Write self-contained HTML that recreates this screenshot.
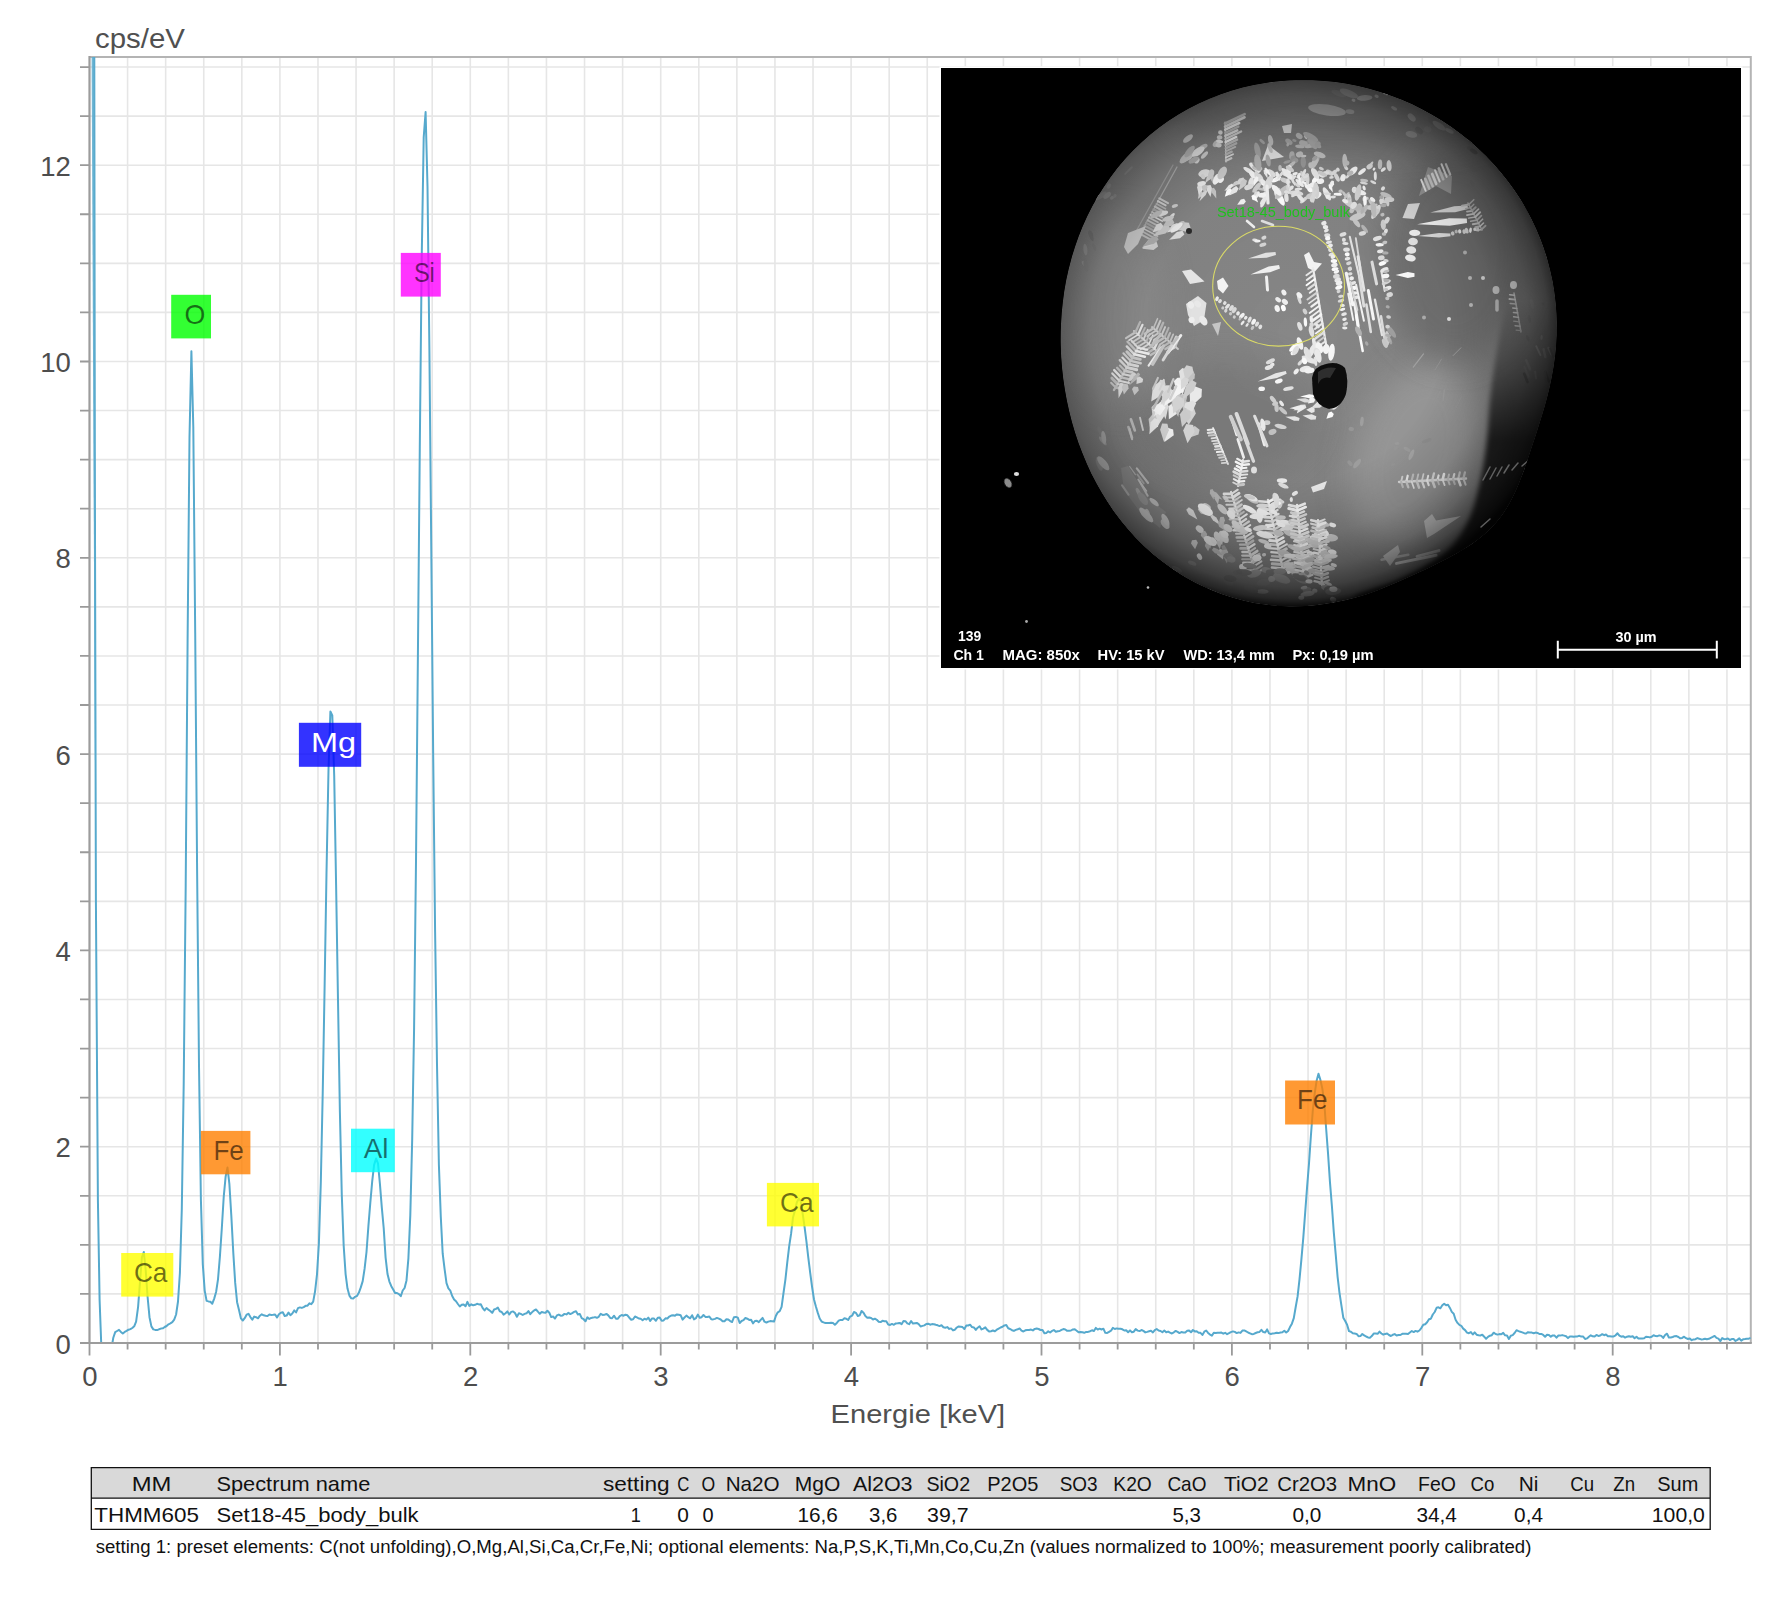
<!DOCTYPE html>
<html><head><meta charset="utf-8"><title>EDS spectrum Set18-45_body_bulk</title>
<style>
html,body{margin:0;padding:0;background:#fff;}
body{width:1782px;height:1599px;overflow:hidden;font-family:"Liberation Sans",sans-serif;}
svg{display:block;font-family:"Liberation Sans",sans-serif;}
</style></head><body>
<svg width="1782" height="1599" viewBox="0 0 1782 1599">
<rect width="1782" height="1599" fill="#fff"/>
<!-- chart -->
<path d="M127.58 57.0V1343.0M165.66 57.0V1343.0M203.74 57.0V1343.0M241.82 57.0V1343.0M279.90 57.0V1343.0M317.98 57.0V1343.0M356.06 57.0V1343.0M394.14 57.0V1343.0M432.22 57.0V1343.0M470.30 57.0V1343.0M508.38 57.0V1343.0M546.46 57.0V1343.0M584.54 57.0V1343.0M622.62 57.0V1343.0M660.70 57.0V1343.0M698.78 57.0V1343.0M736.86 57.0V1343.0M774.94 57.0V1343.0M813.02 57.0V1343.0M851.10 57.0V1343.0M889.18 57.0V1343.0M927.26 57.0V1343.0M965.34 57.0V1343.0M1003.42 57.0V1343.0M1041.50 57.0V1343.0M1079.58 57.0V1343.0M1117.66 57.0V1343.0M1155.74 57.0V1343.0M1193.82 57.0V1343.0M1231.90 57.0V1343.0M1269.98 57.0V1343.0M1308.06 57.0V1343.0M1346.14 57.0V1343.0M1384.22 57.0V1343.0M1422.30 57.0V1343.0M1460.38 57.0V1343.0M1498.46 57.0V1343.0M1536.54 57.0V1343.0M1574.62 57.0V1343.0M1612.70 57.0V1343.0M1650.78 57.0V1343.0M1688.86 57.0V1343.0M1726.94 57.0V1343.0M89.5 1293.92H1750.8M89.5 1244.85H1750.8M89.5 1195.78H1750.8M89.5 1146.70H1750.8M89.5 1097.62H1750.8M89.5 1048.55H1750.8M89.5 999.47H1750.8M89.5 950.40H1750.8M89.5 901.33H1750.8M89.5 852.25H1750.8M89.5 803.17H1750.8M89.5 754.10H1750.8M89.5 705.02H1750.8M89.5 655.95H1750.8M89.5 606.88H1750.8M89.5 557.80H1750.8M89.5 508.72H1750.8M89.5 459.65H1750.8M89.5 410.57H1750.8M89.5 361.50H1750.8M89.5 312.42H1750.8M89.5 263.35H1750.8M89.5 214.27H1750.8M89.5 165.20H1750.8M89.5 116.12H1750.8M89.5 67.05H1750.8" stroke="#e6e6e6" stroke-width="1.6" fill="none"/>
<path d="M89.5 57.0H1750.8V1343.0" stroke="#b4b4b4" stroke-width="2" fill="none"/>
<path d="M89.50 1343.0v12.5M127.58 1343.0v6.5M165.66 1343.0v6.5M203.74 1343.0v6.5M241.82 1343.0v6.5M279.90 1343.0v12.5M317.98 1343.0v6.5M356.06 1343.0v6.5M394.14 1343.0v6.5M432.22 1343.0v6.5M470.30 1343.0v12.5M508.38 1343.0v6.5M546.46 1343.0v6.5M584.54 1343.0v6.5M622.62 1343.0v6.5M660.70 1343.0v12.5M698.78 1343.0v6.5M736.86 1343.0v6.5M774.94 1343.0v6.5M813.02 1343.0v6.5M851.10 1343.0v12.5M889.18 1343.0v6.5M927.26 1343.0v6.5M965.34 1343.0v6.5M1003.42 1343.0v6.5M1041.50 1343.0v12.5M1079.58 1343.0v6.5M1117.66 1343.0v6.5M1155.74 1343.0v6.5M1193.82 1343.0v6.5M1231.90 1343.0v12.5M1269.98 1343.0v6.5M1308.06 1343.0v6.5M1346.14 1343.0v6.5M1384.22 1343.0v6.5M1422.30 1343.0v12.5M1460.38 1343.0v6.5M1498.46 1343.0v6.5M1536.54 1343.0v6.5M1574.62 1343.0v6.5M1612.70 1343.0v12.5M1650.78 1343.0v6.5M1688.86 1343.0v6.5M1726.94 1343.0v6.5M89.5 1343.00h-9.5M89.5 1293.92h-9.5M89.5 1244.85h-9.5M89.5 1195.78h-9.5M89.5 1146.70h-9.5M89.5 1097.62h-9.5M89.5 1048.55h-9.5M89.5 999.47h-9.5M89.5 950.40h-9.5M89.5 901.33h-9.5M89.5 852.25h-9.5M89.5 803.17h-9.5M89.5 754.10h-9.5M89.5 705.02h-9.5M89.5 655.95h-9.5M89.5 606.88h-9.5M89.5 557.80h-9.5M89.5 508.72h-9.5M89.5 459.65h-9.5M89.5 410.57h-9.5M89.5 361.50h-9.5M89.5 312.42h-9.5M89.5 263.35h-9.5M89.5 214.27h-9.5M89.5 165.20h-9.5M89.5 116.12h-9.5M89.5 67.05h-9.5" stroke="#9a9a9a" stroke-width="1.8" fill="none"/>
<g font-size="27.5" fill="#4d4d4d">
<text x="70.9" y="1353.6" text-anchor="end">0</text>
<text x="70.9" y="1157.3" text-anchor="end">2</text>
<text x="70.9" y="961.0" text-anchor="end">4</text>
<text x="70.9" y="764.7" text-anchor="end">6</text>
<text x="70.9" y="568.4" text-anchor="end">8</text>
<text x="70.9" y="372.1" text-anchor="end">10</text>
<text x="70.9" y="175.8" text-anchor="end">12</text>
<text x="89.8" y="1385.8" text-anchor="middle">0</text>
<text x="280.2" y="1385.8" text-anchor="middle">1</text>
<text x="470.6" y="1385.8" text-anchor="middle">2</text>
<text x="661.0" y="1385.8" text-anchor="middle">3</text>
<text x="851.4" y="1385.8" text-anchor="middle">4</text>
<text x="1041.8" y="1385.8" text-anchor="middle">5</text>
<text x="1232.2" y="1385.8" text-anchor="middle">6</text>
<text x="1422.6" y="1385.8" text-anchor="middle">7</text>
<text x="1613.0" y="1385.8" text-anchor="middle">8</text>
</g>
<text x="95" y="47.7" font-size="27.8" fill="#505050" textLength="90" lengthAdjust="spacingAndGlyphs">cps/eV</text>
<text x="830.6" y="1423.2" font-size="26.4" fill="#505050" textLength="174.6" lengthAdjust="spacingAndGlyphs">Energie [keV]</text>
<clipPath id="pc"><rect x="89.5" y="57.0" width="1661.3" height="1287.0"/></clipPath>
<path clip-path="url(#pc)" d="M93.6,-400.0 94.3,57.0 94.8,450.0 95.9,900.0 97.9,1200.0 99.6,1300.0 101.2,1343.0 112.4,1343.0 113.3,1337.7 115.2,1332.1 117.1,1331.0 119.0,1329.9 120.9,1331.9 122.8,1333.5 124.7,1331.9 126.6,1330.9 128.5,1329.7 130.4,1329.1 132.3,1328.0 134.2,1326.3 136.1,1321.7 138.1,1306.8 140.0,1281.8 141.9,1257.3 143.8,1252.0 145.7,1270.0 147.6,1297.0 149.5,1317.2 151.4,1326.4 153.3,1329.4 155.2,1329.9 157.1,1330.1 159.0,1329.3 160.9,1328.6 162.8,1328.3 164.7,1327.0 166.6,1326.0 168.5,1324.3 170.4,1323.4 172.3,1322.2 174.2,1319.6 176.1,1314.5 178.0,1301.5 179.9,1273.0 181.8,1209.3 183.7,1084.3 185.7,885.6 187.6,640.7 189.5,437.2 191.4,351.3 193.3,427.0 195.2,632.4 197.1,869.8 199.0,1065.3 200.9,1199.8 202.8,1264.4 204.7,1290.6 206.6,1300.9 208.5,1301.4 210.4,1301.7 212.3,1303.7 214.2,1298.6 216.1,1292.0 218.0,1279.3 219.9,1256.7 221.8,1228.5 223.7,1197.2 225.6,1176.8 227.5,1167.5 229.4,1184.2 231.3,1215.4 233.3,1252.9 235.2,1282.9 237.1,1302.2 239.0,1310.0 240.9,1318.4 242.8,1320.5 244.7,1318.2 246.6,1314.7 248.5,1313.8 250.4,1317.1 252.3,1319.7 254.2,1316.6 256.1,1317.2 258.0,1318.3 259.9,1315.7 261.8,1314.3 263.7,1315.3 265.6,1315.8 267.5,1316.1 269.4,1314.5 271.3,1314.9 273.2,1314.8 275.1,1314.5 277.0,1317.4 278.9,1314.2 280.9,1312.7 282.8,1312.3 284.7,1316.0 286.6,1315.6 288.5,1312.6 290.4,1315.2 292.3,1313.6 294.2,1310.4 296.1,1312.4 298.0,1308.2 299.9,1307.4 301.8,1307.9 303.7,1307.1 305.6,1305.8 307.5,1305.7 309.4,1303.3 311.3,1304.2 313.2,1301.6 315.1,1291.1 317.0,1274.3 318.9,1243.3 320.8,1182.7 322.7,1094.1 324.6,987.4 326.5,872.7 328.5,769.7 330.4,711.5 332.3,715.5 334.2,775.6 336.1,885.1 338.0,1000.4 339.9,1112.3 341.8,1195.3 343.7,1246.0 345.6,1274.1 347.5,1288.6 349.4,1295.6 351.3,1298.3 353.2,1298.5 355.1,1296.8 357.0,1295.9 358.9,1292.6 360.8,1287.4 362.7,1281.1 364.6,1268.7 366.5,1252.0 368.4,1226.1 370.3,1202.8 372.2,1181.3 374.1,1164.9 376.1,1158.5 378.0,1163.3 379.9,1183.6 381.8,1207.3 383.7,1228.0 385.6,1257.6 387.5,1274.0 389.4,1281.6 391.3,1286.2 393.2,1289.5 395.1,1293.0 397.0,1293.0 398.9,1294.1 400.8,1296.2 402.7,1290.5 404.6,1288.0 406.5,1280.4 408.4,1258.3 410.3,1215.1 412.2,1138.9 414.1,1027.4 416.0,861.3 417.9,655.8 419.8,446.5 421.7,259.6 423.7,137.4 425.6,112.0 427.5,186.2 429.4,350.2 431.3,551.5 433.2,756.3 435.1,931.6 437.0,1064.4 438.9,1164.9 440.8,1217.0 442.7,1253.7 444.6,1269.1 446.5,1283.1 448.4,1288.4 450.3,1290.7 452.2,1296.0 454.1,1299.5 456.0,1301.2 457.9,1304.0 459.8,1306.5 461.7,1304.8 463.6,1304.4 465.5,1306.3 467.4,1301.8 469.3,1305.9 471.3,1304.3 473.2,1305.3 475.1,1304.8 477.0,1303.8 478.9,1304.4 480.8,1304.2 482.7,1308.1 484.6,1310.4 486.5,1308.0 488.4,1309.7 490.3,1311.0 492.2,1312.9 494.1,1309.5 496.0,1308.9 497.9,1307.6 499.8,1311.3 501.7,1312.0 503.6,1314.7 505.5,1313.3 507.4,1311.4 509.3,1314.5 511.2,1311.9 513.1,1311.4 515.0,1313.0 516.9,1316.8 518.9,1313.3 520.8,1313.9 522.7,1315.0 524.6,1313.9 526.5,1313.3 528.4,1311.1 530.3,1314.1 532.2,1312.1 534.1,1310.4 536.0,1309.5 537.9,1311.7 539.8,1313.8 541.7,1312.0 543.6,1312.5 545.5,1312.8 547.4,1310.8 549.3,1312.7 551.2,1317.1 553.1,1316.5 555.0,1318.6 556.9,1315.4 558.8,1314.6 560.7,1315.7 562.6,1315.4 564.5,1313.9 566.5,1314.4 568.4,1312.7 570.3,1314.1 572.2,1313.1 574.1,1311.9 576.0,1311.2 577.9,1314.5 579.8,1313.9 581.7,1318.1 583.6,1319.2 585.5,1321.2 587.4,1317.3 589.3,1318.9 591.2,1317.9 593.1,1317.6 595.0,1317.1 596.9,1317.8 598.8,1316.8 600.7,1313.8 602.6,1314.9 604.5,1314.8 606.4,1313.9 608.3,1315.4 610.2,1317.9 612.1,1318.2 614.1,1315.7 616.0,1318.7 617.9,1318.7 619.8,1316.1 621.7,1315.0 623.6,1315.7 625.5,1314.7 627.4,1315.3 629.3,1317.7 631.2,1319.7 633.1,1319.3 635.0,1316.5 636.9,1317.4 638.8,1318.5 640.7,1318.8 642.6,1320.2 644.5,1318.7 646.4,1319.6 648.3,1317.6 650.2,1320.9 652.1,1318.4 654.0,1318.6 655.9,1320.8 657.8,1317.7 659.7,1317.6 661.7,1320.7 663.6,1320.4 665.5,1318.3 667.4,1318.4 669.3,1316.6 671.2,1315.6 673.1,1315.3 675.0,1315.7 676.9,1314.4 678.8,1314.8 680.7,1315.3 682.6,1319.7 684.5,1317.5 686.4,1315.6 688.3,1317.2 690.2,1318.3 692.1,1315.2 694.0,1319.4 695.9,1318.2 697.8,1314.6 699.7,1317.8 701.6,1317.2 703.5,1315.0 705.4,1316.9 707.3,1317.0 709.3,1316.5 711.2,1319.2 713.1,1319.4 715.0,1318.9 716.9,1317.9 718.8,1318.7 720.7,1319.5 722.6,1321.2 724.5,1321.2 726.4,1319.3 728.3,1319.5 730.2,1321.1 732.1,1322.0 734.0,1317.2 735.9,1316.9 737.8,1317.6 739.7,1323.0 741.6,1321.0 743.5,1320.2 745.4,1318.0 747.3,1318.7 749.2,1319.9 751.1,1319.8 753.0,1323.4 754.9,1321.0 756.9,1320.7 758.8,1322.2 760.7,1319.9 762.6,1317.9 764.5,1321.7 766.4,1322.6 768.3,1321.6 770.2,1321.1 772.1,1321.3 774.0,1321.6 775.9,1315.8 777.8,1312.3 779.7,1311.2 781.6,1306.8 783.5,1293.0 785.4,1279.6 787.3,1262.1 789.2,1246.2 791.1,1233.7 793.0,1217.5 794.9,1210.7 796.8,1202.5 798.7,1198.7 800.6,1200.6 802.5,1212.5 804.5,1226.3 806.4,1241.2 808.3,1257.7 810.2,1272.8 812.1,1287.1 814.0,1299.5 815.9,1306.5 817.8,1312.9 819.7,1318.5 821.6,1321.5 823.5,1322.4 825.4,1323.0 827.3,1322.9 829.2,1323.1 831.1,1322.8 833.0,1323.1 834.9,1324.7 836.8,1322.9 838.7,1320.7 840.6,1319.9 842.5,1319.9 844.4,1318.3 846.3,1318.8 848.2,1319.9 850.1,1316.6 852.1,1315.7 854.0,1312.0 855.9,1312.8 857.8,1316.0 859.7,1315.3 861.6,1311.0 863.5,1312.7 865.4,1316.1 867.3,1317.8 869.2,1317.5 871.1,1318.0 873.0,1319.5 874.9,1318.7 876.8,1319.8 878.7,1321.7 880.6,1322.1 882.5,1320.8 884.4,1321.2 886.3,1321.3 888.2,1324.5 890.1,1324.9 892.0,1323.9 893.9,1324.8 895.8,1323.4 897.7,1323.3 899.7,1322.9 901.6,1324.2 903.5,1321.1 905.4,1321.2 907.3,1323.4 909.2,1324.2 911.1,1321.1 913.0,1323.6 914.9,1323.2 916.8,1322.9 918.7,1324.1 920.6,1326.5 922.5,1325.9 924.4,1325.4 926.3,1324.0 928.2,1323.7 930.1,1324.7 932.0,1324.1 933.9,1324.2 935.8,1324.8 937.7,1325.3 939.6,1326.1 941.5,1325.2 943.4,1327.2 945.3,1327.7 947.3,1327.1 949.2,1328.9 951.1,1328.4 953.0,1330.4 954.9,1329.7 956.8,1327.5 958.7,1326.4 960.6,1326.7 962.5,1327.1 964.4,1329.0 966.3,1325.6 968.2,1325.5 970.1,1324.7 972.0,1327.1 973.9,1327.4 975.8,1329.9 977.7,1327.7 979.6,1326.3 981.5,1329.4 983.4,1328.6 985.3,1327.3 987.2,1329.9 989.1,1331.4 991.0,1331.2 992.9,1330.5 994.9,1331.3 996.8,1329.7 998.7,1328.6 1000.6,1327.5 1002.5,1326.8 1004.4,1325.4 1006.3,1325.1 1008.2,1328.3 1010.1,1329.0 1012.0,1330.2 1013.9,1330.9 1015.8,1329.9 1017.7,1329.3 1019.6,1328.4 1021.5,1330.6 1023.4,1331.5 1025.3,1330.3 1027.2,1329.9 1029.1,1329.9 1031.0,1329.6 1032.9,1330.4 1034.8,1328.9 1036.7,1328.5 1038.6,1329.0 1040.5,1330.0 1042.5,1329.9 1044.4,1333.3 1046.3,1332.9 1048.2,1331.3 1050.1,1332.5 1052.0,1330.9 1053.9,1330.1 1055.8,1331.8 1057.7,1331.2 1059.6,1331.0 1061.5,1329.9 1063.4,1329.1 1065.3,1329.5 1067.2,1330.8 1069.1,1330.7 1071.0,1330.5 1072.9,1329.4 1074.8,1329.3 1076.7,1330.7 1078.6,1332.3 1080.5,1331.9 1082.4,1332.2 1084.3,1332.8 1086.2,1331.9 1088.1,1331.9 1090.1,1331.2 1092.0,1330.3 1093.9,1331.0 1095.8,1327.9 1097.7,1329.6 1099.6,1328.7 1101.5,1329.5 1103.4,1328.7 1105.3,1332.8 1107.2,1332.9 1109.1,1331.8 1111.0,1330.7 1112.9,1327.9 1114.8,1329.0 1116.7,1328.4 1118.6,1328.7 1120.5,1328.7 1122.4,1329.3 1124.3,1330.5 1126.2,1330.3 1128.1,1332.2 1130.0,1330.4 1131.9,1332.3 1133.8,1331.7 1135.7,1329.1 1137.7,1330.6 1139.6,1331.1 1141.5,1330.0 1143.4,1330.9 1145.3,1332.4 1147.2,1331.9 1149.1,1331.3 1151.0,1330.8 1152.9,1332.4 1154.8,1330.1 1156.7,1329.0 1158.6,1330.5 1160.5,1331.0 1162.4,1332.2 1164.3,1330.6 1166.2,1332.3 1168.1,1331.6 1170.0,1332.7 1171.9,1333.5 1173.8,1332.3 1175.7,1330.9 1177.6,1331.8 1179.5,1333.1 1181.4,1332.0 1183.3,1332.5 1185.3,1332.4 1187.2,1330.8 1189.1,1330.5 1191.0,1332.3 1192.9,1330.0 1194.8,1331.4 1196.7,1331.2 1198.6,1332.7 1200.5,1332.8 1202.4,1334.9 1204.3,1331.7 1206.2,1330.5 1208.1,1332.9 1210.0,1334.6 1211.9,1335.6 1213.8,1332.7 1215.7,1333.0 1217.6,1332.7 1219.5,1332.8 1221.4,1332.6 1223.3,1333.7 1225.2,1332.8 1227.1,1334.2 1229.0,1333.2 1230.9,1332.1 1232.9,1331.4 1234.8,1331.9 1236.7,1333.1 1238.6,1332.4 1240.5,1332.9 1242.4,1330.6 1244.3,1330.4 1246.2,1331.4 1248.1,1332.5 1250.0,1333.3 1251.9,1334.2 1253.8,1333.9 1255.7,1333.0 1257.6,1332.3 1259.5,1331.9 1261.4,1329.8 1263.3,1332.1 1265.2,1332.5 1267.1,1329.4 1269.0,1333.4 1270.9,1334.0 1272.8,1333.4 1274.7,1333.2 1276.6,1332.7 1278.5,1333.1 1280.5,1332.5 1282.4,1332.2 1284.3,1330.7 1286.2,1332.5 1288.1,1331.0 1290.0,1327.1 1291.9,1323.7 1293.8,1318.2 1295.7,1307.0 1297.6,1296.4 1299.5,1279.4 1301.4,1259.4 1303.3,1237.6 1305.2,1212.4 1307.1,1186.9 1309.0,1163.5 1310.9,1135.8 1312.8,1110.5 1314.7,1093.3 1316.6,1080.8 1318.5,1073.8 1320.4,1079.9 1322.3,1088.4 1324.2,1101.6 1326.1,1128.0 1328.1,1154.3 1330.0,1182.6 1331.9,1206.0 1333.8,1232.4 1335.7,1254.3 1337.6,1276.8 1339.5,1292.8 1341.4,1305.3 1343.3,1317.7 1345.2,1321.0 1347.1,1324.8 1349.0,1331.1 1350.9,1331.7 1352.8,1333.3 1354.7,1333.6 1356.6,1333.9 1358.5,1336.2 1360.4,1336.1 1362.3,1334.0 1364.2,1335.3 1366.1,1336.5 1368.0,1337.4 1369.9,1337.7 1371.8,1336.1 1373.7,1333.6 1375.7,1333.6 1377.6,1333.8 1379.5,1331.6 1381.4,1333.5 1383.3,1334.7 1385.2,1333.9 1387.1,1333.5 1389.0,1335.0 1390.9,1336.0 1392.8,1334.8 1394.7,1334.1 1396.6,1335.5 1398.5,1335.0 1400.4,1335.0 1402.3,1333.8 1404.2,1333.8 1406.1,1333.8 1408.0,1334.1 1409.9,1332.5 1411.8,1331.0 1413.7,1332.1 1415.6,1330.9 1417.5,1331.7 1419.4,1330.5 1421.3,1328.1 1423.3,1324.7 1425.2,1324.2 1427.1,1322.2 1429.0,1319.2 1430.9,1318.7 1432.8,1314.5 1434.7,1312.0 1436.6,1307.8 1438.5,1307.3 1440.4,1308.3 1442.3,1305.3 1444.2,1303.7 1446.1,1305.2 1448.0,1304.7 1449.9,1307.9 1451.8,1311.9 1453.7,1313.8 1455.6,1319.7 1457.5,1322.9 1459.4,1324.9 1461.3,1325.8 1463.2,1328.6 1465.1,1330.1 1467.0,1332.6 1468.9,1333.2 1470.9,1332.1 1472.8,1334.5 1474.7,1332.4 1476.6,1334.7 1478.5,1335.3 1480.4,1335.5 1482.3,1334.7 1484.2,1336.7 1486.1,1338.8 1488.0,1336.9 1489.9,1335.7 1491.8,1335.2 1493.7,1332.7 1495.6,1334.0 1497.5,1334.6 1499.4,1334.1 1501.3,1334.3 1503.2,1332.9 1505.1,1335.3 1507.0,1335.4 1508.9,1338.9 1510.8,1335.7 1512.7,1335.1 1514.6,1333.0 1516.5,1330.2 1518.5,1331.1 1520.4,1331.8 1522.3,1332.4 1524.2,1333.2 1526.1,1333.5 1528.0,1332.2 1529.9,1332.4 1531.8,1332.6 1533.7,1333.3 1535.6,1332.6 1537.5,1332.9 1539.4,1334.0 1541.3,1333.9 1543.2,1334.9 1545.1,1336.7 1547.0,1334.8 1548.9,1335.0 1550.8,1336.7 1552.7,1335.4 1554.6,1335.6 1556.5,1337.7 1558.4,1335.5 1560.3,1335.6 1562.2,1335.1 1564.1,1335.6 1566.1,1336.2 1568.0,1338.1 1569.9,1336.4 1571.8,1336.4 1573.7,1336.8 1575.6,1336.4 1577.5,1336.4 1579.4,1335.8 1581.3,1336.6 1583.2,1336.6 1585.1,1339.0 1587.0,1338.4 1588.9,1336.8 1590.8,1335.3 1592.7,1336.3 1594.6,1336.6 1596.5,1334.9 1598.4,1336.0 1600.3,1335.5 1602.2,1334.2 1604.1,1335.2 1606.0,1334.5 1607.9,1336.2 1609.8,1336.2 1611.7,1336.5 1613.7,1336.4 1615.6,1335.3 1617.5,1333.3 1619.4,1335.6 1621.3,1336.7 1623.2,1336.2 1625.1,1337.6 1627.0,1336.7 1628.9,1336.2 1630.8,1336.8 1632.7,1336.3 1634.6,1338.2 1636.5,1336.8 1638.4,1338.6 1640.3,1338.6 1642.2,1338.5 1644.1,1338.3 1646.0,1336.8 1647.9,1336.9 1649.8,1337.4 1651.7,1336.7 1653.6,1335.2 1655.5,1336.1 1657.4,1336.2 1659.3,1335.4 1661.3,1335.9 1663.2,1337.9 1665.1,1335.0 1667.0,1333.7 1668.9,1337.5 1670.8,1337.5 1672.7,1337.0 1674.6,1336.2 1676.5,1336.1 1678.4,1337.0 1680.3,1338.3 1682.2,1337.9 1684.1,1336.7 1686.0,1338.2 1687.9,1339.0 1689.8,1338.4 1691.7,1340.2 1693.6,1339.4 1695.5,1339.2 1697.4,1338.1 1699.3,1338.8 1701.2,1339.4 1703.1,1339.2 1705.0,1338.8 1706.9,1339.2 1708.9,1338.8 1710.8,1337.8 1712.7,1336.9 1714.6,1335.9 1716.5,1337.9 1718.4,1338.6 1720.3,1341.1 1722.2,1338.1 1724.1,1339.2 1726.0,1339.0 1727.9,1338.5 1729.8,1340.0 1731.7,1339.1 1733.6,1339.1 1735.5,1340.9 1737.4,1339.9 1739.3,1338.4 1741.2,1340.6 1743.1,1339.3 1745.0,1339.1 1746.9,1338.8 1748.8,1338.7 1750.7,1337.9" stroke="#56a9cd" stroke-width="2" stroke-linejoin="round" fill="none"/>
<path clip-path="url(#pc)" d="M91.6 56L94.6 56L95.6 760L94.9 760Z" fill="#5aabce" fill-opacity="0.85"/>
<path d="M89.5 56.0V1343.0H1751.8" stroke="#9c9c9c" stroke-width="2.2" fill="none"/>
<rect x="121.2" y="1253.0" width="52.1" height="43.6" fill="#ffff00" fill-opacity="0.8"/>
<text x="133.9" y="1281.8" font-size="27.8" fill="#000" fill-opacity="0.56" textLength="33.5" lengthAdjust="spacingAndGlyphs">Ca</text>
<rect x="171.2" y="294.8" width="39.8" height="43.6" fill="#00ff00" fill-opacity="0.8"/>
<text x="184.6" y="323.6" font-size="27.8" fill="#000" fill-opacity="0.56" textLength="20.8" lengthAdjust="spacingAndGlyphs">O</text>
<rect x="200.9" y="1130.9" width="49.5" height="43.4" fill="#ff8000" fill-opacity="0.8"/>
<text x="213.4" y="1159.7" font-size="27.8" fill="#000" fill-opacity="0.56" textLength="30.5" lengthAdjust="spacingAndGlyphs">Fe</text>
<rect x="298.9" y="722.8" width="62.3" height="44.0" fill="#0000ff" fill-opacity="0.8"/>
<text x="311.0" y="752.3" font-size="28.5" fill="#ffffff" textLength="45.1" lengthAdjust="spacingAndGlyphs">Mg</text>
<rect x="351.0" y="1128.7" width="43.8" height="43.5" fill="#00ffff" fill-opacity="0.8"/>
<text x="363.7" y="1157.5" font-size="27.8" fill="#000" fill-opacity="0.56" textLength="24.7" lengthAdjust="spacingAndGlyphs">Al</text>
<rect x="400.8" y="252.9" width="40.0" height="43.7" fill="#ff00ff" fill-opacity="0.8"/>
<text x="413.9" y="281.7" font-size="27.8" fill="#000" fill-opacity="0.56" textLength="20.9" lengthAdjust="spacingAndGlyphs">Si</text>
<rect x="766.9" y="1182.9" width="52.1" height="43.5" fill="#ffff00" fill-opacity="0.8"/>
<text x="780.1" y="1211.7" font-size="27.8" fill="#000" fill-opacity="0.56" textLength="33.6" lengthAdjust="spacingAndGlyphs">Ca</text>
<rect x="1285.1" y="1080.5" width="49.9" height="44.0" fill="#ff8000" fill-opacity="0.8"/>
<text x="1297.1" y="1109.3" font-size="27.8" fill="#000" fill-opacity="0.56" textLength="30.5" lengthAdjust="spacingAndGlyphs">Fe</text>
<!-- sem -->
<rect x="939.5" y="66.5" width="803" height="603" fill="#fff"/>
<defs>
<radialGradient id="sg" gradientUnits="userSpaceOnUse" cx="1290" cy="335" r="270"><stop offset="0" stop-color="#878787"/><stop offset="0.6" stop-color="#848484"/><stop offset="1" stop-color="#7c7c7c"/></radialGradient>
<radialGradient id="lg" gradientUnits="userSpaceOnUse" cx="1293" cy="332" r="274"><stop offset="0" stop-color="#000" stop-opacity="0"/><stop offset="0.55" stop-color="#000" stop-opacity="0.02"/><stop offset="0.74" stop-color="#000" stop-opacity="0.14"/><stop offset="0.86" stop-color="#000" stop-opacity="0.32"/><stop offset="0.93" stop-color="#000" stop-opacity="0.50"/><stop offset="0.975" stop-color="#000" stop-opacity="0.70"/><stop offset="1" stop-color="#000" stop-opacity="0.90"/></radialGradient>
<linearGradient id="cg" gradientUnits="userSpaceOnUse" x1="0" y1="300" x2="0" y2="440"><stop offset="0" stop-color="#000" stop-opacity="0"/><stop offset="0.5" stop-color="#000" stop-opacity="0.35"/><stop offset="1" stop-color="#000" stop-opacity="0.74"/></linearGradient>
<filter id="b1" x="-5%" y="-5%" width="110%" height="110%"><feGaussianBlur stdDeviation="0.6"/></filter>
<filter id="b2" x="-10%" y="-10%" width="120%" height="120%"><feGaussianBlur stdDeviation="1.6"/></filter>
<filter id="b3" x="-20%" y="-20%" width="140%" height="140%"><feGaussianBlur stdDeviation="2.4"/></filter>
<filter id="b4" x="-20%" y="-20%" width="140%" height="140%"><feGaussianBlur stdDeviation="3.5"/></filter>
<filter id="b8" x="-40%" y="-40%" width="180%" height="180%"><feGaussianBlur stdDeviation="16"/></filter>
<filter id="b5" x="-20%" y="-20%" width="140%" height="140%"><feGaussianBlur stdDeviation="6"/></filter>
<clipPath id="sc"><path d="M1556.1 346.0C1555.6 353.1 1554.7 360.2 1553.6 367.1C1552.5 374.1 1551.1 381.0 1549.5 387.9C1547.9 394.7 1546.1 401.5 1544.2 408.2C1542.2 414.9 1540.1 421.6 1538.0 428.3C1535.9 434.9 1533.7 441.6 1531.4 448.3C1529.1 455.0 1527.0 461.9 1524.5 468.7C1522.0 475.5 1519.5 482.5 1516.5 489.2C1513.4 495.9 1510.2 502.7 1506.2 508.9C1502.2 515.2 1497.7 521.2 1492.6 526.6C1487.6 532.0 1481.8 536.8 1475.9 541.3C1469.9 545.7 1463.5 549.5 1457.1 553.2C1450.7 556.9 1444.1 560.1 1437.5 563.4C1431.0 566.7 1424.4 569.9 1417.8 573.0C1411.2 576.1 1404.7 579.2 1397.9 582.1C1391.2 585.0 1384.4 587.9 1377.5 590.4C1370.6 593.0 1363.5 595.4 1356.3 597.4C1349.2 599.4 1341.8 601.2 1334.4 602.6C1327.1 604.0 1319.5 605.0 1312.0 605.7C1304.5 606.3 1296.8 606.6 1289.2 606.5C1281.6 606.3 1273.9 605.8 1266.4 604.8C1258.8 603.9 1251.2 602.5 1243.8 600.7C1236.3 598.9 1228.9 596.7 1221.7 594.2C1214.4 591.6 1207.3 588.6 1200.4 585.3C1193.5 582.0 1186.8 578.2 1180.3 574.2C1173.7 570.2 1167.4 565.8 1161.4 561.1C1155.4 556.4 1149.6 551.4 1144.0 546.2C1138.5 540.9 1133.2 535.4 1128.3 529.7C1123.3 524.0 1118.6 518.1 1114.2 512.0C1109.8 505.9 1105.7 499.5 1101.9 493.1C1098.0 486.7 1094.5 480.1 1091.2 473.5C1088.0 466.8 1085.0 460.0 1082.3 453.1C1079.5 446.3 1077.1 439.3 1074.9 432.3C1072.7 425.3 1070.8 418.2 1069.1 411.1C1067.4 404.0 1066.0 396.8 1064.8 389.6C1063.6 382.4 1062.7 375.1 1062.0 367.9C1061.3 360.6 1060.9 353.3 1060.7 346.0C1060.5 338.7 1060.6 331.4 1061.0 324.0C1061.3 316.7 1061.9 309.4 1062.8 302.1C1063.6 294.7 1064.8 287.4 1066.2 280.1C1067.7 272.9 1069.4 265.6 1071.4 258.4C1073.4 251.3 1075.8 244.1 1078.4 237.1C1081.0 230.0 1084.0 223.1 1087.2 216.2C1090.5 209.4 1094.1 202.7 1098.0 196.1C1101.9 189.6 1106.1 183.2 1110.6 177.0C1115.1 170.8 1119.9 164.8 1125.0 159.0C1130.2 153.3 1135.6 147.7 1141.3 142.5C1146.9 137.3 1152.9 132.3 1159.1 127.6C1165.3 123.0 1171.7 118.6 1178.4 114.5C1185.0 110.5 1191.9 106.8 1198.9 103.4C1205.9 100.1 1213.1 97.1 1220.4 94.4C1227.7 91.8 1235.2 89.5 1242.8 87.6C1250.3 85.7 1257.9 84.1 1265.6 82.9C1273.3 81.8 1281.0 81.0 1288.8 80.5C1296.5 80.1 1304.3 80.0 1312.0 80.3C1319.7 80.5 1327.4 81.2 1335.1 82.1C1342.7 83.1 1350.3 84.4 1357.8 86.1C1365.3 87.7 1372.8 89.7 1380.1 92.0C1387.4 94.3 1394.6 96.9 1401.6 99.8C1408.6 102.7 1415.6 105.9 1422.3 109.4C1429.1 112.9 1435.6 116.7 1442.0 120.8C1448.4 124.8 1454.6 129.2 1460.6 133.8C1466.6 138.3 1472.4 143.2 1477.9 148.3C1483.4 153.3 1488.8 158.7 1493.8 164.2C1498.8 169.7 1503.6 175.5 1508.1 181.4C1512.6 187.4 1516.9 193.5 1520.8 199.8C1524.7 206.1 1528.3 212.6 1531.6 219.2C1534.9 225.8 1537.9 232.6 1540.6 239.4C1543.3 246.2 1545.6 253.2 1547.6 260.2C1549.6 267.3 1551.3 274.4 1552.7 281.5C1554.0 288.6 1555.0 295.8 1555.7 303.0C1556.4 310.2 1556.8 317.4 1556.9 324.6C1556.9 331.7 1556.7 338.9 1556.1 346.0Z"/></clipPath>
<clipPath id="ic"><rect x="941" y="68" width="800" height="600"/></clipPath>
</defs>
<rect x="941" y="68" width="800" height="600" fill="#000"/>
<g clip-path="url(#ic)">
<g>
<g clip-path="url(#sc)">
<path d="M1556.1 346.0C1555.6 353.1 1554.7 360.2 1553.6 367.1C1552.5 374.1 1551.1 381.0 1549.5 387.9C1547.9 394.7 1546.1 401.5 1544.2 408.2C1542.2 414.9 1540.1 421.6 1538.0 428.3C1535.9 434.9 1533.7 441.6 1531.4 448.3C1529.1 455.0 1527.0 461.9 1524.5 468.7C1522.0 475.5 1519.5 482.5 1516.5 489.2C1513.4 495.9 1510.2 502.7 1506.2 508.9C1502.2 515.2 1497.7 521.2 1492.6 526.6C1487.6 532.0 1481.8 536.8 1475.9 541.3C1469.9 545.7 1463.5 549.5 1457.1 553.2C1450.7 556.9 1444.1 560.1 1437.5 563.4C1431.0 566.7 1424.4 569.9 1417.8 573.0C1411.2 576.1 1404.7 579.2 1397.9 582.1C1391.2 585.0 1384.4 587.9 1377.5 590.4C1370.6 593.0 1363.5 595.4 1356.3 597.4C1349.2 599.4 1341.8 601.2 1334.4 602.6C1327.1 604.0 1319.5 605.0 1312.0 605.7C1304.5 606.3 1296.8 606.6 1289.2 606.5C1281.6 606.3 1273.9 605.8 1266.4 604.8C1258.8 603.9 1251.2 602.5 1243.8 600.7C1236.3 598.9 1228.9 596.7 1221.7 594.2C1214.4 591.6 1207.3 588.6 1200.4 585.3C1193.5 582.0 1186.8 578.2 1180.3 574.2C1173.7 570.2 1167.4 565.8 1161.4 561.1C1155.4 556.4 1149.6 551.4 1144.0 546.2C1138.5 540.9 1133.2 535.4 1128.3 529.7C1123.3 524.0 1118.6 518.1 1114.2 512.0C1109.8 505.9 1105.7 499.5 1101.9 493.1C1098.0 486.7 1094.5 480.1 1091.2 473.5C1088.0 466.8 1085.0 460.0 1082.3 453.1C1079.5 446.3 1077.1 439.3 1074.9 432.3C1072.7 425.3 1070.8 418.2 1069.1 411.1C1067.4 404.0 1066.0 396.8 1064.8 389.6C1063.6 382.4 1062.7 375.1 1062.0 367.9C1061.3 360.6 1060.9 353.3 1060.7 346.0C1060.5 338.7 1060.6 331.4 1061.0 324.0C1061.3 316.7 1061.9 309.4 1062.8 302.1C1063.6 294.7 1064.8 287.4 1066.2 280.1C1067.7 272.9 1069.4 265.6 1071.4 258.4C1073.4 251.3 1075.8 244.1 1078.4 237.1C1081.0 230.0 1084.0 223.1 1087.2 216.2C1090.5 209.4 1094.1 202.7 1098.0 196.1C1101.9 189.6 1106.1 183.2 1110.6 177.0C1115.1 170.8 1119.9 164.8 1125.0 159.0C1130.2 153.3 1135.6 147.7 1141.3 142.5C1146.9 137.3 1152.9 132.3 1159.1 127.6C1165.3 123.0 1171.7 118.6 1178.4 114.5C1185.0 110.5 1191.9 106.8 1198.9 103.4C1205.9 100.1 1213.1 97.1 1220.4 94.4C1227.7 91.8 1235.2 89.5 1242.8 87.6C1250.3 85.7 1257.9 84.1 1265.6 82.9C1273.3 81.8 1281.0 81.0 1288.8 80.5C1296.5 80.1 1304.3 80.0 1312.0 80.3C1319.7 80.5 1327.4 81.2 1335.1 82.1C1342.7 83.1 1350.3 84.4 1357.8 86.1C1365.3 87.7 1372.8 89.7 1380.1 92.0C1387.4 94.3 1394.6 96.9 1401.6 99.8C1408.6 102.7 1415.6 105.9 1422.3 109.4C1429.1 112.9 1435.6 116.7 1442.0 120.8C1448.4 124.8 1454.6 129.2 1460.6 133.8C1466.6 138.3 1472.4 143.2 1477.9 148.3C1483.4 153.3 1488.8 158.7 1493.8 164.2C1498.8 169.7 1503.6 175.5 1508.1 181.4C1512.6 187.4 1516.9 193.5 1520.8 199.8C1524.7 206.1 1528.3 212.6 1531.6 219.2C1534.9 225.8 1537.9 232.6 1540.6 239.4C1543.3 246.2 1545.6 253.2 1547.6 260.2C1549.6 267.3 1551.3 274.4 1552.7 281.5C1554.0 288.6 1555.0 295.8 1555.7 303.0C1556.4 310.2 1556.8 317.4 1556.9 324.6C1556.9 331.7 1556.7 338.9 1556.1 346.0Z" fill="url(#sg)"/>
<ellipse cx="1225" cy="420" rx="90" ry="60" fill="#747474" opacity="0.6" filter="url(#b8)"/>
<ellipse cx="1415" cy="455" rx="62" ry="95" fill="#9c9c9c" opacity="0.85" filter="url(#b8)" transform="rotate(18 1415 455)"/>
<ellipse cx="1120" cy="310" rx="42" ry="95" fill="#8e8e8e" opacity="0.6" filter="url(#b8)"/>
<ellipse cx="1455" cy="255" rx="75" ry="105" fill="#666" opacity="0.7" filter="url(#b8)"/>
<ellipse cx="1340" cy="112" rx="170" ry="38" fill="#666" opacity="0.5" filter="url(#b8)"/>
<g filter="url(#b1)" fill="none">
<ellipse cx="1100.8" cy="196.0" rx="7.0" ry="2.4" transform="rotate(146 1100.8 196.0)" fill="#8b8b8b"/>
<ellipse cx="1108.8" cy="186.0" rx="2.7" ry="1.9" transform="rotate(118 1108.8 186.0)" fill="#8c8c8c"/>
<ellipse cx="1108.3" cy="193.8" rx="1.7" ry="1.3" transform="rotate(138 1108.3 193.8)" fill="#969696"/>
<ellipse cx="1112.0" cy="197.8" rx="2.2" ry="1.7" transform="rotate(141 1112.0 197.8)" fill="#929292"/>
<ellipse cx="1107.1" cy="195.4" rx="4.6" ry="2.5" transform="rotate(140 1107.1 195.4)" fill="#949494"/>
<ellipse cx="1114.8" cy="195.9" rx="2.2" ry="1.6" transform="rotate(129 1114.8 195.9)" fill="#8c8c8c"/>
<path d="M1136.2 167.6L1142.8 160.8" stroke="#7e7e7e" stroke-width="1.9" stroke-linecap="round"/>
<path d="M1117.9 164.7L1124.1 158.0" stroke="#949494" stroke-width="1.7" stroke-linecap="round"/>
<path d="M1125.2 173.9L1131.9 167.3" stroke="#8b8b8b" stroke-width="1.9" stroke-linecap="round"/>
<path d="M1121.2 165.5L1130.8 157.8" stroke="#808080" stroke-width="1.9" stroke-linecap="round"/>
<ellipse cx="1085.4" cy="249.5" rx="5.8" ry="2.0" transform="rotate(84 1085.4 249.5)" fill="#959595"/>
<ellipse cx="1083.9" cy="263.6" rx="3.0" ry="1.6" transform="rotate(61 1083.9 263.6)" fill="#959595"/>
<ellipse cx="1085.9" cy="265.2" rx="6.7" ry="2.3" transform="rotate(82 1085.9 265.2)" fill="#828282"/>
<ellipse cx="1090.8" cy="234.0" rx="3.7" ry="2.0" transform="rotate(68 1090.8 234.0)" fill="#787878"/>
<ellipse cx="1091.0" cy="235.9" rx="5.6" ry="1.9" transform="rotate(69 1091.0 235.9)" fill="#787878"/>
<ellipse cx="1094.2" cy="247.0" rx="4.1" ry="1.5" transform="rotate(70 1094.2 247.0)" fill="#808080"/>
<path d="M1173.0 165.0L1129.0 244.0" stroke="#9e9e9e" stroke-width="1.3" stroke-linecap="round"/>
<path d="M1177.0 167.0L1134.0 245.0" stroke="#acacac" stroke-width="1.3" stroke-linecap="round"/>
<path d="M1159.3 198.4L1168.0 203.1" stroke="#c5c5c5" stroke-width="2.1" stroke-linecap="round"/>
<path d="M1157.8 201.1L1165.7 205.4" stroke="#cdcdcd" stroke-width="1.9" stroke-linecap="round"/>
<path d="M1156.3 203.8L1165.5 208.8" stroke="#b0b0b0" stroke-width="1.6" stroke-linecap="round"/>
<path d="M1154.8 206.5L1163.6 211.3" stroke="#bebebe" stroke-width="2.0" stroke-linecap="round"/>
<path d="M1153.4 209.3L1163.1 214.5" stroke="#a5a5a5" stroke-width="2.1" stroke-linecap="round"/>
<path d="M1151.9 212.0L1162.4 217.7" stroke="#bebebe" stroke-width="1.6" stroke-linecap="round"/>
<path d="M1150.4 214.7L1162.3 221.1" stroke="#d4d4d4" stroke-width="1.6" stroke-linecap="round"/>
<path d="M1148.9 217.5L1157.9 222.3" stroke="#bdbdbd" stroke-width="1.8" stroke-linecap="round"/>
<path d="M1147.5 220.2L1157.5 225.6" stroke="#b9b9b9" stroke-width="1.8" stroke-linecap="round"/>
<path d="M1146.0 222.9L1157.5 229.1" stroke="#a0a0a0" stroke-width="2.0" stroke-linecap="round"/>
<path d="M1144.5 225.6L1156.1 231.9" stroke="#a7a7a7" stroke-width="2.0" stroke-linecap="round"/>
<path d="M1143.0 228.4L1157.6 236.2" stroke="#c5c5c5" stroke-width="1.5" stroke-linecap="round"/>
<path d="M1141.6 231.1L1152.8 237.2" stroke="#b7b7b7" stroke-width="1.7" stroke-linecap="round"/>
<path d="M1140.1 233.8L1151.2 239.8" stroke="#bababa" stroke-width="2.0" stroke-linecap="round"/>
<path d="M1124.0 247.0L1128.0 233.0L1146.0 226.0L1138.0 244.0L1128.0 254.0Z" fill="#c8c8c8"/>
<path d="M1169.1 239.7L1176.9 232.0L1182.5 230.7L1184.4 234.5L1180.0 238.3Z" fill="#dbdbdb"/>
<path d="M1142.3 248.7L1150.6 241.1L1156.4 241.2L1158.1 246.6L1153.5 250.0Z" fill="#cfcfcf"/>
<path d="M1166.7 232.6L1172.5 224.6L1177.4 223.1L1179.7 226.7L1176.3 230.6Z" fill="#dedede"/>
<path d="M1152.7 236.5L1161.5 226.8L1168.1 224.7L1170.5 228.8L1165.5 233.6Z" fill="#c8c8c8"/>
<path d="M1152.4 232.4L1156.5 224.5L1160.8 222.7L1163.4 225.9L1160.9 229.8Z" fill="#d8d8d8"/>
<path d="M1163.1 226.1L1167.6 218.8L1171.9 218.3L1174.4 222.7L1171.6 226.1Z" fill="#c2c2c2"/>
<path d="M1177.6 229.8L1184.0 222.3L1188.9 222.8L1190.9 228.7L1187.2 232.1Z" fill="#cccccc"/>
<path d="M1142.0 248.2L1147.9 240.4L1152.7 238.7L1154.8 241.8L1151.4 245.6Z" fill="#d8d8d8"/>
<path d="M1142.4 246.7L1150.5 237.8L1156.5 235.8L1158.7 239.4L1154.1 243.8Z" fill="#aeaeae"/>
<ellipse cx="1179.3" cy="226.0" rx="6.8" ry="2.9" transform="rotate(137 1179.3 226.0)" fill="#c2c2c2"/>
<ellipse cx="1172.0" cy="215.8" rx="3.5" ry="1.5" transform="rotate(136 1172.0 215.8)" fill="#dcdcdc"/>
<ellipse cx="1168.1" cy="218.6" rx="6.1" ry="2.4" transform="rotate(163 1168.1 218.6)" fill="#c9c9c9"/>
<ellipse cx="1156.2" cy="214.8" rx="2.3" ry="1.7" transform="rotate(164 1156.2 214.8)" fill="#c8c8c8"/>
<ellipse cx="1163.1" cy="213.3" rx="5.2" ry="2.4" transform="rotate(164 1163.1 213.3)" fill="#d9d9d9"/>
<ellipse cx="1176.6" cy="227.6" rx="7.5" ry="2.6" transform="rotate(142 1176.6 227.6)" fill="#eaeaea"/>
<ellipse cx="1174.9" cy="205.9" rx="3.2" ry="1.7" transform="rotate(161 1174.9 205.9)" fill="#cccccc"/>
<ellipse cx="1156.3" cy="214.4" rx="6.6" ry="2.6" transform="rotate(151 1156.3 214.4)" fill="#bbbbbb"/>
<circle cx="1189" cy="231" r="3" fill="#2c2c2c"/>
<ellipse cx="1203.4" cy="146.9" rx="4.5" ry="2.3" transform="rotate(153 1203.4 146.9)" fill="#b7b7b7"/>
<ellipse cx="1189.7" cy="156.7" rx="5.5" ry="2.3" transform="rotate(138 1189.7 156.7)" fill="#c9c9c9"/>
<ellipse cx="1198.1" cy="151.6" rx="7.5" ry="3.4" transform="rotate(145 1198.1 151.6)" fill="#dcdcdc"/>
<ellipse cx="1186.1" cy="157.2" rx="8.3" ry="3.5" transform="rotate(137 1186.1 157.2)" fill="#bfbfbf"/>
<ellipse cx="1196.9" cy="160.4" rx="3.2" ry="2.4" transform="rotate(121 1196.9 160.4)" fill="#d2d2d2"/>
<ellipse cx="1189.6" cy="151.5" rx="7.2" ry="3.0" transform="rotate(131 1189.6 151.5)" fill="#adadad"/>
<ellipse cx="1188.0" cy="138.6" rx="5.9" ry="2.8" transform="rotate(142 1188.0 138.6)" fill="#c4c4c4"/>
<ellipse cx="1204.5" cy="155.0" rx="4.7" ry="2.0" transform="rotate(132 1204.5 155.0)" fill="#cbcbcb"/>
<ellipse cx="1216.3" cy="143.4" rx="4.2" ry="2.7" transform="rotate(134 1216.3 143.4)" fill="#b9b9b9"/>
<ellipse cx="1193.7" cy="160.1" rx="5.7" ry="2.6" transform="rotate(152 1193.7 160.1)" fill="#ababab"/>
<path d="M1225.0 122.0L1226.0 162.0" stroke="#d5d5d5" stroke-width="1.2" stroke-linecap="round"/>
<path d="M1225.0 123.5L1244.7 114.1" stroke="#b2b2b2" stroke-width="2.6" stroke-linecap="round"/>
<path d="M1225.1 126.6L1244.5 117.3" stroke="#cecece" stroke-width="2.7" stroke-linecap="round"/>
<path d="M1225.2 129.7L1239.2 123.0" stroke="#dfdfdf" stroke-width="2.6" stroke-linecap="round"/>
<path d="M1225.3 132.8L1238.3 126.6" stroke="#aeaeae" stroke-width="2.5" stroke-linecap="round"/>
<path d="M1225.3 135.9L1237.2 130.3" stroke="#d1d1d1" stroke-width="2.5" stroke-linecap="round"/>
<path d="M1225.4 139.0L1241.1 131.5" stroke="#c6c6c6" stroke-width="2.3" stroke-linecap="round"/>
<path d="M1225.5 142.1L1236.3 136.9" stroke="#e0e0e0" stroke-width="2.3" stroke-linecap="round"/>
<path d="M1225.6 145.2L1237.0 139.7" stroke="#b4b4b4" stroke-width="2.6" stroke-linecap="round"/>
<path d="M1225.7 148.3L1236.2 143.3" stroke="#adadad" stroke-width="2.4" stroke-linecap="round"/>
<path d="M1225.7 151.4L1235.3 146.9" stroke="#b5b5b5" stroke-width="1.9" stroke-linecap="round"/>
<path d="M1225.8 154.5L1231.7 151.7" stroke="#b1b1b1" stroke-width="2.4" stroke-linecap="round"/>
<path d="M1225.9 157.6L1233.1 154.2" stroke="#d6d6d6" stroke-width="1.7" stroke-linecap="round"/>
<path d="M1226.0 160.7L1231.3 158.2" stroke="#c9c9c9" stroke-width="2.3" stroke-linecap="round"/>
<ellipse cx="1220.4" cy="132.5" rx="2.3" ry="2.2" transform="rotate(179 1220.4 132.5)" fill="#d3d3d3"/>
<ellipse cx="1219.6" cy="137.4" rx="2.8" ry="2.2" transform="rotate(171 1219.6 137.4)" fill="#c7c7c7"/>
<ellipse cx="1219.6" cy="141.4" rx="3.5" ry="1.7" transform="rotate(192 1219.6 141.4)" fill="#dcdcdc"/>
<ellipse cx="1218.6" cy="145.2" rx="3.1" ry="2.3" transform="rotate(187 1218.6 145.2)" fill="#cccccc"/>
<path d="M1199.1 195.7L1198.0 187.9L1199.8 184.2L1202.9 184.8L1203.2 189.0Z" fill="#f1f1f1"/>
<path d="M1210.5 196.9L1206.4 189.7L1206.9 185.4L1210.5 184.9L1212.3 188.8Z" fill="#e5e5e5"/>
<path d="M1216.3 198.6L1211.7 192.6L1211.3 188.6L1213.9 187.7L1216.0 191.0Z" fill="#c9c9c9"/>
<path d="M1197.9 198.9L1198.8 193.4L1201.0 191.4L1203.2 192.8L1202.5 195.6Z" fill="#d2d2d2"/>
<path d="M1214.0 184.7L1209.8 178.2L1209.4 174.1L1211.8 173.4L1213.8 177.0Z" fill="#c0c0c0"/>
<path d="M1199.5 201.2L1202.3 193.0L1205.4 189.6L1207.4 190.9L1205.7 195.1Z" fill="#dcdcdc"/>
<path d="M1204.0 192.3L1201.4 187.1L1202.9 184.6L1206.6 184.9L1207.6 187.7Z" fill="#cccccc"/>
<path d="M1205.0 183.5L1206.8 177.1L1209.3 174.6L1211.2 175.8L1210.0 179.2Z" fill="#d5d5d5"/>
<path d="M1199.1 195.8L1197.1 187.6L1198.2 183.3L1201.0 183.4L1201.7 187.8Z" fill="#e6e6e6"/>
<ellipse cx="1201.6" cy="183.5" rx="4.4" ry="2.3" transform="rotate(170 1201.6 183.5)" fill="#eeeeee"/>
<ellipse cx="1220.3" cy="179.3" rx="3.7" ry="3.4" transform="rotate(132 1220.3 179.3)" fill="#f8f8f8"/>
<ellipse cx="1204.6" cy="173.4" rx="6.4" ry="3.9" transform="rotate(167 1204.6 173.4)" fill="#e2e2e2"/>
<ellipse cx="1216.5" cy="179.2" rx="5.9" ry="3.0" transform="rotate(114 1216.5 179.2)" fill="#f7f7f7"/>
<ellipse cx="1211.1" cy="174.1" rx="4.9" ry="2.8" transform="rotate(108 1211.1 174.1)" fill="#cfcfcf"/>
<ellipse cx="1203.0" cy="176.7" rx="2.7" ry="2.0" transform="rotate(54 1203.0 176.7)" fill="#d9d9d9"/>
<ellipse cx="1222.2" cy="172.9" rx="6.9" ry="3.9" transform="rotate(120 1222.2 172.9)" fill="#cdcdcd"/>
<path d="M1234.5 185.1L1239.3 178.6L1243.4 177.6L1245.2 180.8L1242.5 183.9Z" fill="#d9d9d9"/>
<path d="M1224.8 196.7L1226.7 189.7L1230.0 188.0L1232.8 190.5L1231.4 193.9Z" fill="#fdfdfd"/>
<path d="M1237.2 204.8L1240.8 199.4L1244.1 198.7L1245.9 201.6L1243.7 204.2Z" fill="#f2f2f2"/>
<path d="M1238.7 190.5L1240.6 181.9L1244.0 178.8L1247.1 180.8L1245.7 185.2Z" fill="#cfcfcf"/>
<path d="M1231.0 187.5L1234.0 182.3L1236.7 180.7L1238.2 182.3L1236.5 185.0Z" fill="#d2d2d2"/>
<path d="M1224.3 191.1L1228.7 185.3L1232.1 183.5L1233.5 185.3L1231.0 188.2Z" fill="#eeeeee"/>
<path d="M1229.2 195.6L1232.5 188.2L1236.2 186.1L1238.6 188.5L1236.6 192.2Z" fill="#ebebeb"/>
<path d="M1268.0 145.0L1284.0 157.0L1262.0 161.0Z" fill="#e1e1e1"/>
<path d="M1282.0 126.0L1292.0 124.0L1291.0 133.0L1284.0 133.0Z" fill="#cdcdcd"/>
<ellipse cx="1311.4" cy="145.0" rx="7.0" ry="2.7" transform="rotate(162 1311.4 145.0)" fill="#b1b1b1"/>
<ellipse cx="1314.7" cy="162.4" rx="6.8" ry="2.6" transform="rotate(131 1314.7 162.4)" fill="#b3b3b3"/>
<ellipse cx="1310.7" cy="165.2" rx="3.0" ry="2.4" transform="rotate(86 1310.7 165.2)" fill="#c4c4c4"/>
<ellipse cx="1308.3" cy="142.1" rx="3.3" ry="2.0" transform="rotate(159 1308.3 142.1)" fill="#989898"/>
<ellipse cx="1319.7" cy="154.8" rx="6.2" ry="2.8" transform="rotate(20 1319.7 154.8)" fill="#bfbfbf"/>
<ellipse cx="1291.9" cy="155.6" rx="4.4" ry="2.7" transform="rotate(94 1291.9 155.6)" fill="#adadad"/>
<ellipse cx="1299.2" cy="136.1" rx="3.7" ry="2.6" transform="rotate(37 1299.2 136.1)" fill="#acacac"/>
<ellipse cx="1314.3" cy="143.2" rx="8.1" ry="2.9" transform="rotate(32 1314.3 143.2)" fill="#a3a3a3"/>
<ellipse cx="1288.9" cy="141.7" rx="4.1" ry="2.4" transform="rotate(36 1288.9 141.7)" fill="#a0a0a0"/>
<ellipse cx="1293.2" cy="159.0" rx="3.6" ry="2.8" transform="rotate(97 1293.2 159.0)" fill="#969696"/>
<ellipse cx="1300.0" cy="146.4" rx="4.8" ry="1.9" transform="rotate(5 1300.0 146.4)" fill="#b0b0b0"/>
<ellipse cx="1295.2" cy="160.7" rx="3.2" ry="2.4" transform="rotate(156 1295.2 160.7)" fill="#9d9d9d"/>
<ellipse cx="1294.4" cy="140.5" rx="2.2" ry="1.4" transform="rotate(15 1294.4 140.5)" fill="#9a9a9a"/>
<ellipse cx="1303.3" cy="161.9" rx="5.9" ry="2.7" transform="rotate(89 1303.3 161.9)" fill="#989898"/>
<ellipse cx="1303.2" cy="156.0" rx="3.2" ry="1.3" transform="rotate(1 1303.2 156.0)" fill="#c4c4c4"/>
<ellipse cx="1305.7" cy="137.1" rx="2.4" ry="1.3" transform="rotate(56 1305.7 137.1)" fill="#bfbfbf"/>
<ellipse cx="1314.4" cy="163.0" rx="6.4" ry="2.9" transform="rotate(120 1314.4 163.0)" fill="#c3c3c3"/>
<ellipse cx="1314.7" cy="158.4" rx="2.9" ry="2.1" transform="rotate(143 1314.7 158.4)" fill="#a7a7a7"/>
<ellipse cx="1312.7" cy="143.2" rx="6.9" ry="3.0" transform="rotate(56 1312.7 143.2)" fill="#a3a3a3"/>
<ellipse cx="1299.5" cy="154.3" rx="3.7" ry="2.8" transform="rotate(157 1299.5 154.3)" fill="#bcbcbc"/>
<ellipse cx="1303.4" cy="143.2" rx="4.5" ry="2.8" transform="rotate(17 1303.4 143.2)" fill="#adadad"/>
<ellipse cx="1287.8" cy="144.5" rx="2.0" ry="1.4" transform="rotate(102 1287.8 144.5)" fill="#ababab"/>
<ellipse cx="1287.1" cy="161.8" rx="3.8" ry="1.4" transform="rotate(162 1287.1 161.8)" fill="#9f9f9f"/>
<ellipse cx="1317.7" cy="144.3" rx="3.3" ry="2.5" transform="rotate(134 1317.7 144.3)" fill="#9f9f9f"/>
<ellipse cx="1291.3" cy="164.9" rx="5.1" ry="1.8" transform="rotate(140 1291.3 164.9)" fill="#bebebe"/>
<ellipse cx="1310.7" cy="136.8" rx="8.6" ry="2.9" transform="rotate(29 1310.7 136.8)" fill="#a0a0a0"/>
<ellipse cx="1263.0" cy="183.0" rx="3.8" ry="2.3" transform="rotate(39 1263.0 183.0)" fill="#fafafa"/>
<ellipse cx="1255.9" cy="195.7" rx="5.3" ry="2.4" transform="rotate(129 1255.9 195.7)" fill="#f0f0f0"/>
<ellipse cx="1251.1" cy="183.0" rx="5.8" ry="2.9" transform="rotate(98 1251.1 183.0)" fill="#e9e9e9"/>
<ellipse cx="1279.8" cy="197.7" rx="8.9" ry="3.1" transform="rotate(61 1279.8 197.7)" fill="#fcfcfc"/>
<ellipse cx="1248.7" cy="187.0" rx="4.7" ry="2.6" transform="rotate(157 1248.7 187.0)" fill="#dedede"/>
<ellipse cx="1255.0" cy="167.3" rx="7.0" ry="3.0" transform="rotate(36 1255.0 167.3)" fill="#f0f0f0"/>
<ellipse cx="1271.4" cy="173.2" rx="5.3" ry="2.8" transform="rotate(40 1271.4 173.2)" fill="#e2e2e2"/>
<ellipse cx="1258.4" cy="178.3" rx="3.4" ry="1.9" transform="rotate(124 1258.4 178.3)" fill="#e4e4e4"/>
<ellipse cx="1259.5" cy="177.7" rx="4.6" ry="3.1" transform="rotate(55 1259.5 177.7)" fill="#e0e0e0"/>
<ellipse cx="1266.1" cy="187.2" rx="4.4" ry="2.9" transform="rotate(129 1266.1 187.2)" fill="#e1e1e1"/>
<ellipse cx="1264.9" cy="195.0" rx="3.7" ry="2.5" transform="rotate(111 1264.9 195.0)" fill="#e6e6e6"/>
<ellipse cx="1248.6" cy="170.6" rx="6.1" ry="2.1" transform="rotate(32 1248.6 170.6)" fill="#ececec"/>
<ellipse cx="1260.5" cy="189.0" rx="3.6" ry="1.4" transform="rotate(16 1260.5 189.0)" fill="#c4c4c4"/>
<ellipse cx="1264.3" cy="199.6" rx="6.3" ry="2.1" transform="rotate(131 1264.3 199.6)" fill="#e5e5e5"/>
<ellipse cx="1277.4" cy="194.2" rx="5.2" ry="2.9" transform="rotate(69 1277.4 194.2)" fill="#ececec"/>
<ellipse cx="1257.7" cy="170.3" rx="3.0" ry="1.6" transform="rotate(57 1257.7 170.3)" fill="#efefef"/>
<ellipse cx="1277.6" cy="189.1" rx="2.8" ry="1.5" transform="rotate(3 1277.6 189.1)" fill="#c7c7c7"/>
<ellipse cx="1281.8" cy="192.0" rx="9.4" ry="3.2" transform="rotate(135 1281.8 192.0)" fill="#c4c4c4"/>
<ellipse cx="1274.8" cy="187.9" rx="2.9" ry="1.8" transform="rotate(4 1274.8 187.9)" fill="#d8d8d8"/>
<ellipse cx="1252.8" cy="174.7" rx="4.5" ry="2.7" transform="rotate(51 1252.8 174.7)" fill="#f6f6f6"/>
<ellipse cx="1276.0" cy="179.4" rx="5.6" ry="2.2" transform="rotate(156 1276.0 179.4)" fill="#fdfdfd"/>
<ellipse cx="1276.7" cy="179.1" rx="2.7" ry="1.4" transform="rotate(159 1276.7 179.1)" fill="#f4f4f4"/>
<ellipse cx="1276.6" cy="190.3" rx="6.9" ry="2.8" transform="rotate(48 1276.6 190.3)" fill="#f5f5f5"/>
<ellipse cx="1256.8" cy="187.4" rx="6.5" ry="2.3" transform="rotate(130 1256.8 187.4)" fill="#cecece"/>
<ellipse cx="1262.4" cy="195.2" rx="4.4" ry="2.5" transform="rotate(180 1262.4 195.2)" fill="#f5f5f5"/>
<ellipse cx="1263.8" cy="182.3" rx="4.5" ry="2.0" transform="rotate(42 1263.8 182.3)" fill="#ededed"/>
<ellipse cx="1269.7" cy="185.4" rx="3.4" ry="2.3" transform="rotate(117 1269.7 185.4)" fill="#dddddd"/>
<ellipse cx="1269.1" cy="180.9" rx="7.1" ry="3.0" transform="rotate(119 1269.1 180.9)" fill="#dcdcdc"/>
<ellipse cx="1257.3" cy="168.0" rx="5.2" ry="2.6" transform="rotate(13 1257.3 168.0)" fill="#c5c5c5"/>
<ellipse cx="1256.4" cy="174.6" rx="3.7" ry="2.0" transform="rotate(82 1256.4 174.6)" fill="#dddddd"/>
<ellipse cx="1280.1" cy="168.2" rx="3.1" ry="1.8" transform="rotate(88 1280.1 168.2)" fill="#c3c3c3"/>
<ellipse cx="1263.3" cy="202.0" rx="6.0" ry="2.1" transform="rotate(114 1263.3 202.0)" fill="#ebebeb"/>
<ellipse cx="1296.1" cy="193.3" rx="7.3" ry="2.7" transform="rotate(7 1296.1 193.3)" fill="#dddddd"/>
<ellipse cx="1320.4" cy="181.2" rx="3.8" ry="2.8" transform="rotate(169 1320.4 181.2)" fill="#f5f5f5"/>
<ellipse cx="1329.7" cy="172.7" rx="4.4" ry="2.2" transform="rotate(33 1329.7 172.7)" fill="#d8d8d8"/>
<ellipse cx="1287.5" cy="183.0" rx="1.7" ry="1.4" transform="rotate(53 1287.5 183.0)" fill="#dbdbdb"/>
<ellipse cx="1298.2" cy="185.3" rx="2.6" ry="1.3" transform="rotate(52 1298.2 185.3)" fill="#dadada"/>
<ellipse cx="1298.5" cy="189.1" rx="3.9" ry="1.3" transform="rotate(175 1298.5 189.1)" fill="#e8e8e8"/>
<ellipse cx="1300.7" cy="182.5" rx="3.7" ry="1.7" transform="rotate(48 1300.7 182.5)" fill="#cacaca"/>
<ellipse cx="1303.9" cy="199.9" rx="4.9" ry="1.7" transform="rotate(139 1303.9 199.9)" fill="#dadada"/>
<ellipse cx="1310.8" cy="195.9" rx="4.9" ry="2.7" transform="rotate(161 1310.8 195.9)" fill="#cfcfcf"/>
<ellipse cx="1334.3" cy="172.3" rx="3.5" ry="1.9" transform="rotate(141 1334.3 172.3)" fill="#dedede"/>
<ellipse cx="1289.2" cy="177.7" rx="2.0" ry="1.6" transform="rotate(23 1289.2 177.7)" fill="#dfdfdf"/>
<ellipse cx="1303.8" cy="178.3" rx="6.7" ry="2.8" transform="rotate(137 1303.8 178.3)" fill="#dedede"/>
<ellipse cx="1337.9" cy="169.6" rx="2.0" ry="1.7" transform="rotate(50 1337.9 169.6)" fill="#e3e3e3"/>
<ellipse cx="1314.1" cy="191.2" rx="4.3" ry="1.7" transform="rotate(7 1314.1 191.2)" fill="#e1e1e1"/>
<ellipse cx="1337.8" cy="194.2" rx="4.2" ry="1.5" transform="rotate(3 1337.8 194.2)" fill="#f8f8f8"/>
<ellipse cx="1311.8" cy="186.7" rx="5.2" ry="2.8" transform="rotate(113 1311.8 186.7)" fill="#dcdcdc"/>
<ellipse cx="1288.9" cy="169.9" rx="4.8" ry="2.7" transform="rotate(101 1288.9 169.9)" fill="#f8f8f8"/>
<ellipse cx="1326.2" cy="173.0" rx="3.5" ry="1.9" transform="rotate(177 1326.2 173.0)" fill="#e5e5e5"/>
<ellipse cx="1300.7" cy="198.2" rx="4.8" ry="2.1" transform="rotate(49 1300.7 198.2)" fill="#e8e8e8"/>
<ellipse cx="1295.2" cy="193.1" rx="5.4" ry="2.2" transform="rotate(135 1295.2 193.1)" fill="#e2e2e2"/>
<ellipse cx="1333.2" cy="196.9" rx="2.7" ry="1.5" transform="rotate(178 1333.2 196.9)" fill="#e3e3e3"/>
<ellipse cx="1315.5" cy="179.4" rx="4.5" ry="2.4" transform="rotate(132 1315.5 179.4)" fill="#fdfdfd"/>
<ellipse cx="1290.5" cy="177.0" rx="2.7" ry="2.1" transform="rotate(147 1290.5 177.0)" fill="#e0e0e0"/>
<ellipse cx="1315.2" cy="188.9" rx="3.3" ry="1.6" transform="rotate(79 1315.2 188.9)" fill="#ededed"/>
<ellipse cx="1304.0" cy="182.6" rx="2.2" ry="1.3" transform="rotate(21 1304.0 182.6)" fill="#f6f6f6"/>
<ellipse cx="1327.2" cy="195.1" rx="3.4" ry="1.3" transform="rotate(28 1327.2 195.1)" fill="#fefefe"/>
<ellipse cx="1309.8" cy="189.6" rx="2.9" ry="2.3" transform="rotate(52 1309.8 189.6)" fill="#fdfdfd"/>
<ellipse cx="1322.1" cy="174.6" rx="3.7" ry="2.8" transform="rotate(23 1322.1 174.6)" fill="#e8e8e8"/>
<ellipse cx="1336.9" cy="177.4" rx="4.7" ry="2.1" transform="rotate(63 1336.9 177.4)" fill="#dbdbdb"/>
<ellipse cx="1321.4" cy="168.7" rx="2.6" ry="1.5" transform="rotate(24 1321.4 168.7)" fill="#d5d5d5"/>
<ellipse cx="1326.9" cy="193.9" rx="7.3" ry="2.7" transform="rotate(61 1326.9 193.9)" fill="#ebebeb"/>
<ellipse cx="1303.9" cy="176.2" rx="6.0" ry="2.3" transform="rotate(58 1303.9 176.2)" fill="#d4d4d4"/>
<ellipse cx="1289.9" cy="168.8" rx="4.7" ry="2.1" transform="rotate(34 1289.9 168.8)" fill="#d3d3d3"/>
<ellipse cx="1315.5" cy="188.6" rx="3.5" ry="1.5" transform="rotate(146 1315.5 188.6)" fill="#dfdfdf"/>
<ellipse cx="1293.4" cy="177.9" rx="3.5" ry="1.4" transform="rotate(138 1293.4 177.9)" fill="#ededed"/>
<ellipse cx="1307.0" cy="185.5" rx="3.7" ry="2.5" transform="rotate(70 1307.0 185.5)" fill="#f5f5f5"/>
<ellipse cx="1295.1" cy="173.7" rx="2.8" ry="1.5" transform="rotate(166 1295.1 173.7)" fill="#f3f3f3"/>
<ellipse cx="1288.6" cy="188.5" rx="4.8" ry="2.3" transform="rotate(83 1288.6 188.5)" fill="#d6d6d6"/>
<ellipse cx="1307.5" cy="179.3" rx="5.8" ry="2.0" transform="rotate(89 1307.5 179.3)" fill="#d7d7d7"/>
<ellipse cx="1285.3" cy="180.6" rx="5.8" ry="2.3" transform="rotate(21 1285.3 180.6)" fill="#d1d1d1"/>
<ellipse cx="1312.1" cy="199.1" rx="3.4" ry="2.3" transform="rotate(91 1312.1 199.1)" fill="#d9d9d9"/>
<ellipse cx="1298.7" cy="175.7" rx="3.1" ry="1.7" transform="rotate(119 1298.7 175.7)" fill="#efefef"/>
<ellipse cx="1292.2" cy="177.5" rx="2.9" ry="2.2" transform="rotate(152 1292.2 177.5)" fill="#e6e6e6"/>
<ellipse cx="1322.3" cy="173.7" rx="5.3" ry="2.0" transform="rotate(27 1322.3 173.7)" fill="#cecece"/>
<ellipse cx="1286.9" cy="174.4" rx="6.4" ry="2.5" transform="rotate(19 1286.9 174.4)" fill="#e7e7e7"/>
<ellipse cx="1327.3" cy="193.8" rx="3.8" ry="1.3" transform="rotate(3 1327.3 193.8)" fill="#dddddd"/>
<ellipse cx="1317.8" cy="195.2" rx="4.1" ry="2.7" transform="rotate(139 1317.8 195.2)" fill="#f3f3f3"/>
<ellipse cx="1286.8" cy="173.5" rx="7.2" ry="2.6" transform="rotate(46 1286.8 173.5)" fill="#f1f1f1"/>
<ellipse cx="1286.4" cy="197.6" rx="4.5" ry="2.2" transform="rotate(85 1286.4 197.6)" fill="#e7e7e7"/>
<ellipse cx="1311.9" cy="185.2" rx="4.8" ry="2.3" transform="rotate(159 1311.9 185.2)" fill="#f3f3f3"/>
<ellipse cx="1304.0" cy="172.8" rx="4.1" ry="1.5" transform="rotate(112 1304.0 172.8)" fill="#e4e4e4"/>
<ellipse cx="1327.6" cy="196.8" rx="2.1" ry="1.8" transform="rotate(148 1327.6 196.8)" fill="#f1f1f1"/>
<ellipse cx="1299.7" cy="183.0" rx="5.6" ry="2.0" transform="rotate(43 1299.7 183.0)" fill="#ededed"/>
<ellipse cx="1285.8" cy="191.8" rx="1.9" ry="1.4" transform="rotate(168 1285.8 191.8)" fill="#e1e1e1"/>
<ellipse cx="1316.2" cy="190.3" rx="8.0" ry="2.9" transform="rotate(84 1316.2 190.3)" fill="#d6d6d6"/>
<ellipse cx="1330.6" cy="185.2" rx="3.8" ry="1.3" transform="rotate(98 1330.6 185.2)" fill="#cccccc"/>
<ellipse cx="1331.5" cy="177.4" rx="2.3" ry="1.4" transform="rotate(174 1331.5 177.4)" fill="#e0e0e0"/>
<ellipse cx="1315.1" cy="173.4" rx="6.2" ry="2.9" transform="rotate(57 1315.1 173.4)" fill="#e7e7e7"/>
<ellipse cx="1287.2" cy="192.2" rx="2.9" ry="1.4" transform="rotate(20 1287.2 192.2)" fill="#e3e3e3"/>
<ellipse cx="1305.6" cy="176.7" rx="2.9" ry="1.5" transform="rotate(160 1305.6 176.7)" fill="#e2e2e2"/>
<path d="M1332.9 192.6L1329.1 187.9L1328.4 184.7L1330.2 183.9L1332.0 186.6Z" fill="#fcfcfc"/>
<path d="M1280.0 181.3L1275.7 175.9L1275.2 172.3L1277.4 171.4L1279.5 174.4Z" fill="#f1f1f1"/>
<path d="M1253.7 196.7L1254.4 192.5L1255.9 190.9L1257.4 191.7L1256.9 193.9Z" fill="#dfdfdf"/>
<path d="M1267.7 178.8L1264.0 173.6L1263.5 170.3L1265.4 169.6L1267.2 172.5Z" fill="#ececec"/>
<path d="M1310.6 198.6L1312.9 192.6L1315.4 190.3L1317.1 191.6L1315.7 194.6Z" fill="#d9d9d9"/>
<path d="M1277.2 179.7L1279.7 173.8L1282.1 171.4L1283.5 172.3L1282.0 175.4Z" fill="#e4e4e4"/>
<path d="M1288.6 191.8L1289.9 186.8L1292.1 185.2L1294.0 186.6L1293.1 189.1Z" fill="#e7e7e7"/>
<path d="M1330.9 189.3L1330.2 183.3L1331.6 180.5L1333.9 181.0L1334.1 184.2Z" fill="#f5f5f5"/>
<path d="M1288.6 188.2L1286.2 182.1L1286.6 178.7L1288.8 178.5L1289.9 181.8Z" fill="#e5e5e5"/>
<path d="M1298.6 188.3L1294.9 185.1L1293.9 182.7L1295.1 181.8L1297.0 183.7Z" fill="#d9d9d9"/>
<path d="M1271.4 177.1L1265.9 172.2L1264.2 168.7L1265.8 167.5L1268.6 170.3Z" fill="#fbfbfb"/>
<path d="M1313.7 203.4L1311.4 196.3L1312.1 192.5L1314.6 192.4L1315.5 196.2Z" fill="#dadada"/>
<path d="M1258.1 202.4L1252.6 199.2L1251.3 196.1L1253.3 194.4L1256.1 196.4Z" fill="#fefefe"/>
<path d="M1300.4 184.5L1298.1 178.7L1298.1 175.3L1299.7 175.1L1300.7 178.2Z" fill="#f7f7f7"/>
<path d="M1253.4 186.6L1253.9 179.4L1256.0 176.2L1258.4 177.2L1257.9 180.9Z" fill="#f9f9f9"/>
<path d="M1295.3 186.6L1291.8 182.1L1291.3 179.2L1292.9 178.5L1294.5 181.0Z" fill="#e5e5e5"/>
<path d="M1267.0 186.0L1268.0 203.0" stroke="#efefef" stroke-width="3.2" stroke-linecap="round"/>
<ellipse cx="1262.2" cy="141.5" rx="3.4" ry="1.5" transform="rotate(43 1262.2 141.5)" fill="#9f9f9f"/>
<ellipse cx="1268.2" cy="160.5" rx="6.2" ry="2.4" transform="rotate(80 1268.2 160.5)" fill="#ababab"/>
<ellipse cx="1270.6" cy="140.3" rx="5.5" ry="2.5" transform="rotate(79 1270.6 140.3)" fill="#b8b8b8"/>
<ellipse cx="1257.5" cy="150.4" rx="8.2" ry="2.9" transform="rotate(77 1257.5 150.4)" fill="#a1a1a1"/>
<ellipse cx="1270.1" cy="148.1" rx="5.2" ry="1.9" transform="rotate(70 1270.1 148.1)" fill="#bcbcbc"/>
<ellipse cx="1254.7" cy="164.7" rx="3.2" ry="1.5" transform="rotate(52 1254.7 164.7)" fill="#969696"/>
<ellipse cx="1257.8" cy="162.5" rx="8.2" ry="3.4" transform="rotate(80 1257.8 162.5)" fill="#b1b1b1"/>
<path d="M1182.0 271.0L1191.0 269.5L1204.5 281.5L1190.0 284.0Z" fill="#e8e8e8"/>
<path d="M1217.0 281.0L1223.0 277.5L1228.5 286.0L1223.0 293.5L1218.0 289.0Z" fill="#f5f5f5"/>
<path d="M1186.0 304.0L1198.0 296.0L1206.5 303.0L1204.0 320.0L1194.0 326.0L1188.0 315.0Z" fill="#e4e4e4"/>
<ellipse cx="1197.7" cy="303.9" rx="3.9" ry="2.9" transform="rotate(50 1197.7 303.9)" fill="#ebebeb"/>
<ellipse cx="1191.6" cy="320.0" rx="3.1" ry="3.1" transform="rotate(77 1191.6 320.0)" fill="#f1f1f1"/>
<ellipse cx="1190.9" cy="305.0" rx="3.7" ry="3.1" transform="rotate(68 1190.9 305.0)" fill="#f0f0f0"/>
<ellipse cx="1203.3" cy="320.6" rx="5.4" ry="3.5" transform="rotate(55 1203.3 320.6)" fill="#ededed"/>
<ellipse cx="1217.0" cy="298.7" rx="2.5" ry="1.7" transform="rotate(114 1217.0 298.7)" fill="#eeeeee"/>
<ellipse cx="1220.0" cy="301.1" rx="2.2" ry="1.7" transform="rotate(130 1220.0 301.1)" fill="#e2e2e2"/>
<ellipse cx="1224.8" cy="303.1" rx="2.0" ry="1.7" transform="rotate(123 1224.8 303.1)" fill="#e3e3e3"/>
<ellipse cx="1227.5" cy="306.3" rx="3.0" ry="1.7" transform="rotate(133 1227.5 306.3)" fill="#e5e5e5"/>
<ellipse cx="1231.4" cy="308.0" rx="3.2" ry="1.9" transform="rotate(122 1231.4 308.0)" fill="#dddddd"/>
<ellipse cx="1234.2" cy="310.1" rx="3.3" ry="2.1" transform="rotate(119 1234.2 310.1)" fill="#d9d9d9"/>
<ellipse cx="1238.0" cy="313.4" rx="2.2" ry="1.8" transform="rotate(109 1238.0 313.4)" fill="#eaeaea"/>
<ellipse cx="1241.9" cy="315.8" rx="3.5" ry="1.9" transform="rotate(132 1241.9 315.8)" fill="#f1f1f1"/>
<ellipse cx="1245.7" cy="317.7" rx="2.0" ry="1.6" transform="rotate(132 1245.7 317.7)" fill="#ebebeb"/>
<ellipse cx="1249.6" cy="319.7" rx="3.3" ry="1.7" transform="rotate(112 1249.6 319.7)" fill="#e2e2e2"/>
<ellipse cx="1253.6" cy="321.8" rx="3.2" ry="2.0" transform="rotate(117 1253.6 321.8)" fill="#f4f4f4"/>
<ellipse cx="1257.0" cy="324.1" rx="2.8" ry="1.8" transform="rotate(121 1257.0 324.1)" fill="#dfdfdf"/>
<ellipse cx="1260.3" cy="326.9" rx="2.4" ry="1.8" transform="rotate(118 1260.3 326.9)" fill="#e2e2e2"/>
<ellipse cx="1222.8" cy="307.9" rx="1.7" ry="1.5" transform="rotate(121 1222.8 307.9)" fill="#d0d0d0"/>
<ellipse cx="1225.8" cy="310.7" rx="2.0" ry="1.6" transform="rotate(114 1225.8 310.7)" fill="#d7d7d7"/>
<ellipse cx="1230.5" cy="313.7" rx="1.7" ry="1.6" transform="rotate(126 1230.5 313.7)" fill="#cacaca"/>
<ellipse cx="1234.3" cy="317.0" rx="1.6" ry="1.5" transform="rotate(119 1234.3 317.0)" fill="#cfcfcf"/>
<ellipse cx="1239.9" cy="318.9" rx="1.8" ry="1.2" transform="rotate(121 1239.9 318.9)" fill="#c1c1c1"/>
<ellipse cx="1242.6" cy="322.8" rx="2.7" ry="1.3" transform="rotate(128 1242.6 322.8)" fill="#eeeeee"/>
<ellipse cx="1247.1" cy="324.9" rx="2.2" ry="1.2" transform="rotate(128 1247.1 324.9)" fill="#e7e7e7"/>
<ellipse cx="1252.5" cy="327.9" rx="2.3" ry="1.5" transform="rotate(124 1252.5 327.9)" fill="#c7c7c7"/>
<path d="M1212.0 324.0L1221.0 322.0L1218.0 336.0Z" fill="#c8c8c8"/>
<path d="M1247.0 221.0L1254.0 227.0" stroke="#f1f1f1" stroke-width="2.6" stroke-linecap="round"/>
<path d="M1262.0 221.0L1273.0 225.0" stroke="#e1e1e1" stroke-width="2.6" stroke-linecap="round"/>
<ellipse cx="1263.9" cy="237.7" rx="2.6" ry="1.9" transform="rotate(-20 1263.9 237.7)" fill="#dadada"/>
<ellipse cx="1262.9" cy="244.8" rx="3.6" ry="1.8" transform="rotate(-19 1262.9 244.8)" fill="#d5d5d5"/>
<ellipse cx="1254.8" cy="240.1" rx="2.6" ry="1.5" transform="rotate(6 1254.8 240.1)" fill="#e3e3e3"/>
<ellipse cx="1257.5" cy="241.0" rx="3.2" ry="1.5" transform="rotate(1 1257.5 241.0)" fill="#f4f4f4"/>
<path d="M1248.2 258.4L1265.7 252.8L1275.5 252.1L1276.0 255.0L1266.6 257.7Z" fill="#e4e4e4"/>
<path d="M1250.5 274.4L1268.6 266.4L1279.0 264.9L1280.0 268.4L1270.1 272.2Z" fill="#f0f0f0"/>
<path d="M1266.5 277.0L1267.5 290.0" stroke="#f2f2f2" stroke-width="3.0" stroke-linecap="round"/>
<ellipse cx="1278.2" cy="299.7" rx="3.2" ry="2.2" transform="rotate(35 1278.2 299.7)" fill="#ececec"/>
<ellipse cx="1284.9" cy="301.8" rx="3.4" ry="2.5" transform="rotate(41 1284.9 301.8)" fill="#efefef"/>
<ellipse cx="1283.9" cy="292.5" rx="3.1" ry="2.3" transform="rotate(60 1283.9 292.5)" fill="#f1f1f1"/>
<ellipse cx="1283.4" cy="308.0" rx="3.3" ry="2.4" transform="rotate(77 1283.4 308.0)" fill="#fefefe"/>
<ellipse cx="1277.2" cy="308.5" rx="3.6" ry="2.6" transform="rotate(77 1277.2 308.5)" fill="#f4f4f4"/>
<path d="M1304.0 255.0L1309.0 252.0L1314.0 262.0L1322.0 263.5L1315.0 271.5L1308.0 268.0Z" fill="#f5f5f5"/>
<ellipse cx="1323.9" cy="223.2" rx="2.7" ry="2.2" transform="rotate(158 1323.9 223.2)" fill="#ececec"/>
<ellipse cx="1325.5" cy="227.1" rx="2.7" ry="2.2" transform="rotate(175 1325.5 227.1)" fill="#efefef"/>
<ellipse cx="1326.4" cy="230.5" rx="2.5" ry="1.8" transform="rotate(153 1326.4 230.5)" fill="#ebebeb"/>
<ellipse cx="1327.3" cy="235.3" rx="3.1" ry="2.0" transform="rotate(177 1327.3 235.3)" fill="#e4e4e4"/>
<ellipse cx="1327.7" cy="238.3" rx="2.6" ry="2.2" transform="rotate(165 1327.7 238.3)" fill="#fbfbfb"/>
<ellipse cx="1328.9" cy="242.3" rx="3.1" ry="1.6" transform="rotate(166 1328.9 242.3)" fill="#e8e8e8"/>
<ellipse cx="1329.8" cy="246.0" rx="3.2" ry="2.1" transform="rotate(152 1329.8 246.0)" fill="#eeeeee"/>
<ellipse cx="1330.5" cy="249.7" rx="2.4" ry="2.2" transform="rotate(157 1330.5 249.7)" fill="#e5e5e5"/>
<ellipse cx="1331.3" cy="254.3" rx="2.9" ry="1.7" transform="rotate(158 1331.3 254.3)" fill="#e6e6e6"/>
<ellipse cx="1333.0" cy="256.6" rx="2.5" ry="2.1" transform="rotate(154 1333.0 256.6)" fill="#f0f0f0"/>
<ellipse cx="1333.9" cy="261.0" rx="3.2" ry="2.0" transform="rotate(178 1333.9 261.0)" fill="#fdfdfd"/>
<ellipse cx="1334.4" cy="265.2" rx="3.3" ry="2.2" transform="rotate(164 1334.4 265.2)" fill="#f2f2f2"/>
<ellipse cx="1335.0" cy="269.1" rx="3.5" ry="1.8" transform="rotate(168 1335.0 269.1)" fill="#fefefe"/>
<ellipse cx="1336.4" cy="271.8" rx="2.9" ry="1.7" transform="rotate(160 1336.4 271.8)" fill="#f8f8f8"/>
<ellipse cx="1336.4" cy="276.2" rx="3.4" ry="2.3" transform="rotate(164 1336.4 276.2)" fill="#dddddd"/>
<ellipse cx="1337.7" cy="279.9" rx="3.4" ry="2.2" transform="rotate(154 1337.7 279.9)" fill="#ebebeb"/>
<ellipse cx="1339.0" cy="283.1" rx="3.4" ry="2.3" transform="rotate(161 1339.0 283.1)" fill="#f1f1f1"/>
<ellipse cx="1338.8" cy="287.4" rx="3.7" ry="2.1" transform="rotate(161 1338.8 287.4)" fill="#fcfcfc"/>
<ellipse cx="1338.6" cy="291.4" rx="2.0" ry="1.7" transform="rotate(163 1338.6 291.4)" fill="#d6d6d6"/>
<ellipse cx="1340.8" cy="296.3" rx="2.7" ry="1.5" transform="rotate(171 1340.8 296.3)" fill="#dbdbdb"/>
<ellipse cx="1341.0" cy="300.7" rx="3.3" ry="1.6" transform="rotate(163 1341.0 300.7)" fill="#d9d9d9"/>
<ellipse cx="1342.4" cy="305.4" rx="2.4" ry="1.7" transform="rotate(180 1342.4 305.4)" fill="#e9e9e9"/>
<ellipse cx="1342.6" cy="309.4" rx="2.8" ry="1.4" transform="rotate(161 1342.6 309.4)" fill="#f3f3f3"/>
<ellipse cx="1344.0" cy="314.2" rx="2.9" ry="1.7" transform="rotate(166 1344.0 314.2)" fill="#e9e9e9"/>
<ellipse cx="1344.5" cy="319.3" rx="2.3" ry="1.7" transform="rotate(169 1344.5 319.3)" fill="#efefef"/>
<ellipse cx="1345.4" cy="323.9" rx="2.9" ry="1.8" transform="rotate(159 1345.4 323.9)" fill="#d4d4d4"/>
<ellipse cx="1344.8" cy="327.9" rx="2.7" ry="1.5" transform="rotate(182 1344.8 327.9)" fill="#ededed"/>
<path d="M1313.0 268.0L1327.0 350.0" stroke="#efefef" stroke-width="2.2" stroke-linecap="round"/>
<path d="M1313.4 270.2L1306.4 275.3" stroke="#e8e8e8" stroke-width="1.9" stroke-linecap="round"/>
<path d="M1314.1 274.7L1306.8 280.0" stroke="#ededed" stroke-width="2.1" stroke-linecap="round"/>
<path d="M1314.9 279.1L1306.5 285.2" stroke="#fefefe" stroke-width="1.9" stroke-linecap="round"/>
<path d="M1315.7 283.5L1308.3 288.9" stroke="#e0e0e0" stroke-width="2.2" stroke-linecap="round"/>
<path d="M1316.4 288.0L1309.8 292.8" stroke="#ededed" stroke-width="2.0" stroke-linecap="round"/>
<path d="M1317.2 292.4L1307.5 299.5" stroke="#d4d4d4" stroke-width="2.0" stroke-linecap="round"/>
<path d="M1317.9 296.8L1308.9 303.4" stroke="#e6e6e6" stroke-width="1.6" stroke-linecap="round"/>
<path d="M1318.7 301.3L1311.4 306.6" stroke="#f2f2f2" stroke-width="2.3" stroke-linecap="round"/>
<path d="M1319.4 305.7L1309.6 312.9" stroke="#f4f4f4" stroke-width="1.9" stroke-linecap="round"/>
<path d="M1320.2 310.1L1311.2 316.7" stroke="#f0f0f0" stroke-width="1.8" stroke-linecap="round"/>
<path d="M1321.0 314.6L1313.0 320.4" stroke="#f5f5f5" stroke-width="2.6" stroke-linecap="round"/>
<path d="M1321.7 319.0L1314.4 324.3" stroke="#e3e3e3" stroke-width="2.3" stroke-linecap="round"/>
<path d="M1322.5 323.4L1314.9 329.0" stroke="#eaeaea" stroke-width="2.1" stroke-linecap="round"/>
<path d="M1323.2 327.9L1315.7 333.4" stroke="#f3f3f3" stroke-width="1.8" stroke-linecap="round"/>
<path d="M1324.0 332.3L1315.4 338.6" stroke="#e0e0e0" stroke-width="2.5" stroke-linecap="round"/>
<path d="M1324.7 336.8L1314.4 344.3" stroke="#cdcdcd" stroke-width="2.0" stroke-linecap="round"/>
<path d="M1325.5 341.2L1315.0 348.9" stroke="#e8e8e8" stroke-width="1.9" stroke-linecap="round"/>
<path d="M1326.3 345.6L1315.5 353.5" stroke="#d6d6d6" stroke-width="2.2" stroke-linecap="round"/>
<ellipse cx="1305.4" cy="322.1" rx="4.6" ry="1.7" transform="rotate(86 1305.4 322.1)" fill="#f8f8f8"/>
<ellipse cx="1311.4" cy="319.4" rx="3.6" ry="1.7" transform="rotate(81 1311.4 319.4)" fill="#f0f0f0"/>
<ellipse cx="1305.0" cy="311.5" rx="3.1" ry="2.0" transform="rotate(63 1305.0 311.5)" fill="#d2d2d2"/>
<ellipse cx="1311.5" cy="331.2" rx="6.0" ry="2.6" transform="rotate(78 1311.5 331.2)" fill="#e1e1e1"/>
<ellipse cx="1317.4" cy="325.7" rx="2.9" ry="1.8" transform="rotate(55 1317.4 325.7)" fill="#e9e9e9"/>
<ellipse cx="1299.8" cy="326.3" rx="4.5" ry="2.3" transform="rotate(71 1299.8 326.3)" fill="#e0e0e0"/>
<ellipse cx="1299.3" cy="299.6" rx="4.7" ry="1.6" transform="rotate(71 1299.3 299.6)" fill="#dbdbdb"/>
<ellipse cx="1311.6" cy="324.8" rx="2.5" ry="2.1" transform="rotate(66 1311.6 324.8)" fill="#dcdcdc"/>
<ellipse cx="1299.4" cy="295.3" rx="3.5" ry="2.4" transform="rotate(52 1299.4 295.3)" fill="#f2f2f2"/>
<ellipse cx="1314.2" cy="343.1" rx="5.4" ry="1.9" transform="rotate(79 1314.2 343.1)" fill="#eaeaea"/>
<path d="M1134.0 331.0L1158.0 352.0" stroke="#d5d5d5" stroke-width="1.9" stroke-linecap="round"/>
<path d="M1135.4 332.2L1126.0 338.1" stroke="#c9c9c9" stroke-width="2.2" stroke-linecap="round"/>
<path d="M1135.4 332.2L1140.0 322.1" stroke="#b8b8b8" stroke-width="2.2" stroke-linecap="round"/>
<path d="M1138.1 334.6L1129.0 340.3" stroke="#e3e3e3" stroke-width="1.6" stroke-linecap="round"/>
<path d="M1138.1 334.6L1142.5 324.8" stroke="#e3e3e3" stroke-width="2.2" stroke-linecap="round"/>
<path d="M1140.8 336.9L1132.4 342.2" stroke="#cdcdcd" stroke-width="1.9" stroke-linecap="round"/>
<path d="M1140.8 336.9L1144.9 327.9" stroke="#b8b8b8" stroke-width="1.9" stroke-linecap="round"/>
<path d="M1143.5 339.3L1134.7 344.8" stroke="#bebebe" stroke-width="1.7" stroke-linecap="round"/>
<path d="M1143.5 339.3L1147.8 329.8" stroke="#d6d6d6" stroke-width="1.8" stroke-linecap="round"/>
<path d="M1146.2 341.7L1138.9 346.2" stroke="#d1d1d1" stroke-width="1.8" stroke-linecap="round"/>
<path d="M1146.2 341.7L1149.7 333.9" stroke="#bdbdbd" stroke-width="1.8" stroke-linecap="round"/>
<path d="M1148.9 344.0L1140.6 349.2" stroke="#d6d6d6" stroke-width="2.0" stroke-linecap="round"/>
<path d="M1148.9 344.0L1153.0 335.1" stroke="#e5e5e5" stroke-width="1.5" stroke-linecap="round"/>
<path d="M1151.6 346.4L1145.4 350.3" stroke="#bcbcbc" stroke-width="2.0" stroke-linecap="round"/>
<path d="M1151.6 346.4L1154.6 339.7" stroke="#dadada" stroke-width="1.8" stroke-linecap="round"/>
<path d="M1154.3 348.8L1147.3 353.2" stroke="#b9b9b9" stroke-width="2.5" stroke-linecap="round"/>
<path d="M1154.3 348.8L1157.8 341.2" stroke="#e1e1e1" stroke-width="2.4" stroke-linecap="round"/>
<path d="M1157.0 351.2L1150.7 355.1" stroke="#c1c1c1" stroke-width="2.4" stroke-linecap="round"/>
<path d="M1157.0 351.2L1160.1 344.4" stroke="#c4c4c4" stroke-width="2.2" stroke-linecap="round"/>
<path d="M1152.0 327.0L1178.0 349.0" stroke="#cecece" stroke-width="1.9" stroke-linecap="round"/>
<path d="M1153.4 328.2L1144.7 333.8" stroke="#c4c4c4" stroke-width="2.3" stroke-linecap="round"/>
<path d="M1153.4 328.2L1157.5 318.7" stroke="#c2c2c2" stroke-width="1.6" stroke-linecap="round"/>
<path d="M1156.1 330.5L1147.3 336.3" stroke="#cacaca" stroke-width="1.8" stroke-linecap="round"/>
<path d="M1156.1 330.5L1160.3 320.8" stroke="#c8c8c8" stroke-width="2.1" stroke-linecap="round"/>
<path d="M1158.9 332.8L1149.7 338.8" stroke="#cccccc" stroke-width="1.9" stroke-linecap="round"/>
<path d="M1158.9 332.8L1163.2 322.8" stroke="#b6b6b6" stroke-width="2.3" stroke-linecap="round"/>
<path d="M1161.6 335.1L1154.3 339.9" stroke="#d4d4d4" stroke-width="2.2" stroke-linecap="round"/>
<path d="M1161.6 335.1L1165.1 327.1" stroke="#c9c9c9" stroke-width="1.9" stroke-linecap="round"/>
<path d="M1164.4 337.5L1155.6 343.2" stroke="#c1c1c1" stroke-width="2.4" stroke-linecap="round"/>
<path d="M1164.4 337.5L1168.6 327.8" stroke="#b4b4b4" stroke-width="1.9" stroke-linecap="round"/>
<path d="M1167.1 339.8L1161.0 343.8" stroke="#c6c6c6" stroke-width="1.9" stroke-linecap="round"/>
<path d="M1167.1 339.8L1170.0 333.1" stroke="#bbbbbb" stroke-width="2.2" stroke-linecap="round"/>
<path d="M1169.9 342.1L1162.8 346.7" stroke="#bababa" stroke-width="2.3" stroke-linecap="round"/>
<path d="M1169.9 342.1L1173.2 334.4" stroke="#c5c5c5" stroke-width="1.7" stroke-linecap="round"/>
<path d="M1172.6 344.4L1165.4 349.1" stroke="#bebebe" stroke-width="2.4" stroke-linecap="round"/>
<path d="M1172.6 344.4L1176.1 336.5" stroke="#d2d2d2" stroke-width="2.0" stroke-linecap="round"/>
<path d="M1175.4 346.8L1167.6 351.8" stroke="#e1e1e1" stroke-width="2.4" stroke-linecap="round"/>
<path d="M1175.4 346.8L1179.0 338.3" stroke="#c4c4c4" stroke-width="1.7" stroke-linecap="round"/>
<ellipse cx="1361.8" cy="191.9" rx="1.7" ry="1.3" transform="rotate(72 1361.8 191.9)" fill="#f6f6f6"/>
<ellipse cx="1346.7" cy="195.7" rx="4.3" ry="1.5" transform="rotate(127 1346.7 195.7)" fill="#c5c5c5"/>
<ellipse cx="1373.2" cy="182.2" rx="3.3" ry="1.4" transform="rotate(25 1373.2 182.2)" fill="#e5e5e5"/>
<ellipse cx="1383.1" cy="201.4" rx="4.1" ry="1.8" transform="rotate(17 1383.1 201.4)" fill="#d3d3d3"/>
<ellipse cx="1351.9" cy="210.0" rx="3.3" ry="2.4" transform="rotate(113 1351.9 210.0)" fill="#c5c5c5"/>
<ellipse cx="1371.0" cy="164.6" rx="3.6" ry="1.3" transform="rotate(123 1371.0 164.6)" fill="#d8d8d8"/>
<ellipse cx="1369.6" cy="166.5" rx="3.4" ry="2.5" transform="rotate(143 1369.6 166.5)" fill="#dddddd"/>
<ellipse cx="1381.8" cy="199.5" rx="5.2" ry="2.0" transform="rotate(102 1381.8 199.5)" fill="#dbdbdb"/>
<ellipse cx="1371.5" cy="203.5" rx="4.8" ry="1.6" transform="rotate(57 1371.5 203.5)" fill="#c9c9c9"/>
<ellipse cx="1348.1" cy="175.8" rx="3.5" ry="1.3" transform="rotate(132 1348.1 175.8)" fill="#e3e3e3"/>
<ellipse cx="1349.4" cy="199.8" rx="6.1" ry="2.2" transform="rotate(87 1349.4 199.8)" fill="#d6d6d6"/>
<ellipse cx="1346.2" cy="168.1" rx="2.5" ry="1.7" transform="rotate(45 1346.2 168.1)" fill="#dddddd"/>
<ellipse cx="1349.0" cy="199.3" rx="2.2" ry="1.4" transform="rotate(126 1349.0 199.3)" fill="#bfbfbf"/>
<ellipse cx="1364.3" cy="198.9" rx="2.6" ry="1.8" transform="rotate(97 1364.3 198.9)" fill="#d8d8d8"/>
<ellipse cx="1343.0" cy="177.7" rx="3.6" ry="2.7" transform="rotate(107 1343.0 177.7)" fill="#f4f4f4"/>
<ellipse cx="1340.6" cy="191.3" rx="2.2" ry="1.7" transform="rotate(177 1340.6 191.3)" fill="#c6c6c6"/>
<ellipse cx="1386.0" cy="195.2" rx="6.2" ry="2.3" transform="rotate(22 1386.0 195.2)" fill="#c5c5c5"/>
<ellipse cx="1383.3" cy="169.6" rx="3.0" ry="1.6" transform="rotate(141 1383.3 169.6)" fill="#f2f2f2"/>
<ellipse cx="1354.1" cy="189.6" rx="2.9" ry="2.3" transform="rotate(96 1354.1 189.6)" fill="#ececec"/>
<ellipse cx="1366.9" cy="198.3" rx="1.9" ry="1.5" transform="rotate(10 1366.9 198.3)" fill="#cecece"/>
<ellipse cx="1344.8" cy="160.7" rx="7.0" ry="2.5" transform="rotate(88 1344.8 160.7)" fill="#c4c4c4"/>
<ellipse cx="1371.8" cy="207.6" rx="6.8" ry="2.6" transform="rotate(1 1371.8 207.6)" fill="#cfcfcf"/>
<ellipse cx="1349.3" cy="203.7" rx="7.7" ry="2.9" transform="rotate(34 1349.3 203.7)" fill="#cfcfcf"/>
<ellipse cx="1374.0" cy="169.1" rx="1.6" ry="1.3" transform="rotate(122 1374.0 169.1)" fill="#f4f4f4"/>
<ellipse cx="1372.6" cy="199.7" rx="3.1" ry="1.9" transform="rotate(43 1372.6 199.7)" fill="#f1f1f1"/>
<ellipse cx="1344.3" cy="194.0" rx="3.2" ry="1.4" transform="rotate(58 1344.3 194.0)" fill="#c8c8c8"/>
<ellipse cx="1364.2" cy="180.3" rx="4.1" ry="1.4" transform="rotate(9 1364.2 180.3)" fill="#c8c8c8"/>
<ellipse cx="1356.1" cy="190.6" rx="3.9" ry="3.0" transform="rotate(11 1356.1 190.6)" fill="#dfdfdf"/>
<ellipse cx="1389.1" cy="165.7" rx="5.6" ry="2.5" transform="rotate(84 1389.1 165.7)" fill="#dadada"/>
<ellipse cx="1365.0" cy="200.9" rx="5.4" ry="1.8" transform="rotate(89 1365.0 200.9)" fill="#f9f9f9"/>
<ellipse cx="1346.4" cy="162.7" rx="3.1" ry="2.4" transform="rotate(28 1346.4 162.7)" fill="#c0c0c0"/>
<ellipse cx="1353.1" cy="170.9" rx="5.6" ry="2.9" transform="rotate(135 1353.1 170.9)" fill="#f9f9f9"/>
<ellipse cx="1363.9" cy="183.0" rx="3.9" ry="1.4" transform="rotate(11 1363.9 183.0)" fill="#dfdfdf"/>
<ellipse cx="1350.2" cy="173.2" rx="3.3" ry="2.3" transform="rotate(156 1350.2 173.2)" fill="#c1c1c1"/>
<ellipse cx="1387.7" cy="202.7" rx="3.7" ry="1.6" transform="rotate(85 1387.7 202.7)" fill="#d3d3d3"/>
<ellipse cx="1357.9" cy="193.9" rx="3.8" ry="1.8" transform="rotate(50 1357.9 193.9)" fill="#cbcbcb"/>
<ellipse cx="1376.0" cy="211.8" rx="8.1" ry="2.9" transform="rotate(121 1376.0 211.8)" fill="#dadada"/>
<ellipse cx="1362.0" cy="171.5" rx="4.7" ry="2.0" transform="rotate(140 1362.0 171.5)" fill="#f9f9f9"/>
<ellipse cx="1360.4" cy="192.3" rx="6.1" ry="2.5" transform="rotate(16 1360.4 192.3)" fill="#f2f2f2"/>
<ellipse cx="1383.0" cy="188.5" rx="2.4" ry="1.8" transform="rotate(130 1383.0 188.5)" fill="#e8e8e8"/>
<ellipse cx="1345.2" cy="201.2" rx="3.2" ry="1.8" transform="rotate(21 1345.2 201.2)" fill="#efefef"/>
<ellipse cx="1380.0" cy="164.4" rx="4.9" ry="2.2" transform="rotate(93 1380.0 164.4)" fill="#cacaca"/>
<ellipse cx="1375.3" cy="175.9" rx="4.5" ry="1.5" transform="rotate(89 1375.3 175.9)" fill="#eeeeee"/>
<ellipse cx="1389.3" cy="199.5" rx="5.0" ry="2.6" transform="rotate(179 1389.3 199.5)" fill="#d2d2d2"/>
<ellipse cx="1358.0" cy="192.5" rx="8.5" ry="2.9" transform="rotate(102 1358.0 192.5)" fill="#d1d1d1"/>
<ellipse cx="1364.1" cy="188.0" rx="2.5" ry="1.5" transform="rotate(69 1364.1 188.0)" fill="#f5f5f5"/>
<ellipse cx="1383.3" cy="224.7" rx="5.3" ry="2.6" transform="rotate(87 1383.3 224.7)" fill="#cdcdcd"/>
<ellipse cx="1364.6" cy="209.5" rx="5.5" ry="2.2" transform="rotate(117 1364.6 209.5)" fill="#bebebe"/>
<ellipse cx="1374.0" cy="205.9" rx="3.9" ry="1.6" transform="rotate(152 1374.0 205.9)" fill="#c9c9c9"/>
<ellipse cx="1385.9" cy="231.1" rx="2.6" ry="1.9" transform="rotate(110 1385.9 231.1)" fill="#e4e4e4"/>
<ellipse cx="1364.6" cy="228.9" rx="4.9" ry="1.9" transform="rotate(53 1364.6 228.9)" fill="#b5b5b5"/>
<ellipse cx="1359.6" cy="211.2" rx="4.6" ry="2.6" transform="rotate(85 1359.6 211.2)" fill="#ededed"/>
<ellipse cx="1387.0" cy="220.3" rx="3.7" ry="2.3" transform="rotate(117 1387.0 220.3)" fill="#d7d7d7"/>
<ellipse cx="1373.7" cy="209.7" rx="8.2" ry="2.9" transform="rotate(84 1373.7 209.7)" fill="#bdbdbd"/>
<ellipse cx="1359.2" cy="208.4" rx="5.2" ry="3.2" transform="rotate(97 1359.2 208.4)" fill="#c3c3c3"/>
<ellipse cx="1362.4" cy="233.3" rx="3.7" ry="2.2" transform="rotate(166 1362.4 233.3)" fill="#dbdbdb"/>
<ellipse cx="1356.3" cy="207.4" rx="6.3" ry="3.1" transform="rotate(4 1356.3 207.4)" fill="#bbbbbb"/>
<ellipse cx="1378.0" cy="211.1" rx="2.6" ry="1.6" transform="rotate(89 1378.0 211.1)" fill="#cccccc"/>
<ellipse cx="1353.6" cy="205.4" rx="3.9" ry="2.8" transform="rotate(126 1353.6 205.4)" fill="#e2e2e2"/>
<ellipse cx="1356.4" cy="222.6" rx="5.6" ry="2.4" transform="rotate(53 1356.4 222.6)" fill="#c6c6c6"/>
<ellipse cx="1357.5" cy="216.6" rx="8.5" ry="3.2" transform="rotate(161 1357.5 216.6)" fill="#cacaca"/>
<ellipse cx="1362.5" cy="210.5" rx="3.5" ry="1.7" transform="rotate(109 1362.5 210.5)" fill="#b5b5b5"/>
<ellipse cx="1343.0" cy="234.4" rx="3.5" ry="2.0" transform="rotate(162 1343.0 234.4)" fill="#e1e1e1"/>
<ellipse cx="1343.9" cy="239.9" rx="2.0" ry="2.1" transform="rotate(177 1343.9 239.9)" fill="#e2e2e2"/>
<ellipse cx="1345.4" cy="243.5" rx="3.1" ry="1.6" transform="rotate(183 1345.4 243.5)" fill="#e7e7e7"/>
<ellipse cx="1346.5" cy="249.7" rx="3.4" ry="2.1" transform="rotate(173 1346.5 249.7)" fill="#e5e5e5"/>
<ellipse cx="1347.2" cy="254.3" rx="2.5" ry="2.1" transform="rotate(173 1347.2 254.3)" fill="#fcfcfc"/>
<ellipse cx="1347.5" cy="258.7" rx="2.8" ry="1.7" transform="rotate(171 1347.5 258.7)" fill="#eaeaea"/>
<ellipse cx="1348.8" cy="263.2" rx="2.8" ry="1.8" transform="rotate(162 1348.8 263.2)" fill="#d8d8d8"/>
<ellipse cx="1349.9" cy="268.7" rx="2.2" ry="2.1" transform="rotate(158 1349.9 268.7)" fill="#dbdbdb"/>
<ellipse cx="1350.2" cy="273.8" rx="2.3" ry="1.6" transform="rotate(175 1350.2 273.8)" fill="#e0e0e0"/>
<ellipse cx="1351.6" cy="278.3" rx="2.4" ry="2.1" transform="rotate(167 1351.6 278.3)" fill="#f0f0f0"/>
<ellipse cx="1353.0" cy="283.1" rx="3.2" ry="1.7" transform="rotate(159 1353.0 283.1)" fill="#e9e9e9"/>
<ellipse cx="1354.2" cy="287.8" rx="2.7" ry="2.1" transform="rotate(179 1354.2 287.8)" fill="#fdfdfd"/>
<ellipse cx="1354.9" cy="293.0" rx="2.6" ry="1.7" transform="rotate(180 1354.9 293.0)" fill="#f1f1f1"/>
<ellipse cx="1356.3" cy="297.2" rx="3.4" ry="1.7" transform="rotate(176 1356.3 297.2)" fill="#e8e8e8"/>
<path d="M1356.1 284.8L1363.9 320.7" stroke="#f4f4f4" stroke-width="2.0" stroke-linecap="round"/>
<path d="M1354.6 302.5L1358.1 325.5" stroke="#f5f5f5" stroke-width="3.1" stroke-linecap="round"/>
<path d="M1356.1 315.2L1362.7 350.9" stroke="#fcfcfc" stroke-width="2.5" stroke-linecap="round"/>
<path d="M1350.5 282.0L1357.4 310.0" stroke="#d7d7d7" stroke-width="1.9" stroke-linecap="round"/>
<path d="M1349.8 236.7L1359.0 275.7" stroke="#e4e4e4" stroke-width="2.1" stroke-linecap="round"/>
<path d="M1355.8 238.2L1360.4 267.9" stroke="#dadada" stroke-width="1.9" stroke-linecap="round"/>
<path d="M1348.2 293.8L1353.2 320.0" stroke="#f3f3f3" stroke-width="1.9" stroke-linecap="round"/>
<path d="M1346.3 273.3L1352.7 304.7" stroke="#f6f6f6" stroke-width="3.2" stroke-linecap="round"/>
<path d="M1358.0 256.6L1364.0 290.3" stroke="#e7e7e7" stroke-width="2.9" stroke-linecap="round"/>
<path d="M1359.3 276.5L1363.9 306.2" stroke="#dfdfdf" stroke-width="2.8" stroke-linecap="round"/>
<path d="M1368.3 290.4L1373.5 318.9" stroke="#f8f8f8" stroke-width="3.0" stroke-linecap="round"/>
<path d="M1372.0 262.1L1376.6 283.9" stroke="#dedede" stroke-width="3.0" stroke-linecap="round"/>
<path d="M1374.9 299.6L1382.0 335.0" stroke="#e6e6e6" stroke-width="2.3" stroke-linecap="round"/>
<path d="M1381.4 271.4L1384.7 290.9" stroke="#e8e8e8" stroke-width="2.1" stroke-linecap="round"/>
<path d="M1381.0 316.4L1384.5 338.0" stroke="#dedede" stroke-width="2.6" stroke-linecap="round"/>
<path d="M1366.4 304.6L1370.8 331.9" stroke="#e1e1e1" stroke-width="2.6" stroke-linecap="round"/>
<ellipse cx="1377.4" cy="238.4" rx="4.6" ry="2.3" transform="rotate(162 1377.4 238.4)" fill="#e2e2e2"/>
<ellipse cx="1379.7" cy="244.8" rx="4.1" ry="1.8" transform="rotate(181 1379.7 244.8)" fill="#f5f5f5"/>
<ellipse cx="1380.3" cy="251.3" rx="3.3" ry="1.9" transform="rotate(173 1380.3 251.3)" fill="#e9e9e9"/>
<ellipse cx="1381.3" cy="257.8" rx="3.4" ry="2.4" transform="rotate(172 1381.3 257.8)" fill="#dcdcdc"/>
<ellipse cx="1382.6" cy="263.3" rx="4.1" ry="2.1" transform="rotate(159 1382.6 263.3)" fill="#fefefe"/>
<ellipse cx="1384.5" cy="269.9" rx="4.3" ry="2.3" transform="rotate(156 1384.5 269.9)" fill="#ebebeb"/>
<ellipse cx="1385.6" cy="276.0" rx="3.8" ry="2.3" transform="rotate(172 1385.6 276.0)" fill="#fafafa"/>
<ellipse cx="1386.3" cy="282.3" rx="4.9" ry="1.8" transform="rotate(156 1386.3 282.3)" fill="#d9d9d9"/>
<ellipse cx="1387.7" cy="288.2" rx="3.8" ry="2.1" transform="rotate(161 1387.7 288.2)" fill="#eeeeee"/>
<ellipse cx="1389.7" cy="294.6" rx="3.3" ry="2.5" transform="rotate(166 1389.7 294.6)" fill="#dadada"/>
<ellipse cx="1389.9" cy="340.5" rx="4.2" ry="1.7" transform="rotate(67 1389.9 340.5)" fill="#a4a4a4"/>
<ellipse cx="1386.9" cy="338.8" rx="7.7" ry="2.6" transform="rotate(90 1386.9 338.8)" fill="#cecece"/>
<ellipse cx="1358.5" cy="331.2" rx="5.3" ry="2.7" transform="rotate(61 1358.5 331.2)" fill="#b3b3b3"/>
<ellipse cx="1366.7" cy="343.5" rx="2.3" ry="1.6" transform="rotate(68 1366.7 343.5)" fill="#a9a9a9"/>
<ellipse cx="1384.9" cy="343.3" rx="5.0" ry="2.3" transform="rotate(66 1384.9 343.3)" fill="#c9c9c9"/>
<ellipse cx="1389.0" cy="339.7" rx="2.9" ry="1.6" transform="rotate(67 1389.0 339.7)" fill="#b2b2b2"/>
<ellipse cx="1391.1" cy="331.4" rx="7.6" ry="2.6" transform="rotate(53 1391.1 331.4)" fill="#a0a0a0"/>
<ellipse cx="1381.5" cy="197.2" rx="2.2" ry="1.9" transform="rotate(181 1381.5 197.2)" fill="#acacac"/>
<ellipse cx="1383.4" cy="205.3" rx="3.1" ry="1.9" transform="rotate(179 1383.4 205.3)" fill="#adadad"/>
<ellipse cx="1382.4" cy="214.7" rx="2.1" ry="1.8" transform="rotate(169 1382.4 214.7)" fill="#bfbfbf"/>
<ellipse cx="1382.9" cy="224.9" rx="2.3" ry="1.4" transform="rotate(184 1382.9 224.9)" fill="#cccccc"/>
<ellipse cx="1384.0" cy="234.0" rx="2.2" ry="1.8" transform="rotate(187 1384.0 234.0)" fill="#c1c1c1"/>
<ellipse cx="1384.8" cy="242.5" rx="2.6" ry="1.7" transform="rotate(164 1384.8 242.5)" fill="#c7c7c7"/>
<ellipse cx="1385.3" cy="252.9" rx="3.2" ry="1.6" transform="rotate(180 1385.3 252.9)" fill="#afafaf"/>
<ellipse cx="1386.0" cy="260.7" rx="2.7" ry="1.6" transform="rotate(187 1386.0 260.7)" fill="#d8d8d8"/>
<ellipse cx="1386.4" cy="271.4" rx="3.1" ry="1.4" transform="rotate(165 1386.4 271.4)" fill="#c2c2c2"/>
<ellipse cx="1386.4" cy="280.4" rx="2.9" ry="1.8" transform="rotate(177 1386.4 280.4)" fill="#b4b4b4"/>
<ellipse cx="1386.1" cy="289.5" rx="2.2" ry="1.4" transform="rotate(182 1386.1 289.5)" fill="#c7c7c7"/>
<ellipse cx="1387.3" cy="298.3" rx="2.1" ry="1.9" transform="rotate(177 1387.3 298.3)" fill="#c6c6c6"/>
<ellipse cx="1387.7" cy="306.8" rx="2.0" ry="1.6" transform="rotate(191 1387.7 306.8)" fill="#acacac"/>
<ellipse cx="1388.6" cy="317.0" rx="2.4" ry="1.8" transform="rotate(189 1388.6 317.0)" fill="#d1d1d1"/>
<ellipse cx="1387.6" cy="326.7" rx="2.3" ry="1.9" transform="rotate(177 1387.6 326.7)" fill="#d5d5d5"/>
<ellipse cx="1388.1" cy="335.4" rx="3.0" ry="1.5" transform="rotate(187 1388.1 335.4)" fill="#b1b1b1"/>
<path d="M1419.0 196.0L1428.0 167.0L1436.0 170.0L1452.0 176.0L1451.0 194.0L1436.0 186.0Z" fill="#969696"/>
<path d="M1425.7 190.8L1421.2 179.8" stroke="#e4e4e4" stroke-width="1.9" stroke-linecap="round"/>
<path d="M1429.2 188.5L1425.2 178.8" stroke="#c6c6c6" stroke-width="2.7" stroke-linecap="round"/>
<path d="M1432.7 186.2L1428.4 175.8" stroke="#c9c9c9" stroke-width="2.6" stroke-linecap="round"/>
<path d="M1436.2 183.8L1432.2 174.0" stroke="#dbdbdb" stroke-width="2.7" stroke-linecap="round"/>
<path d="M1439.7 181.5L1435.1 170.3" stroke="#e4e4e4" stroke-width="2.0" stroke-linecap="round"/>
<path d="M1443.2 179.2L1438.8 168.5" stroke="#c4c4c4" stroke-width="2.7" stroke-linecap="round"/>
<path d="M1446.7 176.9L1441.5 164.2" stroke="#dadada" stroke-width="2.0" stroke-linecap="round"/>
<path d="M1450.2 174.5L1445.9 164.2" stroke="#c7c7c7" stroke-width="2.2" stroke-linecap="round"/>
<path d="M1402.5 218.0L1408.0 204.0L1420.0 203.0L1414.0 219.0Z" fill="#d7d7d7"/>
<path d="M1430.2 212.6L1454.2 206.2L1467.6 205.6L1468.1 209.1L1455.1 212.2Z" fill="#d6d6d6"/>
<path d="M1417.1 224.2L1449.2 218.2L1466.8 218.5L1467.1 223.0L1449.7 225.7Z" fill="#f7f7f7"/>
<path d="M1417.5 236.1L1438.9 233.1L1450.4 233.6L1450.5 236.3L1439.0 237.6Z" fill="#dddddd"/>
<ellipse cx="1452.7" cy="233.4" rx="2.1" ry="1.8" transform="rotate(71 1452.7 233.4)" fill="#cccccc"/>
<ellipse cx="1456.2" cy="231.5" rx="1.9" ry="1.6" transform="rotate(79 1456.2 231.5)" fill="#bebebe"/>
<ellipse cx="1459.7" cy="231.4" rx="2.2" ry="1.6" transform="rotate(80 1459.7 231.4)" fill="#e4e4e4"/>
<ellipse cx="1464.2" cy="231.6" rx="2.3" ry="1.8" transform="rotate(76 1464.2 231.6)" fill="#d0d0d0"/>
<ellipse cx="1466.7" cy="230.6" rx="3.0" ry="1.8" transform="rotate(76 1466.7 230.6)" fill="#d2d2d2"/>
<ellipse cx="1470.5" cy="230.2" rx="2.7" ry="1.4" transform="rotate(97 1470.5 230.2)" fill="#eaeaea"/>
<ellipse cx="1475.0" cy="229.2" rx="1.8" ry="1.8" transform="rotate(96 1475.0 229.2)" fill="#dadada"/>
<ellipse cx="1477.8" cy="228.9" rx="2.8" ry="1.4" transform="rotate(82 1477.8 228.9)" fill="#c5c5c5"/>
<path d="M1468.0 203.0L1482.0 230.0" stroke="#acacac" stroke-width="1.6" stroke-linecap="round"/>
<path d="M1468.8 204.6L1462.0 205.8" stroke="#bdbdbd" stroke-width="2.0" stroke-linecap="round"/>
<path d="M1468.8 204.6L1473.8 199.7" stroke="#adadad" stroke-width="1.6" stroke-linecap="round"/>
<path d="M1470.4 207.7L1465.6 208.6" stroke="#b0b0b0" stroke-width="1.4" stroke-linecap="round"/>
<path d="M1470.4 207.7L1473.9 204.2" stroke="#b0b0b0" stroke-width="1.3" stroke-linecap="round"/>
<path d="M1472.0 210.8L1467.0 211.7" stroke="#c1c1c1" stroke-width="1.8" stroke-linecap="round"/>
<path d="M1472.0 210.8L1475.7 207.2" stroke="#ababab" stroke-width="2.0" stroke-linecap="round"/>
<path d="M1473.6 213.9L1467.0 215.1" stroke="#c8c8c8" stroke-width="1.9" stroke-linecap="round"/>
<path d="M1473.6 213.9L1478.5 209.2" stroke="#c5c5c5" stroke-width="1.8" stroke-linecap="round"/>
<path d="M1475.2 217.0L1468.6 218.2" stroke="#c3c3c3" stroke-width="1.3" stroke-linecap="round"/>
<path d="M1475.2 217.0L1480.1 212.2" stroke="#cacaca" stroke-width="2.0" stroke-linecap="round"/>
<path d="M1476.9 220.1L1470.7 221.3" stroke="#b4b4b4" stroke-width="1.6" stroke-linecap="round"/>
<path d="M1476.9 220.1L1481.4 215.7" stroke="#b4b4b4" stroke-width="1.7" stroke-linecap="round"/>
<path d="M1478.5 223.2L1472.8 224.3" stroke="#c1c1c1" stroke-width="1.9" stroke-linecap="round"/>
<path d="M1478.5 223.2L1482.6 219.2" stroke="#c1c1c1" stroke-width="1.6" stroke-linecap="round"/>
<path d="M1480.1 226.3L1475.4 227.2" stroke="#b8b8b8" stroke-width="1.9" stroke-linecap="round"/>
<path d="M1480.1 226.3L1483.5 223.0" stroke="#cccccc" stroke-width="1.6" stroke-linecap="round"/>
<path d="M1481.7 229.4L1476.5 230.4" stroke="#cccccc" stroke-width="1.5" stroke-linecap="round"/>
<path d="M1481.7 229.4L1485.5 225.7" stroke="#afafaf" stroke-width="1.9" stroke-linecap="round"/>
<ellipse cx="1414.7" cy="232.9" rx="5.6" ry="3.2" transform="rotate(182 1414.7 232.9)" fill="#f0f0f0"/>
<ellipse cx="1413.0" cy="241.5" rx="4.9" ry="3.8" transform="rotate(183 1413.0 241.5)" fill="#e2e2e2"/>
<ellipse cx="1411.2" cy="250.0" rx="5.0" ry="3.8" transform="rotate(185 1411.2 250.0)" fill="#e6e6e6"/>
<ellipse cx="1410.4" cy="258.0" rx="5.4" ry="3.4" transform="rotate(188 1410.4 258.0)" fill="#ededed"/>
<path d="M1395.5 275.0L1407.8 272.0L1414.5 273.2L1414.5 276.8L1407.8 278.0Z" fill="#fafafa"/>
<ellipse cx="1465.0" cy="252.5" rx="2.0" ry="2.0" transform="rotate(0 1465.0 252.5)" fill="#b2b2b2"/>
<ellipse cx="1471.0" cy="305.0" rx="2.0" ry="2.0" transform="rotate(0 1471.0 305.0)" fill="#bcbcbc"/>
<ellipse cx="1424.0" cy="317.5" rx="2.0" ry="2.0" transform="rotate(0 1424.0 317.5)" fill="#adadad"/>
<ellipse cx="1449.0" cy="319.0" rx="2.0" ry="2.0" transform="rotate(0 1449.0 319.0)" fill="#dedede"/>
<ellipse cx="1470.0" cy="278.0" rx="2.0" ry="2.0" transform="rotate(0 1470.0 278.0)" fill="#bdbdbd"/>
<ellipse cx="1483.0" cy="278.0" rx="2.0" ry="2.0" transform="rotate(0 1483.0 278.0)" fill="#d7d7d7"/>
<ellipse cx="1496.0" cy="290.0" rx="3.5" ry="4.0" transform="rotate(0 1496.0 290.0)" fill="#c4c4c4"/>
<ellipse cx="1513.5" cy="285.0" rx="3.5" ry="4.0" transform="rotate(0 1513.5 285.0)" fill="#d6d6d6"/>
<path d="M1497.0 301.0L1497.0 310.0" stroke="#b8b8b8" stroke-width="3.5" stroke-linecap="round"/>
<path d="M1514.0 293.0L1521.0 332.0" stroke="#b4b4b4" stroke-width="1.5" stroke-linecap="round"/>
<path d="M1514.4 295.2L1509.7 294.7" stroke="#c9c9c9" stroke-width="1.6" stroke-linecap="round"/>
<path d="M1515.2 299.6L1509.4 299.0" stroke="#c2c2c2" stroke-width="1.8" stroke-linecap="round"/>
<path d="M1516.0 304.1L1510.2 303.4" stroke="#b4b4b4" stroke-width="1.5" stroke-linecap="round"/>
<path d="M1516.8 308.5L1512.8 308.0" stroke="#c8c8c8" stroke-width="1.6" stroke-linecap="round"/>
<path d="M1517.6 312.9L1513.5 312.5" stroke="#c3c3c3" stroke-width="1.6" stroke-linecap="round"/>
<path d="M1518.4 317.4L1513.6 316.8" stroke="#cecece" stroke-width="1.4" stroke-linecap="round"/>
<path d="M1519.2 321.8L1513.7 321.2" stroke="#b1b1b1" stroke-width="1.2" stroke-linecap="round"/>
<path d="M1520.0 326.2L1515.1 325.7" stroke="#c2c2c2" stroke-width="1.5" stroke-linecap="round"/>
<path d="M1520.8 330.6L1516.2 330.1" stroke="#aeaeae" stroke-width="1.4" stroke-linecap="round"/>
<ellipse cx="1529.4" cy="318.8" rx="3.9" ry="1.4" transform="rotate(81 1529.4 318.8)" fill="#747474"/>
<ellipse cx="1541.6" cy="337.5" rx="2.6" ry="1.2" transform="rotate(95 1541.6 337.5)" fill="#929292"/>
<ellipse cx="1543.0" cy="303.9" rx="1.6" ry="1.3" transform="rotate(96 1543.0 303.9)" fill="#767676"/>
<ellipse cx="1527.8" cy="338.3" rx="3.4" ry="1.3" transform="rotate(70 1527.8 338.3)" fill="#747474"/>
<ellipse cx="1532.3" cy="304.0" rx="5.3" ry="1.8" transform="rotate(76 1532.3 304.0)" fill="#7d7d7d"/>
<ellipse cx="1327.0" cy="110.0" rx="19.0" ry="5.5" transform="rotate(8 1327.0 110.0)" fill="#a1a1a1"/>
<ellipse cx="1385.9" cy="93.2" rx="2.8" ry="2.0" transform="rotate(20 1385.9 93.2)" fill="#979797"/>
<ellipse cx="1349.9" cy="111.6" rx="4.5" ry="2.3" transform="rotate(7 1349.9 111.6)" fill="#939393"/>
<ellipse cx="1338.9" cy="93.5" rx="7.9" ry="2.8" transform="rotate(19 1338.9 93.5)" fill="#7c7c7c"/>
<ellipse cx="1376.6" cy="96.3" rx="2.2" ry="1.6" transform="rotate(19 1376.6 96.3)" fill="#a2a2a2"/>
<ellipse cx="1394.1" cy="108.3" rx="3.3" ry="1.6" transform="rotate(31 1394.1 108.3)" fill="#969696"/>
<ellipse cx="1364.6" cy="97.9" rx="7.8" ry="2.9" transform="rotate(-4 1364.6 97.9)" fill="#a0a0a0"/>
<ellipse cx="1348.9" cy="93.3" rx="9.8" ry="3.4" transform="rotate(22 1348.9 93.3)" fill="#909090"/>
<ellipse cx="1353.5" cy="100.2" rx="2.0" ry="1.6" transform="rotate(30 1353.5 100.2)" fill="#a2a2a2"/>
<ellipse cx="1449.4" cy="130.8" rx="4.7" ry="1.9" transform="rotate(27 1449.4 130.8)" fill="#8d8d8d"/>
<ellipse cx="1411.7" cy="117.5" rx="4.8" ry="2.9" transform="rotate(45 1411.7 117.5)" fill="#929292"/>
<ellipse cx="1411.4" cy="134.4" rx="5.9" ry="3.2" transform="rotate(12 1411.4 134.4)" fill="#8f8f8f"/>
<ellipse cx="1433.4" cy="121.5" rx="6.2" ry="3.4" transform="rotate(35 1433.4 121.5)" fill="#6e6e6e"/>
<ellipse cx="1419.1" cy="130.5" rx="4.6" ry="2.8" transform="rotate(41 1419.1 130.5)" fill="#696969"/>
<ellipse cx="1462.9" cy="118.7" rx="8.8" ry="3.1" transform="rotate(30 1462.9 118.7)" fill="#7e7e7e"/>
<ellipse cx="1455.8" cy="107.5" rx="5.2" ry="3.4" transform="rotate(9 1455.8 107.5)" fill="#909090"/>
<ellipse cx="1439.0" cy="125.6" rx="7.6" ry="2.8" transform="rotate(35 1439.0 125.6)" fill="#898989"/>
<ellipse cx="1427.7" cy="129.4" rx="3.9" ry="2.9" transform="rotate(13 1427.7 129.4)" fill="#797979"/>
<ellipse cx="1470.6" cy="140.6" rx="3.6" ry="1.7" transform="rotate(39 1470.6 140.6)" fill="#5e5e5e"/>
<ellipse cx="1473.1" cy="168.7" rx="4.1" ry="2.0" transform="rotate(42 1473.1 168.7)" fill="#6e6e6e"/>
<ellipse cx="1471.5" cy="149.6" rx="5.2" ry="2.0" transform="rotate(32 1471.5 149.6)" fill="#6c6c6c"/>
<ellipse cx="1473.7" cy="151.5" rx="4.3" ry="2.0" transform="rotate(31 1473.7 151.5)" fill="#606060"/>
<ellipse cx="1472.3" cy="183.4" rx="3.9" ry="1.3" transform="rotate(65 1472.3 183.4)" fill="#6c6c6c"/>
<ellipse cx="1506.1" cy="152.4" rx="4.0" ry="2.0" transform="rotate(35 1506.1 152.4)" fill="#5f5f5f"/>
<path d="M1139.0 346.0L1114.0 390.0" stroke="#c4c4c4" stroke-width="2.4" stroke-linecap="round"/>
<path d="M1138.1 347.7L1131.5 340.8" stroke="#dbdbdb" stroke-width="2.0" stroke-linecap="round"/>
<path d="M1138.1 347.7L1147.3 349.8" stroke="#e8e8e8" stroke-width="2.0" stroke-linecap="round"/>
<path d="M1136.2 351.0L1127.5 341.8" stroke="#c3c3c3" stroke-width="2.4" stroke-linecap="round"/>
<path d="M1136.2 351.0L1148.5 353.8" stroke="#ededed" stroke-width="2.7" stroke-linecap="round"/>
<path d="M1134.3 354.3L1126.8 346.4" stroke="#dddddd" stroke-width="2.4" stroke-linecap="round"/>
<path d="M1134.3 354.3L1144.9 356.7" stroke="#ededed" stroke-width="2.5" stroke-linecap="round"/>
<path d="M1132.4 357.6L1126.9 351.8" stroke="#cecece" stroke-width="3.0" stroke-linecap="round"/>
<path d="M1132.4 357.6L1140.3 359.4" stroke="#cacaca" stroke-width="2.9" stroke-linecap="round"/>
<path d="M1130.6 360.9L1123.4 353.3" stroke="#d2d2d2" stroke-width="2.1" stroke-linecap="round"/>
<path d="M1130.6 360.9L1140.7 363.2" stroke="#cfcfcf" stroke-width="2.5" stroke-linecap="round"/>
<path d="M1128.7 364.2L1122.3 357.5" stroke="#e8e8e8" stroke-width="2.0" stroke-linecap="round"/>
<path d="M1128.7 364.2L1137.7 366.2" stroke="#dbdbdb" stroke-width="2.8" stroke-linecap="round"/>
<path d="M1126.8 367.5L1119.8 360.2" stroke="#dbdbdb" stroke-width="2.4" stroke-linecap="round"/>
<path d="M1126.8 367.5L1136.7 369.7" stroke="#dadada" stroke-width="3.0" stroke-linecap="round"/>
<path d="M1124.9 370.8L1119.9 365.5" stroke="#c3c3c3" stroke-width="2.1" stroke-linecap="round"/>
<path d="M1124.9 370.8L1132.0 372.4" stroke="#d1d1d1" stroke-width="2.9" stroke-linecap="round"/>
<path d="M1123.0 374.1L1117.1 367.8" stroke="#c3c3c3" stroke-width="2.4" stroke-linecap="round"/>
<path d="M1123.0 374.1L1131.5 376.0" stroke="#dddddd" stroke-width="2.3" stroke-linecap="round"/>
<path d="M1121.2 377.4L1114.2 370.1" stroke="#eaeaea" stroke-width="2.4" stroke-linecap="round"/>
<path d="M1121.2 377.4L1130.9 379.6" stroke="#cbcbcb" stroke-width="2.4" stroke-linecap="round"/>
<path d="M1119.3 380.7L1112.3 373.4" stroke="#e7e7e7" stroke-width="2.2" stroke-linecap="round"/>
<path d="M1119.3 380.7L1129.1 382.9" stroke="#e1e1e1" stroke-width="2.0" stroke-linecap="round"/>
<path d="M1117.4 384.0L1111.9 378.2" stroke="#c1c1c1" stroke-width="3.0" stroke-linecap="round"/>
<path d="M1117.4 384.0L1125.2 385.8" stroke="#dbdbdb" stroke-width="1.9" stroke-linecap="round"/>
<path d="M1115.5 387.3L1111.1 382.7" stroke="#c7c7c7" stroke-width="2.0" stroke-linecap="round"/>
<path d="M1115.5 387.3L1121.8 388.7" stroke="#c3c3c3" stroke-width="2.9" stroke-linecap="round"/>
<path d="M1127.6 382.5L1130.3 374.7L1133.8 372.0L1136.3 374.0L1134.5 378.0Z" fill="#d7d7d7"/>
<path d="M1118.6 398.2L1118.2 387.8L1120.4 382.8L1123.7 383.5L1123.5 389.0Z" fill="#e1e1e1"/>
<path d="M1134.4 395.3L1132.0 389.1L1133.9 386.4L1138.0 387.1L1138.8 390.4Z" fill="#c9c9c9"/>
<path d="M1129.0 385.5L1134.0 376.2L1138.2 372.5L1140.2 374.2L1137.3 379.0Z" fill="#bcbcbc"/>
<path d="M1136.4 384.1L1136.9 377.8L1139.8 376.4L1143.1 379.0L1142.5 382.2Z" fill="#dcdcdc"/>
<path d="M1123.9 394.6L1121.8 387.1L1123.9 383.6L1128.0 384.4L1128.6 388.4Z" fill="#cecece"/>
<path d="M1168.0 352.8L1180.9 335.4" stroke="#efefef" stroke-width="2.8" stroke-linecap="round"/>
<path d="M1168.9 348.9L1177.5 337.5" stroke="#c1c1c1" stroke-width="2.8" stroke-linecap="round"/>
<path d="M1148.6 365.6L1161.4 347.0" stroke="#ebebeb" stroke-width="2.1" stroke-linecap="round"/>
<path d="M1163.1 359.9L1171.8 345.8" stroke="#d9d9d9" stroke-width="2.9" stroke-linecap="round"/>
<path d="M1152.6 364.1L1163.4 346.0" stroke="#c6c6c6" stroke-width="3.4" stroke-linecap="round"/>
<path d="M1151.7 346.1L1160.2 334.9" stroke="#c1c1c1" stroke-width="3.1" stroke-linecap="round"/>
<path d="M1149.9 430.6L1148.6 418.9L1152.5 414.3L1158.4 416.5L1158.4 422.5Z" fill="#cbcbcb"/>
<path d="M1152.7 417.9L1151.5 407.3L1155.2 403.3L1160.6 405.3L1160.6 410.8Z" fill="#d5d5d5"/>
<path d="M1158.1 425.4L1154.9 411.1L1158.5 404.5L1165.2 405.7L1166.1 413.2Z" fill="#e4e4e4"/>
<path d="M1160.7 391.3L1158.1 383.4L1160.2 379.7L1164.6 380.3L1165.5 384.5Z" fill="#d8d8d8"/>
<path d="M1149.3 434.3L1150.5 422.5L1154.7 418.0L1159.2 420.3L1158.1 426.3Z" fill="#e9e9e9"/>
<path d="M1174.1 409.6L1170.3 397.3L1173.5 391.5L1180.2 392.6L1181.5 399.0Z" fill="#cacaca"/>
<path d="M1164.5 441.9L1161.5 430.8L1165.7 427.0L1173.1 429.6L1173.8 435.3Z" fill="#f4f4f4"/>
<path d="M1154.2 416.6L1157.2 404.8L1162.0 400.6L1166.0 403.3L1163.9 409.3Z" fill="#f1f1f1"/>
<path d="M1163.9 441.7L1160.1 429.8L1162.1 423.5L1167.4 423.8L1168.9 430.2Z" fill="#d3d3d3"/>
<path d="M1178.3 413.1L1178.3 399.6L1181.9 393.4L1186.6 394.9L1186.1 402.0Z" fill="#d7d7d7"/>
<path d="M1165.5 419.4L1160.3 407.1L1161.4 400.1L1166.2 399.7L1168.5 406.3Z" fill="#dfdfdf"/>
<path d="M1188.6 424.9L1182.4 412.9L1185.4 406.7L1193.5 407.1L1195.9 413.5Z" fill="#d6d6d6"/>
<path d="M1168.9 419.2L1168.3 406.4L1173.2 402.2L1180.0 405.6L1179.5 412.1Z" fill="#efefef"/>
<path d="M1178.2 417.0L1171.6 404.6L1172.5 397.2L1178.2 396.4L1181.1 403.2Z" fill="#c5c5c5"/>
<path d="M1164.0 406.2L1167.7 393.6L1173.2 389.4L1177.7 392.8L1175.2 399.3Z" fill="#f5f5f5"/>
<path d="M1175.3 409.6L1178.3 397.9L1183.2 393.9L1187.3 396.8L1185.2 402.8Z" fill="#c4c4c4"/>
<path d="M1151.2 401.5L1152.9 386.6L1159.1 381.9L1165.8 386.2L1164.1 393.7Z" fill="#e0e0e0"/>
<path d="M1189.6 437.6L1190.6 428.2L1194.9 426.1L1199.6 429.8L1198.5 434.4Z" fill="#cecece"/>
<path d="M1186.9 382.3L1185.3 373.8L1188.9 371.4L1194.5 374.3L1194.7 378.5Z" fill="#c8c8c8"/>
<path d="M1184.1 412.2L1181.7 404.5L1184.0 401.1L1188.5 402.0L1189.3 406.0Z" fill="#cacaca"/>
<path d="M1165.9 401.6L1158.8 391.2L1161.4 385.5L1169.5 385.3L1172.4 390.9Z" fill="#dfdfdf"/>
<path d="M1173.1 413.6L1172.5 400.3L1177.5 395.7L1184.2 399.0L1183.8 405.8Z" fill="#d7d7d7"/>
<path d="M1191.1 386.1L1185.4 375.4L1186.8 369.3L1192.5 368.8L1194.9 374.6Z" fill="#c6c6c6"/>
<path d="M1187.5 443.2L1183.2 430.4L1186.3 424.1L1193.1 424.9L1194.6 431.7Z" fill="#d7d7d7"/>
<path d="M1190.4 407.2L1189.5 392.0L1194.7 386.2L1201.9 389.1L1201.5 396.9Z" fill="#ededed"/>
<path d="M1161.2 404.1L1162.7 393.5L1166.7 389.7L1170.9 392.1L1169.6 397.5Z" fill="#d8d8d8"/>
<path d="M1182.6 394.5L1176.2 383.9L1177.9 377.7L1184.6 377.2L1187.3 383.0Z" fill="#ececec"/>
<path d="M1160.1 415.6L1152.4 409.7L1154.4 405.5L1162.3 404.3L1165.5 407.6Z" fill="#f5f5f5"/>
<path d="M1192.3 411.8L1184.1 407.3L1185.4 403.0L1192.7 400.6L1196.2 403.3Z" fill="#e4e4e4"/>
<path d="M1182.0 427.0L1179.9 414.3L1183.8 409.1L1190.3 411.0L1190.7 417.6Z" fill="#cfcfcf"/>
<path d="M1176.3 390.6L1173.9 381.1L1177.4 377.8L1183.5 380.0L1184.1 384.8Z" fill="#f4f4f4"/>
<path d="M1180.6 380.5L1178.9 371.2L1182.4 367.9L1188.0 370.2L1188.3 374.9Z" fill="#e5e5e5"/>
<path d="M1185.7 381.1L1183.1 370.0L1186.5 365.2L1192.5 366.8L1193.2 372.5Z" fill="#d3d3d3"/>
<path d="M1174.7 396.9L1173.8 387.0L1177.7 383.8L1183.4 386.7L1183.2 391.7Z" fill="#f8f8f8"/>
<path d="M1181.0 389.6L1180.9 380.3L1184.3 376.9L1188.7 379.0L1188.3 383.7Z" fill="#dbdbdb"/>
<path d="M1182.1 400.4L1186.1 385.5L1191.9 379.9L1196.6 382.8L1193.9 390.5Z" fill="#d1d1d1"/>
<path d="M1159.6 389.7L1163.8 379.9" stroke="#d6d6d6" stroke-width="2.0" stroke-linecap="round"/>
<path d="M1153.5 408.4L1162.3 391.5" stroke="#bcbcbc" stroke-width="2.4" stroke-linecap="round"/>
<path d="M1168.1 391.8L1173.4 379.3" stroke="#cacaca" stroke-width="2.3" stroke-linecap="round"/>
<path d="M1170.2 398.7L1176.2 386.3" stroke="#d4d4d4" stroke-width="2.5" stroke-linecap="round"/>
<path d="M1153.0 388.9L1157.9 377.9" stroke="#c5c5c5" stroke-width="2.1" stroke-linecap="round"/>
<path d="M1140.0 417.6L1143.0 430.0" stroke="#cdcdcd" stroke-width="1.9" stroke-linecap="round"/>
<path d="M1130.9 419.3L1134.8 430.4" stroke="#bdbdbd" stroke-width="2.7" stroke-linecap="round"/>
<path d="M1128.4 427.0L1132.0 437.6" stroke="#b4b4b4" stroke-width="2.6" stroke-linecap="round"/>
<path d="M1129.6 428.9L1132.1 439.2" stroke="#bebebe" stroke-width="2.1" stroke-linecap="round"/>
<ellipse cx="1278.8" cy="381.1" rx="4.0" ry="2.2" transform="rotate(-18 1278.8 381.1)" fill="#f7f7f7"/>
<ellipse cx="1272.3" cy="364.6" rx="2.3" ry="1.8" transform="rotate(-18 1272.3 364.6)" fill="#eaeaea"/>
<ellipse cx="1270.4" cy="361.3" rx="4.9" ry="2.1" transform="rotate(-25 1270.4 361.3)" fill="#dcdcdc"/>
<ellipse cx="1261.7" cy="388.7" rx="3.3" ry="2.3" transform="rotate(0 1261.7 388.7)" fill="#f7f7f7"/>
<ellipse cx="1269.0" cy="367.3" rx="4.4" ry="2.2" transform="rotate(-19 1269.0 367.3)" fill="#e5e5e5"/>
<ellipse cx="1288.4" cy="388.6" rx="5.4" ry="2.0" transform="rotate(-12 1288.4 388.6)" fill="#e2e2e2"/>
<path d="M1257.7 381.6L1275.5 373.2L1285.8 370.9L1286.7 373.8L1277.1 378.0Z" fill="#e7e7e7"/>
<ellipse cx="1293.2" cy="352.8" rx="2.9" ry="2.1" transform="rotate(147 1293.2 352.8)" fill="#f9f9f9"/>
<ellipse cx="1305.2" cy="369.0" rx="5.8" ry="3.0" transform="rotate(167 1305.2 369.0)" fill="#ebebeb"/>
<ellipse cx="1311.8" cy="350.8" rx="6.8" ry="2.7" transform="rotate(110 1311.8 350.8)" fill="#e9e9e9"/>
<ellipse cx="1306.8" cy="369.6" rx="2.1" ry="1.7" transform="rotate(86 1306.8 369.6)" fill="#eeeeee"/>
<ellipse cx="1294.2" cy="347.2" rx="6.3" ry="2.4" transform="rotate(140 1294.2 347.2)" fill="#fcfcfc"/>
<ellipse cx="1300.1" cy="362.8" rx="3.1" ry="1.7" transform="rotate(131 1300.1 362.8)" fill="#dbdbdb"/>
<ellipse cx="1296.2" cy="371.5" rx="3.3" ry="2.1" transform="rotate(126 1296.2 371.5)" fill="#eeeeee"/>
<ellipse cx="1309.4" cy="370.5" rx="5.0" ry="2.8" transform="rotate(173 1309.4 370.5)" fill="#f2f2f2"/>
<ellipse cx="1295.7" cy="350.4" rx="5.3" ry="2.7" transform="rotate(118 1295.7 350.4)" fill="#dfdfdf"/>
<ellipse cx="1309.1" cy="359.6" rx="8.0" ry="2.9" transform="rotate(23 1309.1 359.6)" fill="#e6e6e6"/>
<path d="M1300.1 396.6L1309.2 394.2L1314.1 394.9L1314.2 397.3L1309.3 398.3Z" fill="#fdfdfd"/>
<path d="M1307.9 403.6L1309.7 397.8L1312.6 396.9L1315.2 399.7L1313.9 402.5Z" fill="#f6f6f6"/>
<path d="M1315.4 395.1L1323.3 392.4L1327.3 394.0L1327.0 397.9L1322.8 398.9Z" fill="#f6f6f6"/>
<path d="M1293.4 410.3L1300.5 404.7L1305.3 404.4L1306.4 407.7L1302.4 410.3Z" fill="#e8e8e8"/>
<path d="M1327.6 396.5L1335.9 396.5L1339.8 398.4L1339.2 400.9L1334.8 400.6Z" fill="#e1e1e1"/>
<path d="M1320.9 400.6L1323.7 394.5L1327.0 393.7L1329.4 397.0L1327.6 399.9Z" fill="#f6f6f6"/>
<path d="M1296.3 398.9L1305.3 398.3L1309.8 400.0L1309.3 402.6L1304.5 402.6Z" fill="#dcdcdc"/>
<path d="M1317.6 398.2L1324.2 393.6L1328.3 394.3L1329.0 398.5L1325.3 400.5Z" fill="#ededed"/>
<path d="M1326.4 418.7L1328.4 412.7L1331.4 411.4L1333.8 414.0L1332.5 416.9Z" fill="#fdfdfd"/>
<path d="M1328.1 408.7L1333.0 405.2L1336.1 405.4L1336.7 408.1L1334.0 409.7Z" fill="#e9e9e9"/>
<path d="M1318.1 397.6L1325.2 393.4L1329.6 393.2L1330.3 395.9L1326.4 397.9Z" fill="#e9e9e9"/>
<path d="M1285.4 416.8L1294.9 416.3L1299.6 418.1L1299.0 420.8L1294.0 420.8Z" fill="#e7e7e7"/>
<path d="M1306.2 409.8L1311.9 407.1L1314.7 408.5L1314.5 412.1L1311.5 413.1Z" fill="#eaeaea"/>
<path d="M1296.8 413.5L1298.3 407.9L1300.8 406.1L1302.9 407.6L1301.8 410.5Z" fill="#ededed"/>
<path d="M1330.7 407.5L1333.4 401.4L1336.7 400.8L1339.1 404.3L1337.4 407.2Z" fill="#e4e4e4"/>
<path d="M1311.1 407.9L1317.4 401.8L1322.0 401.3L1323.5 404.9L1319.9 407.8Z" fill="#e3e3e3"/>
<path d="M1302.5 415.5L1311.7 414.2L1316.3 416.2L1315.7 419.5L1310.8 419.8Z" fill="#e6e6e6"/>
<path d="M1289.5 408.2L1298.7 405.4L1303.8 406.0L1304.0 408.7L1299.0 409.9Z" fill="#f0f0f0"/>
<ellipse cx="1281.6" cy="403.4" rx="3.2" ry="1.7" transform="rotate(54 1281.6 403.4)" fill="#ebebeb"/>
<ellipse cx="1276.6" cy="407.9" rx="4.1" ry="2.2" transform="rotate(86 1276.6 407.9)" fill="#c9c9c9"/>
<ellipse cx="1280.6" cy="426.4" rx="6.2" ry="2.3" transform="rotate(12 1280.6 426.4)" fill="#d4d4d4"/>
<ellipse cx="1273.1" cy="399.6" rx="4.4" ry="2.1" transform="rotate(51 1273.1 399.6)" fill="#cfcfcf"/>
<ellipse cx="1283.0" cy="410.7" rx="5.2" ry="2.0" transform="rotate(42 1283.0 410.7)" fill="#c9c9c9"/>
<ellipse cx="1275.1" cy="403.7" rx="3.1" ry="1.9" transform="rotate(160 1275.1 403.7)" fill="#cdcdcd"/>
<ellipse cx="1272.5" cy="431.9" rx="4.1" ry="2.8" transform="rotate(157 1272.5 431.9)" fill="#c3c3c3"/>
<ellipse cx="1266.9" cy="422.6" rx="3.5" ry="2.4" transform="rotate(173 1266.9 422.6)" fill="#d3d3d3"/>
<ellipse cx="1262.9" cy="424.7" rx="6.3" ry="2.5" transform="rotate(80 1262.9 424.7)" fill="#ebebeb"/>
<path d="M1258.4 423.4L1264.4 444.9" stroke="#f2f2f2" stroke-width="2.9" stroke-linecap="round"/>
<path d="M1244.4 436.7L1253.5 461.3" stroke="#dddddd" stroke-width="3.3" stroke-linecap="round"/>
<path d="M1236.5 413.9L1247.9 444.0" stroke="#dddddd" stroke-width="3.9" stroke-linecap="round"/>
<path d="M1231.8 418.8L1236.8 434.7" stroke="#f6f6f6" stroke-width="2.9" stroke-linecap="round"/>
<path d="M1237.8 439.4L1243.7 457.5" stroke="#f2f2f2" stroke-width="2.7" stroke-linecap="round"/>
<path d="M1254.6 416.2L1267.0 445.9" stroke="#e1e1e1" stroke-width="3.0" stroke-linecap="round"/>
<path d="M1230.7 416.7L1240.9 439.5" stroke="#d1d1d1" stroke-width="3.9" stroke-linecap="round"/>
<path d="M1213.0 428.0L1228.0 464.0" stroke="#f2f2f2" stroke-width="1.8" stroke-linecap="round"/>
<path d="M1213.6 429.4L1207.6 430.0" stroke="#f0f0f0" stroke-width="1.8" stroke-linecap="round"/>
<path d="M1214.7 432.2L1207.9 432.9" stroke="#e0e0e0" stroke-width="2.2" stroke-linecap="round"/>
<path d="M1215.9 434.9L1208.9 435.6" stroke="#cbcbcb" stroke-width="2.0" stroke-linecap="round"/>
<path d="M1217.0 437.7L1211.5 438.3" stroke="#e4e4e4" stroke-width="1.7" stroke-linecap="round"/>
<path d="M1218.2 440.5L1212.1 441.1" stroke="#dfdfdf" stroke-width="1.8" stroke-linecap="round"/>
<path d="M1219.3 443.2L1213.6 443.8" stroke="#dbdbdb" stroke-width="1.8" stroke-linecap="round"/>
<path d="M1220.5 446.0L1215.2 446.5" stroke="#e5e5e5" stroke-width="2.3" stroke-linecap="round"/>
<path d="M1221.7 448.8L1214.7 449.5" stroke="#dbdbdb" stroke-width="1.5" stroke-linecap="round"/>
<path d="M1222.8 451.5L1216.9 452.1" stroke="#f1f1f1" stroke-width="2.0" stroke-linecap="round"/>
<path d="M1224.0 454.3L1217.7 455.0" stroke="#cbcbcb" stroke-width="1.8" stroke-linecap="round"/>
<path d="M1225.1 457.1L1219.2 457.7" stroke="#d0d0d0" stroke-width="2.0" stroke-linecap="round"/>
<path d="M1226.3 459.8L1221.1 460.4" stroke="#d4d4d4" stroke-width="1.5" stroke-linecap="round"/>
<path d="M1227.4 462.6L1221.8 463.2" stroke="#d7d7d7" stroke-width="1.7" stroke-linecap="round"/>
<path d="M1243.0 460.0L1238.0 486.0" stroke="#f0f0f0" stroke-width="2.2" stroke-linecap="round"/>
<path d="M1242.7 461.7L1237.2 458.8" stroke="#f2f2f2" stroke-width="2.2" stroke-linecap="round"/>
<path d="M1242.7 461.7L1248.8 461.0" stroke="#eaeaea" stroke-width="2.5" stroke-linecap="round"/>
<path d="M1242.0 465.0L1235.9 461.8" stroke="#f8f8f8" stroke-width="2.5" stroke-linecap="round"/>
<path d="M1242.0 465.0L1248.9 464.3" stroke="#f5f5f5" stroke-width="2.5" stroke-linecap="round"/>
<path d="M1241.4 468.3L1236.9 466.0" stroke="#f7f7f7" stroke-width="2.5" stroke-linecap="round"/>
<path d="M1241.4 468.3L1246.4 467.8" stroke="#f9f9f9" stroke-width="2.1" stroke-linecap="round"/>
<path d="M1240.8 471.7L1234.9 468.6" stroke="#f6f6f6" stroke-width="2.5" stroke-linecap="round"/>
<path d="M1240.8 471.7L1247.3 471.0" stroke="#e0e0e0" stroke-width="2.5" stroke-linecap="round"/>
<path d="M1240.1 475.0L1233.7 471.7" stroke="#e0e0e0" stroke-width="2.8" stroke-linecap="round"/>
<path d="M1240.1 475.0L1247.3 474.3" stroke="#e8e8e8" stroke-width="1.8" stroke-linecap="round"/>
<path d="M1239.5 478.4L1233.8 475.4" stroke="#cecece" stroke-width="2.2" stroke-linecap="round"/>
<path d="M1239.5 478.4L1245.9 477.7" stroke="#ededed" stroke-width="1.8" stroke-linecap="round"/>
<path d="M1238.8 481.7L1233.9 479.1" stroke="#f1f1f1" stroke-width="2.2" stroke-linecap="round"/>
<path d="M1238.8 481.7L1244.3 481.1" stroke="#f7f7f7" stroke-width="2.2" stroke-linecap="round"/>
<path d="M1238.2 485.0L1233.2 482.5" stroke="#dfdfdf" stroke-width="1.9" stroke-linecap="round"/>
<path d="M1238.2 485.0L1243.7 484.5" stroke="#cdcdcd" stroke-width="2.8" stroke-linecap="round"/>
<ellipse cx="1254.0" cy="470.0" rx="3.0" ry="3.5" transform="rotate(0 1254.0 470.0)" fill="#e3e3e3"/>
<path d="M1197.4 519.5L1188.8 514.4L1186.2 509.7L1188.9 507.3L1193.3 510.3Z" fill="#d8d8d8"/>
<path d="M1210.7 548.7L1205.4 541.3L1205.1 536.6L1208.5 535.5L1211.0 539.6Z" fill="#b6b6b6"/>
<path d="M1195.1 549.2L1191.0 543.6L1192.0 540.2L1196.2 539.8L1197.9 542.8Z" fill="#d1d1d1"/>
<path d="M1222.6 527.3L1219.4 520.6L1220.3 516.9L1223.7 516.7L1225.0 520.3Z" fill="#b8b8b8"/>
<path d="M1210.0 515.9L1200.9 513.4L1197.9 509.6L1200.2 506.4L1204.8 508.1Z" fill="#cdcdcd"/>
<path d="M1219.8 549.2L1216.5 543.1L1217.1 539.6L1220.1 539.2L1221.6 542.5Z" fill="#c6c6c6"/>
<path d="M1205.7 541.3L1200.9 535.7L1201.2 531.8L1205.0 530.8L1207.2 534.0Z" fill="#bfbfbf"/>
<path d="M1230.1 502.5L1224.0 499.8L1222.2 496.8L1224.1 494.9L1227.1 496.6Z" fill="#c9c9c9"/>
<path d="M1208.1 551.2L1204.8 545.9L1205.8 542.9L1209.4 542.7L1210.8 545.6Z" fill="#bababa"/>
<path d="M1221.0 525.7L1213.1 520.6L1210.4 516.5L1212.3 514.7L1216.3 517.6Z" fill="#dbdbdb"/>
<path d="M1236.3 532.7L1232.2 524.3L1232.4 519.3L1235.4 518.8L1237.3 523.4Z" fill="#a9a9a9"/>
<path d="M1222.1 545.5L1217.6 537.9L1218.0 533.3L1221.7 532.6L1223.7 536.8Z" fill="#cfcfcf"/>
<path d="M1226.0 531.3L1219.1 526.7L1217.8 522.6L1220.8 520.5L1224.2 523.2Z" fill="#b8b8b8"/>
<path d="M1238.7 513.2L1233.5 510.3L1232.3 507.4L1234.3 505.8L1236.8 507.5Z" fill="#adadad"/>
<path d="M1228.1 559.2L1222.4 551.1L1221.5 546.0L1224.3 544.9L1227.1 549.4Z" fill="#a3a3a3"/>
<path d="M1242.4 508.4L1235.0 503.1L1232.9 498.8L1235.3 496.9L1239.0 500.0Z" fill="#a1a1a1"/>
<path d="M1226.8 563.5L1223.8 557.4L1224.5 553.9L1227.6 553.7L1228.9 557.0Z" fill="#aaaaaa"/>
<path d="M1223.0 559.6L1217.0 554.5L1216.9 550.4L1220.9 548.8L1223.7 551.8Z" fill="#d1d1d1"/>
<path d="M1213.6 499.7L1209.9 493.5L1210.0 489.7L1212.6 489.1L1214.3 492.5Z" fill="#b3b3b3"/>
<path d="M1222.5 499.8L1213.3 496.8L1209.8 493.1L1211.7 490.5L1216.4 492.4Z" fill="#b6b6b6"/>
<path d="M1225.6 557.6L1221.0 553.3L1221.9 550.3L1226.4 549.5L1228.3 551.9Z" fill="#c0c0c0"/>
<path d="M1218.0 504.7L1214.4 498.6L1214.7 494.8L1217.6 494.3L1219.3 497.6Z" fill="#b9b9b9"/>
<path d="M1241.5 514.5L1234.0 508.5L1233.1 503.6L1237.1 501.5L1240.7 504.9Z" fill="#a6a6a6"/>
<path d="M1222.9 555.5L1214.9 553.3L1211.9 550.1L1213.6 547.5L1217.7 549.0Z" fill="#bbbbbb"/>
<path d="M1231.0 492.0L1256.0 574.0" stroke="#e8e8e8" stroke-width="2.2" stroke-linecap="round"/>
<path d="M1231.6 493.8L1224.0 493.9" stroke="#e4e4e4" stroke-width="2.8" stroke-linecap="round"/>
<path d="M1231.6 493.8L1237.8 489.7" stroke="#e3e3e3" stroke-width="2.0" stroke-linecap="round"/>
<path d="M1232.7 497.5L1225.1 497.5" stroke="#d4d4d4" stroke-width="2.1" stroke-linecap="round"/>
<path d="M1232.7 497.5L1239.0 493.2" stroke="#e5e5e5" stroke-width="2.9" stroke-linecap="round"/>
<path d="M1233.8 501.1L1225.6 501.1" stroke="#cfcfcf" stroke-width="1.8" stroke-linecap="round"/>
<path d="M1233.8 501.1L1240.5 496.6" stroke="#cfcfcf" stroke-width="1.8" stroke-linecap="round"/>
<path d="M1234.9 504.7L1226.4 504.8" stroke="#d7d7d7" stroke-width="2.0" stroke-linecap="round"/>
<path d="M1234.9 504.7L1241.9 500.0" stroke="#dddddd" stroke-width="1.8" stroke-linecap="round"/>
<path d="M1236.0 508.4L1229.1 508.4" stroke="#dddddd" stroke-width="2.0" stroke-linecap="round"/>
<path d="M1236.0 508.4L1241.7 504.5" stroke="#d5d5d5" stroke-width="2.2" stroke-linecap="round"/>
<path d="M1237.1 512.0L1229.0 512.0" stroke="#c1c1c1" stroke-width="1.8" stroke-linecap="round"/>
<path d="M1237.1 512.0L1243.8 507.5" stroke="#d5d5d5" stroke-width="2.2" stroke-linecap="round"/>
<path d="M1238.2 515.6L1231.5 515.7" stroke="#d7d7d7" stroke-width="2.4" stroke-linecap="round"/>
<path d="M1238.2 515.6L1243.8 511.9" stroke="#c1c1c1" stroke-width="2.1" stroke-linecap="round"/>
<path d="M1239.3 519.3L1230.1 519.3" stroke="#c8c8c8" stroke-width="2.6" stroke-linecap="round"/>
<path d="M1239.3 519.3L1246.9 514.2" stroke="#ebebeb" stroke-width="2.0" stroke-linecap="round"/>
<path d="M1240.4 522.9L1233.6 522.9" stroke="#c7c7c7" stroke-width="2.5" stroke-linecap="round"/>
<path d="M1240.4 522.9L1246.1 519.1" stroke="#e5e5e5" stroke-width="2.4" stroke-linecap="round"/>
<path d="M1241.5 526.5L1232.7 526.6" stroke="#d6d6d6" stroke-width="2.5" stroke-linecap="round"/>
<path d="M1241.5 526.5L1248.9 521.6" stroke="#d8d8d8" stroke-width="2.4" stroke-linecap="round"/>
<path d="M1242.6 530.2L1233.6 530.2" stroke="#e3e3e3" stroke-width="2.4" stroke-linecap="round"/>
<path d="M1242.6 530.2L1250.2 525.2" stroke="#efefef" stroke-width="2.1" stroke-linecap="round"/>
<path d="M1243.7 533.8L1236.0 533.8" stroke="#d0d0d0" stroke-width="2.1" stroke-linecap="round"/>
<path d="M1243.7 533.8L1250.2 529.5" stroke="#c4c4c4" stroke-width="2.4" stroke-linecap="round"/>
<path d="M1244.9 537.4L1236.8 537.5" stroke="#cdcdcd" stroke-width="2.7" stroke-linecap="round"/>
<path d="M1244.9 537.4L1251.5 533.0" stroke="#e9e9e9" stroke-width="1.9" stroke-linecap="round"/>
<path d="M1246.0 541.1L1237.4 541.1" stroke="#c3c3c3" stroke-width="1.9" stroke-linecap="round"/>
<path d="M1246.0 541.1L1253.1 536.3" stroke="#d1d1d1" stroke-width="2.7" stroke-linecap="round"/>
<path d="M1247.1 544.7L1240.0 544.7" stroke="#c9c9c9" stroke-width="2.3" stroke-linecap="round"/>
<path d="M1247.1 544.7L1253.0 540.8" stroke="#c1c1c1" stroke-width="2.8" stroke-linecap="round"/>
<path d="M1248.2 548.3L1240.6 548.4" stroke="#c7c7c7" stroke-width="2.8" stroke-linecap="round"/>
<path d="M1248.2 548.3L1254.4 544.2" stroke="#e9e9e9" stroke-width="2.5" stroke-linecap="round"/>
<path d="M1249.3 552.0L1242.3 552.0" stroke="#e7e7e7" stroke-width="2.3" stroke-linecap="round"/>
<path d="M1249.3 552.0L1255.1 548.1" stroke="#cecece" stroke-width="2.1" stroke-linecap="round"/>
<path d="M1250.4 555.6L1242.2 555.6" stroke="#dfdfdf" stroke-width="2.2" stroke-linecap="round"/>
<path d="M1250.4 555.6L1257.2 551.1" stroke="#dddddd" stroke-width="2.8" stroke-linecap="round"/>
<path d="M1251.5 559.2L1242.2 559.3" stroke="#c4c4c4" stroke-width="2.1" stroke-linecap="round"/>
<path d="M1251.5 559.2L1259.3 554.1" stroke="#c6c6c6" stroke-width="2.6" stroke-linecap="round"/>
<path d="M1252.6 562.9L1243.4 562.9" stroke="#efefef" stroke-width="2.7" stroke-linecap="round"/>
<path d="M1252.6 562.9L1260.2 557.8" stroke="#d5d5d5" stroke-width="2.5" stroke-linecap="round"/>
<path d="M1253.7 566.5L1244.5 566.6" stroke="#e6e6e6" stroke-width="2.2" stroke-linecap="round"/>
<path d="M1253.7 566.5L1261.4 561.4" stroke="#dedede" stroke-width="2.0" stroke-linecap="round"/>
<path d="M1254.8 570.1L1246.1 570.2" stroke="#d3d3d3" stroke-width="1.9" stroke-linecap="round"/>
<path d="M1254.8 570.1L1262.1 565.3" stroke="#bebebe" stroke-width="2.2" stroke-linecap="round"/>
<path d="M1255.9 573.8L1248.6 573.8" stroke="#ededed" stroke-width="2.8" stroke-linecap="round"/>
<path d="M1255.9 573.8L1262.1 569.7" stroke="#cbcbcb" stroke-width="2.1" stroke-linecap="round"/>
<path d="M1268.0 500.0L1283.0 570.0" stroke="#eaeaea" stroke-width="2.4" stroke-linecap="round"/>
<path d="M1268.4 502.0L1259.0 501.2" stroke="#e9e9e9" stroke-width="2.6" stroke-linecap="round"/>
<path d="M1268.4 502.0L1276.7 497.4" stroke="#fcfcfc" stroke-width="2.8" stroke-linecap="round"/>
<path d="M1269.3 505.9L1259.6 505.1" stroke="#efefef" stroke-width="2.9" stroke-linecap="round"/>
<path d="M1269.3 505.9L1277.8 501.2" stroke="#f9f9f9" stroke-width="2.4" stroke-linecap="round"/>
<path d="M1270.1 509.8L1259.6 508.9" stroke="#e9e9e9" stroke-width="3.0" stroke-linecap="round"/>
<path d="M1270.1 509.8L1279.3 504.7" stroke="#e7e7e7" stroke-width="2.6" stroke-linecap="round"/>
<path d="M1270.9 513.7L1263.4 513.1" stroke="#f7f7f7" stroke-width="2.5" stroke-linecap="round"/>
<path d="M1270.9 513.7L1277.6 510.0" stroke="#e6e6e6" stroke-width="2.2" stroke-linecap="round"/>
<path d="M1271.8 517.6L1264.2 517.0" stroke="#ebebeb" stroke-width="2.9" stroke-linecap="round"/>
<path d="M1271.8 517.6L1278.5 513.9" stroke="#eaeaea" stroke-width="2.3" stroke-linecap="round"/>
<path d="M1272.6 521.5L1265.4 520.9" stroke="#e3e3e3" stroke-width="2.3" stroke-linecap="round"/>
<path d="M1272.6 521.5L1279.0 518.0" stroke="#e4e4e4" stroke-width="2.2" stroke-linecap="round"/>
<path d="M1273.4 525.4L1266.2 524.8" stroke="#eeeeee" stroke-width="2.1" stroke-linecap="round"/>
<path d="M1273.4 525.4L1279.8 521.9" stroke="#dddddd" stroke-width="2.7" stroke-linecap="round"/>
<path d="M1274.3 529.3L1264.7 528.6" stroke="#e8e8e8" stroke-width="2.3" stroke-linecap="round"/>
<path d="M1274.3 529.3L1282.7 524.7" stroke="#dcdcdc" stroke-width="2.2" stroke-linecap="round"/>
<path d="M1275.1 533.2L1265.6 532.5" stroke="#d3d3d3" stroke-width="2.7" stroke-linecap="round"/>
<path d="M1275.1 533.2L1283.5 528.6" stroke="#dadada" stroke-width="2.9" stroke-linecap="round"/>
<path d="M1276.0 537.2L1268.6 536.6" stroke="#f0f0f0" stroke-width="2.1" stroke-linecap="round"/>
<path d="M1276.0 537.2L1282.4 533.6" stroke="#e2e2e2" stroke-width="2.4" stroke-linecap="round"/>
<path d="M1276.8 541.1L1269.6 540.5" stroke="#f8f8f8" stroke-width="2.8" stroke-linecap="round"/>
<path d="M1276.8 541.1L1283.2 537.6" stroke="#fefefe" stroke-width="2.7" stroke-linecap="round"/>
<path d="M1277.6 545.0L1270.4 544.4" stroke="#d8d8d8" stroke-width="2.7" stroke-linecap="round"/>
<path d="M1277.6 545.0L1284.0 541.5" stroke="#f9f9f9" stroke-width="2.7" stroke-linecap="round"/>
<path d="M1278.5 548.9L1268.8 548.1" stroke="#f2f2f2" stroke-width="2.4" stroke-linecap="round"/>
<path d="M1278.5 548.9L1287.0 544.2" stroke="#ededed" stroke-width="2.0" stroke-linecap="round"/>
<path d="M1279.3 552.8L1271.3 552.2" stroke="#f2f2f2" stroke-width="2.3" stroke-linecap="round"/>
<path d="M1279.3 552.8L1286.3 548.9" stroke="#d7d7d7" stroke-width="3.1" stroke-linecap="round"/>
<path d="M1280.2 556.7L1272.0 556.1" stroke="#d2d2d2" stroke-width="2.4" stroke-linecap="round"/>
<path d="M1280.2 556.7L1287.4 552.8" stroke="#d5d5d5" stroke-width="2.7" stroke-linecap="round"/>
<path d="M1281.0 560.6L1271.0 559.8" stroke="#eaeaea" stroke-width="2.5" stroke-linecap="round"/>
<path d="M1281.0 560.6L1289.7 555.8" stroke="#e8e8e8" stroke-width="2.2" stroke-linecap="round"/>
<path d="M1281.8 564.5L1272.3 563.8" stroke="#d9d9d9" stroke-width="3.0" stroke-linecap="round"/>
<path d="M1281.8 564.5L1290.2 559.9" stroke="#dfdfdf" stroke-width="2.2" stroke-linecap="round"/>
<path d="M1282.7 568.4L1271.9 567.6" stroke="#ececec" stroke-width="2.5" stroke-linecap="round"/>
<path d="M1282.7 568.4L1292.1 563.3" stroke="#e7e7e7" stroke-width="2.4" stroke-linecap="round"/>
<ellipse cx="1276.1" cy="498.5" rx="6.0" ry="3.2" transform="rotate(68 1276.1 498.5)" fill="#e2e2e2"/>
<ellipse cx="1282.0" cy="480.6" rx="5.2" ry="2.4" transform="rotate(2 1282.0 480.6)" fill="#eaeaea"/>
<ellipse cx="1280.0" cy="505.1" rx="3.8" ry="2.2" transform="rotate(112 1280.0 505.1)" fill="#d9d9d9"/>
<ellipse cx="1279.7" cy="501.7" rx="3.2" ry="1.9" transform="rotate(97 1279.7 501.7)" fill="#fcfcfc"/>
<ellipse cx="1262.7" cy="515.7" rx="3.8" ry="2.2" transform="rotate(177 1262.7 515.7)" fill="#ededed"/>
<ellipse cx="1272.3" cy="507.8" rx="5.6" ry="3.1" transform="rotate(107 1272.3 507.8)" fill="#efefef"/>
<ellipse cx="1283.4" cy="485.7" rx="5.6" ry="2.1" transform="rotate(23 1283.4 485.7)" fill="#e0e0e0"/>
<ellipse cx="1294.6" cy="514.9" rx="4.0" ry="2.7" transform="rotate(125 1294.6 514.9)" fill="#dddddd"/>
<ellipse cx="1276.5" cy="500.7" rx="7.3" ry="2.5" transform="rotate(89 1276.5 500.7)" fill="#e7e7e7"/>
<ellipse cx="1294.9" cy="493.4" rx="3.3" ry="2.0" transform="rotate(148 1294.9 493.4)" fill="#ebebeb"/>
<ellipse cx="1291.3" cy="499.4" rx="2.5" ry="1.6" transform="rotate(90 1291.3 499.4)" fill="#ededed"/>
<ellipse cx="1274.9" cy="500.5" rx="4.2" ry="1.5" transform="rotate(67 1274.9 500.5)" fill="#e7e7e7"/>
<ellipse cx="1274.2" cy="512.4" rx="4.1" ry="1.9" transform="rotate(34 1274.2 512.4)" fill="#f6f6f6"/>
<ellipse cx="1259.5" cy="515.4" rx="7.5" ry="3.4" transform="rotate(86 1259.5 515.4)" fill="#f6f6f6"/>
<ellipse cx="1330.9" cy="537.7" rx="7.2" ry="3.7" transform="rotate(5 1330.9 537.7)" fill="#c9c9c9"/>
<ellipse cx="1332.6" cy="525.0" rx="3.6" ry="2.2" transform="rotate(17 1332.6 525.0)" fill="#f3f3f3"/>
<ellipse cx="1297.9" cy="541.4" rx="4.5" ry="1.5" transform="rotate(23 1297.9 541.4)" fill="#e2e2e2"/>
<ellipse cx="1304.5" cy="563.2" rx="9.1" ry="3.3" transform="rotate(2 1304.5 563.2)" fill="#dfdfdf"/>
<ellipse cx="1310.8" cy="540.0" rx="3.7" ry="1.5" transform="rotate(-8 1310.8 540.0)" fill="#d9d9d9"/>
<ellipse cx="1333.5" cy="552.7" rx="2.2" ry="1.7" transform="rotate(-10 1333.5 552.7)" fill="#e9e9e9"/>
<ellipse cx="1291.2" cy="570.7" rx="6.1" ry="2.3" transform="rotate(24 1291.2 570.7)" fill="#cecece"/>
<ellipse cx="1293.9" cy="547.7" rx="7.1" ry="2.5" transform="rotate(22 1293.9 547.7)" fill="#c9c9c9"/>
<ellipse cx="1332.2" cy="552.0" rx="4.5" ry="2.5" transform="rotate(17 1332.2 552.0)" fill="#eeeeee"/>
<ellipse cx="1300.1" cy="539.2" rx="5.5" ry="3.7" transform="rotate(-8 1300.1 539.2)" fill="#f5f5f5"/>
<ellipse cx="1308.3" cy="569.0" rx="4.3" ry="3.5" transform="rotate(23 1308.3 569.0)" fill="#ededed"/>
<ellipse cx="1307.3" cy="562.3" rx="4.0" ry="2.6" transform="rotate(0 1307.3 562.3)" fill="#e7e7e7"/>
<ellipse cx="1302.7" cy="544.3" rx="5.7" ry="2.9" transform="rotate(-6 1302.7 544.3)" fill="#cfcfcf"/>
<ellipse cx="1288.0" cy="523.6" rx="6.7" ry="2.9" transform="rotate(12 1288.0 523.6)" fill="#f1f1f1"/>
<ellipse cx="1322.4" cy="523.7" rx="7.7" ry="2.6" transform="rotate(13 1322.4 523.7)" fill="#cacaca"/>
<ellipse cx="1292.7" cy="522.4" rx="4.7" ry="3.0" transform="rotate(17 1292.7 522.4)" fill="#d1d1d1"/>
<ellipse cx="1287.4" cy="564.4" rx="4.4" ry="2.4" transform="rotate(-7 1287.4 564.4)" fill="#cdcdcd"/>
<ellipse cx="1324.0" cy="553.4" rx="6.8" ry="3.3" transform="rotate(24 1324.0 553.4)" fill="#cdcdcd"/>
<ellipse cx="1285.8" cy="528.7" rx="5.5" ry="2.5" transform="rotate(-8 1285.8 528.7)" fill="#e0e0e0"/>
<ellipse cx="1325.6" cy="556.6" rx="2.9" ry="2.1" transform="rotate(14 1325.6 556.6)" fill="#e4e4e4"/>
<ellipse cx="1290.7" cy="533.5" rx="7.7" ry="3.0" transform="rotate(20 1290.7 533.5)" fill="#c9c9c9"/>
<ellipse cx="1300.2" cy="557.3" rx="5.6" ry="2.7" transform="rotate(16 1300.2 557.3)" fill="#f5f5f5"/>
<ellipse cx="1286.5" cy="525.7" rx="4.2" ry="2.3" transform="rotate(-10 1286.5 525.7)" fill="#ececec"/>
<ellipse cx="1318.6" cy="540.3" rx="2.2" ry="1.6" transform="rotate(1 1318.6 540.3)" fill="#cccccc"/>
<ellipse cx="1316.6" cy="535.0" rx="3.2" ry="1.9" transform="rotate(17 1316.6 535.0)" fill="#e5e5e5"/>
<ellipse cx="1292.0" cy="570.6" rx="7.1" ry="2.9" transform="rotate(11 1292.0 570.6)" fill="#dddddd"/>
<ellipse cx="1289.8" cy="565.6" rx="6.6" ry="3.2" transform="rotate(4 1289.8 565.6)" fill="#e1e1e1"/>
<ellipse cx="1319.3" cy="527.6" rx="3.4" ry="2.3" transform="rotate(5 1319.3 527.6)" fill="#c3c3c3"/>
<ellipse cx="1286.0" cy="554.4" rx="9.5" ry="3.3" transform="rotate(24 1286.0 554.4)" fill="#c6c6c6"/>
<ellipse cx="1312.9" cy="545.7" rx="5.0" ry="1.9" transform="rotate(10 1312.9 545.7)" fill="#d9d9d9"/>
<ellipse cx="1322.1" cy="530.3" rx="2.6" ry="1.7" transform="rotate(20 1322.1 530.3)" fill="#eaeaea"/>
<ellipse cx="1297.6" cy="574.8" rx="5.9" ry="2.3" transform="rotate(5 1297.6 574.8)" fill="#e2e2e2"/>
<ellipse cx="1324.2" cy="561.0" rx="7.8" ry="2.7" transform="rotate(-8 1324.2 561.0)" fill="#dcdcdc"/>
<ellipse cx="1314.3" cy="542.7" rx="10.0" ry="3.5" transform="rotate(26 1314.3 542.7)" fill="#cccccc"/>
<ellipse cx="1310.5" cy="553.4" rx="4.0" ry="2.2" transform="rotate(19 1310.5 553.4)" fill="#f6f6f6"/>
<ellipse cx="1310.9" cy="558.9" rx="3.5" ry="2.3" transform="rotate(24 1310.9 558.9)" fill="#d2d2d2"/>
<ellipse cx="1316.4" cy="537.6" rx="7.0" ry="2.6" transform="rotate(6 1316.4 537.6)" fill="#eaeaea"/>
<ellipse cx="1288.3" cy="527.6" rx="4.9" ry="2.8" transform="rotate(-3 1288.3 527.6)" fill="#e0e0e0"/>
<ellipse cx="1321.8" cy="531.2" rx="7.9" ry="3.6" transform="rotate(28 1321.8 531.2)" fill="#f4f4f4"/>
<ellipse cx="1308.0" cy="571.9" rx="3.2" ry="2.3" transform="rotate(26 1308.0 571.9)" fill="#cccccc"/>
<ellipse cx="1305.0" cy="557.3" rx="5.7" ry="3.4" transform="rotate(3 1305.0 557.3)" fill="#f9f9f9"/>
<ellipse cx="1306.6" cy="573.6" rx="5.6" ry="2.3" transform="rotate(15 1306.6 573.6)" fill="#d6d6d6"/>
<ellipse cx="1326.4" cy="541.5" rx="3.5" ry="1.6" transform="rotate(3 1326.4 541.5)" fill="#d7d7d7"/>
<ellipse cx="1324.9" cy="548.7" rx="3.3" ry="2.2" transform="rotate(24 1324.9 548.7)" fill="#c8c8c8"/>
<ellipse cx="1298.0" cy="548.8" rx="4.9" ry="3.1" transform="rotate(-2 1298.0 548.8)" fill="#d6d6d6"/>
<ellipse cx="1302.0" cy="526.4" rx="5.5" ry="2.2" transform="rotate(28 1302.0 526.4)" fill="#cdcdcd"/>
<ellipse cx="1319.2" cy="573.0" rx="2.0" ry="1.6" transform="rotate(7 1319.2 573.0)" fill="#d2d2d2"/>
<ellipse cx="1316.1" cy="572.0" rx="8.1" ry="2.8" transform="rotate(17 1316.1 572.0)" fill="#e0e0e0"/>
<ellipse cx="1317.9" cy="563.6" rx="4.5" ry="1.9" transform="rotate(21 1317.9 563.6)" fill="#e6e6e6"/>
<ellipse cx="1319.2" cy="557.8" rx="3.5" ry="2.4" transform="rotate(11 1319.2 557.8)" fill="#ededed"/>
<path d="M1297.0 505.0L1304.0 580.0" stroke="#f4f4f4" stroke-width="2.4" stroke-linecap="round"/>
<path d="M1297.2 506.8L1289.1 505.2" stroke="#eaeaea" stroke-width="2.9" stroke-linecap="round"/>
<path d="M1297.2 506.8L1304.8 503.7" stroke="#f4f4f4" stroke-width="2.6" stroke-linecap="round"/>
<path d="M1297.5 510.4L1288.8 508.6" stroke="#f2f2f2" stroke-width="3.1" stroke-linecap="round"/>
<path d="M1297.5 510.4L1305.7 507.1" stroke="#fbfbfb" stroke-width="2.7" stroke-linecap="round"/>
<path d="M1297.8 514.0L1291.2 512.6" stroke="#dadada" stroke-width="2.7" stroke-linecap="round"/>
<path d="M1297.8 514.0L1304.1 511.4" stroke="#e7e7e7" stroke-width="2.3" stroke-linecap="round"/>
<path d="M1298.2 517.5L1289.9 515.9" stroke="#ededed" stroke-width="2.4" stroke-linecap="round"/>
<path d="M1298.2 517.5L1306.0 514.4" stroke="#dbdbdb" stroke-width="2.5" stroke-linecap="round"/>
<path d="M1298.5 521.1L1292.0 519.8" stroke="#e2e2e2" stroke-width="2.2" stroke-linecap="round"/>
<path d="M1298.5 521.1L1304.7 518.6" stroke="#e0e0e0" stroke-width="2.6" stroke-linecap="round"/>
<path d="M1298.8 524.7L1291.3 523.2" stroke="#e2e2e2" stroke-width="2.9" stroke-linecap="round"/>
<path d="M1298.8 524.7L1305.9 521.8" stroke="#e5e5e5" stroke-width="2.1" stroke-linecap="round"/>
<path d="M1299.2 528.3L1290.4 526.5" stroke="#dbdbdb" stroke-width="2.0" stroke-linecap="round"/>
<path d="M1299.2 528.3L1307.5 524.9" stroke="#e6e6e6" stroke-width="3.0" stroke-linecap="round"/>
<path d="M1299.5 531.9L1291.1 530.2" stroke="#e6e6e6" stroke-width="2.1" stroke-linecap="round"/>
<path d="M1299.5 531.9L1307.4 528.7" stroke="#f9f9f9" stroke-width="2.3" stroke-linecap="round"/>
<path d="M1299.8 535.5L1291.0 533.7" stroke="#dfdfdf" stroke-width="2.6" stroke-linecap="round"/>
<path d="M1299.8 535.5L1308.2 532.1" stroke="#e5e5e5" stroke-width="2.9" stroke-linecap="round"/>
<path d="M1300.2 539.1L1291.4 537.3" stroke="#d9d9d9" stroke-width="2.5" stroke-linecap="round"/>
<path d="M1300.2 539.1L1308.5 535.7" stroke="#dedede" stroke-width="2.9" stroke-linecap="round"/>
<path d="M1300.5 542.6L1293.9 541.3" stroke="#e6e6e6" stroke-width="2.0" stroke-linecap="round"/>
<path d="M1300.5 542.6L1306.8 540.1" stroke="#d4d4d4" stroke-width="2.3" stroke-linecap="round"/>
<path d="M1300.8 546.2L1294.1 544.9" stroke="#e9e9e9" stroke-width="2.0" stroke-linecap="round"/>
<path d="M1300.8 546.2L1307.2 543.6" stroke="#fafafa" stroke-width="2.3" stroke-linecap="round"/>
<path d="M1301.2 549.8L1292.2 548.0" stroke="#d3d3d3" stroke-width="2.3" stroke-linecap="round"/>
<path d="M1301.2 549.8L1309.7 546.4" stroke="#d3d3d3" stroke-width="2.9" stroke-linecap="round"/>
<path d="M1301.5 553.4L1294.1 551.9" stroke="#e9e9e9" stroke-width="2.0" stroke-linecap="round"/>
<path d="M1301.5 553.4L1308.5 550.6" stroke="#e8e8e8" stroke-width="2.4" stroke-linecap="round"/>
<path d="M1301.9 557.0L1293.1 555.2" stroke="#e4e4e4" stroke-width="2.9" stroke-linecap="round"/>
<path d="M1301.9 557.0L1310.1 553.6" stroke="#e8e8e8" stroke-width="2.3" stroke-linecap="round"/>
<path d="M1302.2 560.6L1293.0 558.7" stroke="#e2e2e2" stroke-width="2.2" stroke-linecap="round"/>
<path d="M1302.2 560.6L1310.9 557.0" stroke="#d4d4d4" stroke-width="2.3" stroke-linecap="round"/>
<path d="M1302.5 564.1L1294.7 562.6" stroke="#fbfbfb" stroke-width="2.7" stroke-linecap="round"/>
<path d="M1302.5 564.1L1309.9 561.2" stroke="#eeeeee" stroke-width="3.0" stroke-linecap="round"/>
<path d="M1302.9 567.7L1293.7 565.9" stroke="#d7d7d7" stroke-width="2.5" stroke-linecap="round"/>
<path d="M1302.9 567.7L1311.5 564.2" stroke="#dedede" stroke-width="2.9" stroke-linecap="round"/>
<path d="M1303.2 571.3L1295.6 569.8" stroke="#f4f4f4" stroke-width="2.2" stroke-linecap="round"/>
<path d="M1303.2 571.3L1310.3 568.4" stroke="#f9f9f9" stroke-width="2.2" stroke-linecap="round"/>
<path d="M1303.5 574.9L1294.1 573.0" stroke="#e5e5e5" stroke-width="2.0" stroke-linecap="round"/>
<path d="M1303.5 574.9L1312.4 571.3" stroke="#d4d4d4" stroke-width="3.0" stroke-linecap="round"/>
<path d="M1303.9 578.5L1294.6 576.6" stroke="#d2d2d2" stroke-width="2.5" stroke-linecap="round"/>
<path d="M1303.9 578.5L1312.6 574.9" stroke="#ebebeb" stroke-width="2.0" stroke-linecap="round"/>
<path d="M1318.0 520.0L1322.0 585.0" stroke="#f9f9f9" stroke-width="2.2" stroke-linecap="round"/>
<path d="M1318.1 521.8L1311.3 520.2" stroke="#ebebeb" stroke-width="2.7" stroke-linecap="round"/>
<path d="M1318.1 521.8L1324.7 519.4" stroke="#e9e9e9" stroke-width="1.9" stroke-linecap="round"/>
<path d="M1318.3 525.4L1311.1 523.7" stroke="#e1e1e1" stroke-width="2.2" stroke-linecap="round"/>
<path d="M1318.3 525.4L1325.3 522.8" stroke="#f6f6f6" stroke-width="2.8" stroke-linecap="round"/>
<path d="M1318.6 529.0L1312.6 527.6" stroke="#dadada" stroke-width="2.6" stroke-linecap="round"/>
<path d="M1318.6 529.0L1324.3 526.9" stroke="#cfcfcf" stroke-width="2.7" stroke-linecap="round"/>
<path d="M1318.8 532.6L1311.3 530.8" stroke="#d1d1d1" stroke-width="2.5" stroke-linecap="round"/>
<path d="M1318.8 532.6L1326.0 529.9" stroke="#cfcfcf" stroke-width="1.8" stroke-linecap="round"/>
<path d="M1319.0 536.2L1312.7 534.7" stroke="#e4e4e4" stroke-width="1.9" stroke-linecap="round"/>
<path d="M1319.0 536.2L1325.0 534.0" stroke="#e6e6e6" stroke-width="2.8" stroke-linecap="round"/>
<path d="M1319.2 539.8L1312.0 538.1" stroke="#d5d5d5" stroke-width="2.2" stroke-linecap="round"/>
<path d="M1319.2 539.8L1326.2 537.2" stroke="#f4f4f4" stroke-width="2.5" stroke-linecap="round"/>
<path d="M1319.4 543.4L1312.0 541.6" stroke="#cbcbcb" stroke-width="2.5" stroke-linecap="round"/>
<path d="M1319.4 543.4L1326.6 540.7" stroke="#d2d2d2" stroke-width="2.8" stroke-linecap="round"/>
<path d="M1319.7 546.9L1312.6 545.3" stroke="#c8c8c8" stroke-width="2.5" stroke-linecap="round"/>
<path d="M1319.7 546.9L1326.4 544.5" stroke="#f0f0f0" stroke-width="2.5" stroke-linecap="round"/>
<path d="M1319.9 550.5L1313.6 549.1" stroke="#dcdcdc" stroke-width="2.0" stroke-linecap="round"/>
<path d="M1319.9 550.5L1325.9 548.3" stroke="#f2f2f2" stroke-width="2.3" stroke-linecap="round"/>
<path d="M1320.1 554.1L1313.9 552.7" stroke="#f9f9f9" stroke-width="2.6" stroke-linecap="round"/>
<path d="M1320.1 554.1L1326.1 551.9" stroke="#cecece" stroke-width="2.7" stroke-linecap="round"/>
<path d="M1320.3 557.7L1312.6 555.9" stroke="#cccccc" stroke-width="2.8" stroke-linecap="round"/>
<path d="M1320.3 557.7L1327.8 555.0" stroke="#cfcfcf" stroke-width="2.1" stroke-linecap="round"/>
<path d="M1320.5 561.3L1314.1 559.8" stroke="#e0e0e0" stroke-width="2.3" stroke-linecap="round"/>
<path d="M1320.5 561.3L1326.8 559.0" stroke="#d9d9d9" stroke-width="2.3" stroke-linecap="round"/>
<path d="M1320.8 564.9L1313.7 563.3" stroke="#cfcfcf" stroke-width="2.7" stroke-linecap="round"/>
<path d="M1320.8 564.9L1327.6 562.4" stroke="#cbcbcb" stroke-width="2.4" stroke-linecap="round"/>
<path d="M1321.0 568.5L1313.1 566.7" stroke="#d9d9d9" stroke-width="2.3" stroke-linecap="round"/>
<path d="M1321.0 568.5L1328.6 565.7" stroke="#dddddd" stroke-width="2.0" stroke-linecap="round"/>
<path d="M1321.2 572.1L1315.4 570.7" stroke="#cecece" stroke-width="2.0" stroke-linecap="round"/>
<path d="M1321.2 572.1L1326.8 570.0" stroke="#d6d6d6" stroke-width="2.0" stroke-linecap="round"/>
<path d="M1321.4 575.7L1314.8 574.1" stroke="#d2d2d2" stroke-width="2.5" stroke-linecap="round"/>
<path d="M1321.4 575.7L1327.8 573.3" stroke="#d4d4d4" stroke-width="2.8" stroke-linecap="round"/>
<path d="M1321.6 579.3L1315.0 577.7" stroke="#dadada" stroke-width="1.9" stroke-linecap="round"/>
<path d="M1321.6 579.3L1328.1 576.9" stroke="#d9d9d9" stroke-width="2.3" stroke-linecap="round"/>
<path d="M1321.9 582.9L1314.5 581.2" stroke="#ededed" stroke-width="2.4" stroke-linecap="round"/>
<path d="M1321.9 582.9L1329.0 580.3" stroke="#e3e3e3" stroke-width="1.8" stroke-linecap="round"/>
<ellipse cx="1283.7" cy="521.6" rx="4.7" ry="1.9" transform="rotate(4 1283.7 521.6)" fill="#f5f5f5"/>
<ellipse cx="1269.5" cy="525.7" rx="5.1" ry="2.0" transform="rotate(-9 1269.5 525.7)" fill="#f8f8f8"/>
<ellipse cx="1278.4" cy="532.9" rx="4.7" ry="3.0" transform="rotate(18 1278.4 532.9)" fill="#c8c8c8"/>
<ellipse cx="1262.5" cy="505.8" rx="6.3" ry="2.3" transform="rotate(-0 1262.5 505.8)" fill="#e1e1e1"/>
<ellipse cx="1252.5" cy="499.8" rx="6.8" ry="2.7" transform="rotate(28 1252.5 499.8)" fill="#cacaca"/>
<ellipse cx="1280.7" cy="524.7" rx="4.7" ry="2.1" transform="rotate(18 1280.7 524.7)" fill="#f9f9f9"/>
<ellipse cx="1251.4" cy="497.7" rx="6.9" ry="2.8" transform="rotate(24 1251.4 497.7)" fill="#f3f3f3"/>
<ellipse cx="1256.5" cy="516.4" rx="7.1" ry="2.9" transform="rotate(-2 1256.5 516.4)" fill="#f7f7f7"/>
<ellipse cx="1251.9" cy="511.7" rx="2.3" ry="1.7" transform="rotate(26 1251.9 511.7)" fill="#f5f5f5"/>
<ellipse cx="1264.0" cy="554.8" rx="2.1" ry="1.7" transform="rotate(-8 1264.0 554.8)" fill="#d0d0d0"/>
<ellipse cx="1281.7" cy="501.4" rx="2.9" ry="1.6" transform="rotate(27 1281.7 501.4)" fill="#dddddd"/>
<ellipse cx="1240.5" cy="529.2" rx="8.1" ry="3.5" transform="rotate(26 1240.5 529.2)" fill="#d1d1d1"/>
<ellipse cx="1256.8" cy="557.9" rx="4.6" ry="3.4" transform="rotate(-6 1256.8 557.9)" fill="#eeeeee"/>
<ellipse cx="1248.1" cy="529.5" rx="4.0" ry="1.8" transform="rotate(25 1248.1 529.5)" fill="#f1f1f1"/>
<ellipse cx="1263.7" cy="541.6" rx="5.8" ry="2.0" transform="rotate(18 1263.7 541.6)" fill="#d3d3d3"/>
<ellipse cx="1249.8" cy="509.4" rx="7.9" ry="2.8" transform="rotate(29 1249.8 509.4)" fill="#f8f8f8"/>
<ellipse cx="1260.0" cy="527.9" rx="7.2" ry="2.8" transform="rotate(-9 1260.0 527.9)" fill="#dbdbdb"/>
<ellipse cx="1288.7" cy="572.4" rx="1.8" ry="1.5" transform="rotate(7 1288.7 572.4)" fill="#f9f9f9"/>
<ellipse cx="1267.7" cy="546.1" rx="3.7" ry="2.8" transform="rotate(12 1267.7 546.1)" fill="#e3e3e3"/>
<ellipse cx="1264.8" cy="534.8" rx="8.8" ry="3.4" transform="rotate(13 1264.8 534.8)" fill="#f5f5f5"/>
<ellipse cx="1289.8" cy="555.9" rx="6.2" ry="2.2" transform="rotate(4 1289.8 555.9)" fill="#eeeeee"/>
<ellipse cx="1262.9" cy="512.3" rx="5.9" ry="2.7" transform="rotate(13 1262.9 512.3)" fill="#f7f7f7"/>
<ellipse cx="1278.5" cy="521.4" rx="2.7" ry="1.7" transform="rotate(14 1278.5 521.4)" fill="#f7f7f7"/>
<ellipse cx="1280.6" cy="517.6" rx="5.2" ry="2.4" transform="rotate(-0 1280.6 517.6)" fill="#d0d0d0"/>
<ellipse cx="1243.1" cy="566.7" rx="4.1" ry="3.0" transform="rotate(0 1243.1 566.7)" fill="#efefef"/>
<ellipse cx="1249.5" cy="496.9" rx="5.8" ry="2.3" transform="rotate(15 1249.5 496.9)" fill="#d5d5d5"/>
<ellipse cx="1206.8" cy="506.2" rx="4.5" ry="2.3" transform="rotate(33 1206.8 506.2)" fill="#cdcdcd"/>
<ellipse cx="1223.8" cy="536.9" rx="7.0" ry="3.8" transform="rotate(56 1223.8 536.9)" fill="#d3d3d3"/>
<ellipse cx="1222.4" cy="509.2" rx="6.6" ry="3.1" transform="rotate(47 1222.4 509.2)" fill="#cccccc"/>
<ellipse cx="1232.0" cy="511.8" rx="4.2" ry="3.0" transform="rotate(52 1232.0 511.8)" fill="#e7e7e7"/>
<ellipse cx="1217.1" cy="536.3" rx="5.0" ry="3.1" transform="rotate(70 1217.1 536.3)" fill="#d5d5d5"/>
<ellipse cx="1230.9" cy="514.7" rx="5.1" ry="3.2" transform="rotate(47 1230.9 514.7)" fill="#ececec"/>
<ellipse cx="1210.2" cy="541.0" rx="7.1" ry="3.9" transform="rotate(31 1210.2 541.0)" fill="#eaeaea"/>
<ellipse cx="1224.6" cy="534.2" rx="4.2" ry="3.4" transform="rotate(41 1224.6 534.2)" fill="#dadada"/>
<ellipse cx="1205.4" cy="509.7" rx="8.8" ry="4.4" transform="rotate(36 1205.4 509.7)" fill="#f2f2f2"/>
<ellipse cx="1227.9" cy="528.1" rx="5.1" ry="3.3" transform="rotate(38 1227.9 528.1)" fill="#cdcdcd"/>
<ellipse cx="1199.5" cy="556.7" rx="3.5" ry="2.3" transform="rotate(60 1199.5 556.7)" fill="#ececec"/>
<ellipse cx="1236.0" cy="524.6" rx="5.5" ry="2.8" transform="rotate(42 1236.0 524.6)" fill="#d8d8d8"/>
<ellipse cx="1213.7" cy="540.9" rx="4.0" ry="2.4" transform="rotate(51 1213.7 540.9)" fill="#e3e3e3"/>
<ellipse cx="1199.7" cy="529.2" rx="4.4" ry="3.1" transform="rotate(40 1199.7 529.2)" fill="#d8d8d8"/>
<ellipse cx="1263.9" cy="582.3" rx="7.5" ry="3.6" transform="rotate(-10 1263.9 582.3)" fill="#828282"/>
<ellipse cx="1301.9" cy="578.7" rx="8.1" ry="4.4" transform="rotate(21 1301.9 578.7)" fill="#989898"/>
<ellipse cx="1254.2" cy="573.6" rx="7.2" ry="3.7" transform="rotate(-15 1254.2 573.6)" fill="#9e9e9e"/>
<ellipse cx="1307.0" cy="590.1" rx="4.4" ry="3.0" transform="rotate(-3 1307.0 590.1)" fill="#9e9e9e"/>
<ellipse cx="1279.6" cy="577.8" rx="6.9" ry="3.6" transform="rotate(-11 1279.6 577.8)" fill="#848484"/>
<ellipse cx="1277.6" cy="575.9" rx="4.0" ry="2.3" transform="rotate(24 1277.6 575.9)" fill="#a3a3a3"/>
<ellipse cx="1279.9" cy="571.3" rx="6.3" ry="3.1" transform="rotate(-1 1279.9 571.3)" fill="#949494"/>
<ellipse cx="1266.2" cy="570.1" rx="4.7" ry="3.0" transform="rotate(9 1266.2 570.1)" fill="#999999"/>
<ellipse cx="1329.4" cy="588.3" rx="8.5" ry="3.6" transform="rotate(11 1329.4 588.3)" fill="#a9a9a9"/>
<ellipse cx="1330.9" cy="590.0" rx="7.1" ry="4.1" transform="rotate(7 1330.9 590.0)" fill="#808080"/>
<ellipse cx="1333.2" cy="591.3" rx="8.0" ry="3.8" transform="rotate(-4 1333.2 591.3)" fill="#979797"/>
<ellipse cx="1281.6" cy="578.7" rx="9.2" ry="4.1" transform="rotate(20 1281.6 578.7)" fill="#9b9b9b"/>
<ellipse cx="1306.6" cy="572.6" rx="2.8" ry="2.1" transform="rotate(23 1306.6 572.6)" fill="#9d9d9d"/>
<ellipse cx="1271.7" cy="579.0" rx="3.5" ry="2.9" transform="rotate(-7 1271.7 579.0)" fill="#a9a9a9"/>
<ellipse cx="1262.3" cy="591.5" rx="6.4" ry="2.3" transform="rotate(2 1262.3 591.5)" fill="#a6a6a6"/>
<ellipse cx="1251.0" cy="589.4" rx="7.5" ry="3.2" transform="rotate(20 1251.0 589.4)" fill="#818181"/>
<ellipse cx="1269.5" cy="572.4" rx="3.8" ry="2.8" transform="rotate(2 1269.5 572.4)" fill="#7c7c7c"/>
<ellipse cx="1299.6" cy="577.4" rx="8.0" ry="3.3" transform="rotate(21 1299.6 577.4)" fill="#7c7c7c"/>
<ellipse cx="1106.5" cy="467.0" rx="2.6" ry="1.6" transform="rotate(65 1106.5 467.0)" fill="#848484"/>
<ellipse cx="1099.3" cy="463.9" rx="7.2" ry="2.9" transform="rotate(71 1099.3 463.9)" fill="#8e8e8e"/>
<ellipse cx="1103.2" cy="463.3" rx="8.6" ry="3.4" transform="rotate(50 1103.2 463.3)" fill="#b3b3b3"/>
<ellipse cx="1102.8" cy="440.9" rx="5.6" ry="1.9" transform="rotate(50 1102.8 440.9)" fill="#999999"/>
<ellipse cx="1100.2" cy="431.7" rx="5.6" ry="2.1" transform="rotate(65 1100.2 431.7)" fill="#848484"/>
<ellipse cx="1103.7" cy="437.6" rx="6.8" ry="2.3" transform="rotate(81 1103.7 437.6)" fill="#a8a8a8"/>
<path d="M1121.0 468.0L1128.0 466.0L1148.0 498.0L1166.0 512.0L1160.0 528.0L1140.0 512.0L1124.0 490.0Z" fill="#8c8c8c"/>
<path d="M1138.3 479.5L1147.7 495.8" stroke="#bebebe" stroke-width="2.0" stroke-linecap="round"/>
<path d="M1136.8 468.4L1148.1 483.0" stroke="#bcbcbc" stroke-width="2.1" stroke-linecap="round"/>
<path d="M1122.1 485.3L1128.5 494.6" stroke="#adadad" stroke-width="2.1" stroke-linecap="round"/>
<path d="M1137.4 474.5L1143.7 483.4" stroke="#a7a7a7" stroke-width="1.9" stroke-linecap="round"/>
<path d="M1139.7 481.3L1146.7 491.1" stroke="#c7c7c7" stroke-width="1.2" stroke-linecap="round"/>
<path d="M1129.7 466.5L1135.4 474.6" stroke="#acacac" stroke-width="1.3" stroke-linecap="round"/>
<ellipse cx="1154.1" cy="502.1" rx="5.9" ry="2.3" transform="rotate(41 1154.1 502.1)" fill="#c4c4c4"/>
<ellipse cx="1147.4" cy="512.3" rx="3.6" ry="2.0" transform="rotate(65 1147.4 512.3)" fill="#c2c2c2"/>
<ellipse cx="1148.7" cy="516.2" rx="4.7" ry="2.1" transform="rotate(60 1148.7 516.2)" fill="#b7b7b7"/>
<ellipse cx="1138.6" cy="492.5" rx="5.1" ry="1.9" transform="rotate(63 1138.6 492.5)" fill="#a9a9a9"/>
<ellipse cx="1165.1" cy="524.0" rx="5.8" ry="3.3" transform="rotate(51 1165.1 524.0)" fill="#c3c3c3"/>
<ellipse cx="1142.9" cy="498.7" rx="7.4" ry="3.5" transform="rotate(54 1142.9 498.7)" fill="#9d9d9d"/>
<ellipse cx="1165.4" cy="519.9" rx="6.8" ry="2.8" transform="rotate(61 1165.4 519.9)" fill="#c8c8c8"/>
<ellipse cx="1146.2" cy="515.0" rx="9.6" ry="3.4" transform="rotate(47 1146.2 515.0)" fill="#cbcbcb"/>
<ellipse cx="1249.9" cy="565.8" rx="7.2" ry="2.8" transform="rotate(10 1249.9 565.8)" fill="#939393"/>
<ellipse cx="1192.2" cy="563.2" rx="4.4" ry="2.0" transform="rotate(23 1192.2 563.2)" fill="#949494"/>
<ellipse cx="1242.4" cy="572.5" rx="9.6" ry="3.3" transform="rotate(2 1242.4 572.5)" fill="#797979"/>
<ellipse cx="1202.8" cy="577.2" rx="8.7" ry="3.3" transform="rotate(1 1202.8 577.2)" fill="#7c7c7c"/>
<ellipse cx="1228.6" cy="582.4" rx="4.7" ry="2.8" transform="rotate(25 1228.6 582.4)" fill="#808080"/>
<ellipse cx="1228.6" cy="556.5" rx="5.1" ry="3.2" transform="rotate(17 1228.6 556.5)" fill="#8c8c8c"/>
<ellipse cx="1176.9" cy="569.2" rx="5.8" ry="2.1" transform="rotate(27 1176.9 569.2)" fill="#8e8e8e"/>
<ellipse cx="1239.3" cy="572.0" rx="3.1" ry="1.7" transform="rotate(19 1239.3 572.0)" fill="#747474"/>
<ellipse cx="1230.1" cy="578.5" rx="6.5" ry="3.4" transform="rotate(8 1230.1 578.5)" fill="#737373"/>
<ellipse cx="1231.1" cy="559.5" rx="4.4" ry="3.1" transform="rotate(5 1231.1 559.5)" fill="#969696"/>
<path d="M1311.0 487.0L1327.0 481.0L1324.0 489.0L1313.0 492.5Z" fill="#ebebeb"/>
<ellipse cx="1300.0" cy="343.5" rx="6.6" ry="2.8" transform="rotate(72 1300.0 343.5)" fill="#f2f2f2"/>
<ellipse cx="1307.1" cy="353.1" rx="6.7" ry="2.8" transform="rotate(71 1307.1 353.1)" fill="#e5e5e5"/>
<ellipse cx="1326.2" cy="349.0" rx="5.0" ry="3.4" transform="rotate(96 1326.2 349.0)" fill="#f5f5f5"/>
<ellipse cx="1331.5" cy="352.2" rx="8.5" ry="3.2" transform="rotate(97 1331.5 352.2)" fill="#f7f7f7"/>
<ellipse cx="1304.3" cy="360.9" rx="3.5" ry="2.5" transform="rotate(66 1304.3 360.9)" fill="#fafafa"/>
<ellipse cx="1319.4" cy="347.7" rx="5.9" ry="3.5" transform="rotate(69 1319.4 347.7)" fill="#f5f5f5"/>
<ellipse cx="1317.3" cy="353.1" rx="5.6" ry="3.2" transform="rotate(66 1317.3 353.1)" fill="#e1e1e1"/>
<ellipse cx="1315.4" cy="361.4" rx="4.6" ry="1.6" transform="rotate(80 1315.4 361.4)" fill="#e5e5e5"/>
<ellipse cx="1307.8" cy="353.2" rx="6.1" ry="2.5" transform="rotate(63 1307.8 353.2)" fill="#e1e1e1"/>
<ellipse cx="1318.1" cy="356.0" rx="6.9" ry="3.2" transform="rotate(76 1318.1 356.0)" fill="#eaeaea"/>
<path d="M1466.0 478.5L1399.0 482.0" stroke="#dfdfdf" stroke-width="2.4" stroke-linecap="round"/>
<path d="M1463.4 478.6L1464.9 472.4" stroke="#c8c8c8" stroke-width="2.3" stroke-linecap="round"/>
<path d="M1463.4 478.6L1465.6 484.7" stroke="#d4d4d4" stroke-width="2.0" stroke-linecap="round"/>
<path d="M1458.2 478.9L1459.8 472.4" stroke="#cecece" stroke-width="2.2" stroke-linecap="round"/>
<path d="M1458.2 478.9L1460.5 485.2" stroke="#eeeeee" stroke-width="2.6" stroke-linecap="round"/>
<path d="M1453.0 479.2L1454.3 474.1" stroke="#e6e6e6" stroke-width="2.2" stroke-linecap="round"/>
<path d="M1453.0 479.2L1454.8 484.1" stroke="#c4c4c4" stroke-width="2.1" stroke-linecap="round"/>
<path d="M1447.8 479.4L1449.0 474.5" stroke="#cccccc" stroke-width="1.9" stroke-linecap="round"/>
<path d="M1447.8 479.4L1449.6 484.3" stroke="#cccccc" stroke-width="2.0" stroke-linecap="round"/>
<path d="M1442.6 479.7L1444.0 474.1" stroke="#f2f2f2" stroke-width="2.6" stroke-linecap="round"/>
<path d="M1442.6 479.7L1444.6 485.1" stroke="#ececec" stroke-width="1.8" stroke-linecap="round"/>
<path d="M1437.4 480.0L1438.6 475.4" stroke="#f3f3f3" stroke-width="2.1" stroke-linecap="round"/>
<path d="M1437.4 480.0L1439.0 484.4" stroke="#c5c5c5" stroke-width="1.7" stroke-linecap="round"/>
<path d="M1432.2 480.3L1434.0 473.3" stroke="#dbdbdb" stroke-width="2.3" stroke-linecap="round"/>
<path d="M1432.2 480.3L1434.7 487.0" stroke="#d4d4d4" stroke-width="2.6" stroke-linecap="round"/>
<path d="M1427.1 480.5L1428.2 475.7" stroke="#f0f0f0" stroke-width="1.9" stroke-linecap="round"/>
<path d="M1427.1 480.5L1428.7 485.2" stroke="#eeeeee" stroke-width="2.1" stroke-linecap="round"/>
<path d="M1421.9 480.8L1423.5 474.0" stroke="#dadada" stroke-width="1.7" stroke-linecap="round"/>
<path d="M1421.9 480.8L1424.2 487.4" stroke="#dfdfdf" stroke-width="2.2" stroke-linecap="round"/>
<path d="M1416.7 481.1L1418.3 474.3" stroke="#cbcbcb" stroke-width="1.8" stroke-linecap="round"/>
<path d="M1416.7 481.1L1419.0 487.6" stroke="#cfcfcf" stroke-width="2.5" stroke-linecap="round"/>
<path d="M1411.5 481.3L1413.2 474.5" stroke="#c4c4c4" stroke-width="2.2" stroke-linecap="round"/>
<path d="M1411.5 481.3L1413.9 488.0" stroke="#e8e8e8" stroke-width="1.7" stroke-linecap="round"/>
<path d="M1406.3 481.6L1407.7 475.7" stroke="#f1f1f1" stroke-width="2.2" stroke-linecap="round"/>
<path d="M1406.3 481.6L1408.3 487.4" stroke="#cccccc" stroke-width="2.3" stroke-linecap="round"/>
<path d="M1401.1 481.9L1402.4 476.6" stroke="#d8d8d8" stroke-width="1.9" stroke-linecap="round"/>
<path d="M1401.1 481.9L1402.9 487.1" stroke="#c3c3c3" stroke-width="2.1" stroke-linecap="round"/>
<path d="M1424.0 521.0L1432.0 514.0L1436.0 520.5L1461.0 516.0L1434.0 534.0L1427.0 538.0Z" fill="#c3c3c3"/>
<path d="M1417.1 556.4L1439.0 550.6" stroke="#c2c2c2" stroke-width="3.0" stroke-linecap="round"/>
<path d="M1381.6 559.8L1408.3 554.8" stroke="#b3b3b3" stroke-width="2.6" stroke-linecap="round"/>
<path d="M1396.5 563.4L1436.1 555.3" stroke="#d2d2d2" stroke-width="3.0" stroke-linecap="round"/>
<path d="M1383.0 556.0L1398.0 545.0L1400.0 552.0L1390.0 566.0Z" fill="#bebebe"/>
<path d="M1548.4 348.1L1551.4 354.5" stroke="#989898" stroke-width="2.4" stroke-linecap="round"/>
<path d="M1550.2 348.7L1553.4 357.1" stroke="#727272" stroke-width="2.1" stroke-linecap="round"/>
<path d="M1535.1 371.6L1536.1 378.5" stroke="#8e8e8e" stroke-width="1.9" stroke-linecap="round"/>
<path d="M1545.4 372.1L1549.0 381.6" stroke="#6a6a6a" stroke-width="2.4" stroke-linecap="round"/>
<path d="M1526.5 370.0L1527.8 376.4" stroke="#7d7d7d" stroke-width="1.8" stroke-linecap="round"/>
<path d="M1545.3 371.6L1546.5 380.0" stroke="#797979" stroke-width="1.8" stroke-linecap="round"/>
<path d="M1543.6 349.2L1545.3 357.1" stroke="#939393" stroke-width="2.5" stroke-linecap="round"/>
<path d="M1524.4 366.9L1528.7 376.6" stroke="#878787" stroke-width="2.2" stroke-linecap="round"/>
<path d="M1526.2 360.3L1530.0 369.3" stroke="#8b8b8b" stroke-width="2.6" stroke-linecap="round"/>
<path d="M1536.3 346.3L1540.5 355.1" stroke="#9b9b9b" stroke-width="1.9" stroke-linecap="round"/>
<path d="M1544.0 372.1L1545.6 380.0" stroke="#7a7a7a" stroke-width="1.4" stroke-linecap="round"/>
<path d="M1524.1 373.6L1527.5 382.1" stroke="#696969" stroke-width="2.6" stroke-linecap="round"/>
<path d="M1484.0 483.7L1489.8 475.3" stroke="#878787" stroke-width="1.6" stroke-linecap="round"/>
<path d="M1518.1 477.2L1523.7 468.6" stroke="#878787" stroke-width="1.0" stroke-linecap="round"/>
<path d="M1502.5 475.9L1508.7 466.2" stroke="#898989" stroke-width="1.4" stroke-linecap="round"/>
<path d="M1520.4 476.3L1524.4 468.6" stroke="#5f5f5f" stroke-width="1.8" stroke-linecap="round"/>
<path d="M1485.1 480.7L1488.6 475.5" stroke="#5f5f5f" stroke-width="1.4" stroke-linecap="round"/>
<path d="M1512.1 478.7L1518.7 468.9" stroke="#888888" stroke-width="1.0" stroke-linecap="round"/>
<ellipse cx="1309.0" cy="581.4" rx="3.6" ry="2.1" transform="rotate(1 1309.0 581.4)" fill="#e7e7e7"/>
<ellipse cx="1307.6" cy="593.8" rx="7.2" ry="2.6" transform="rotate(-8 1307.6 593.8)" fill="#c3c3c3"/>
<ellipse cx="1328.3" cy="568.1" rx="6.8" ry="2.5" transform="rotate(6 1328.3 568.1)" fill="#d9d9d9"/>
<ellipse cx="1333.8" cy="565.1" rx="3.2" ry="1.8" transform="rotate(20 1333.8 565.1)" fill="#e2e2e2"/>
<ellipse cx="1321.8" cy="583.7" rx="3.6" ry="1.3" transform="rotate(13 1321.8 583.7)" fill="#e8e8e8"/>
<ellipse cx="1314.8" cy="590.7" rx="2.7" ry="2.1" transform="rotate(12 1314.8 590.7)" fill="#bdbdbd"/>
<ellipse cx="1301.3" cy="597.6" rx="3.0" ry="2.1" transform="rotate(9 1301.3 597.6)" fill="#cfcfcf"/>
<ellipse cx="1328.2" cy="583.6" rx="4.0" ry="1.5" transform="rotate(21 1328.2 583.6)" fill="#dddddd"/>
<ellipse cx="1309.7" cy="560.0" rx="5.0" ry="2.4" transform="rotate(-13 1309.7 560.0)" fill="#c1c1c1"/>
<ellipse cx="1326.8" cy="547.5" rx="4.1" ry="1.6" transform="rotate(20 1326.8 547.5)" fill="#bcbcbc"/>
<ellipse cx="1331.0" cy="556.3" rx="6.8" ry="2.5" transform="rotate(-4 1331.0 556.3)" fill="#dedede"/>
<ellipse cx="1333.1" cy="599.4" rx="3.2" ry="2.5" transform="rotate(25 1333.1 599.4)" fill="#dbdbdb"/>
<ellipse cx="1320.2" cy="557.6" rx="2.7" ry="1.5" transform="rotate(16 1320.2 557.6)" fill="#efefef"/>
<ellipse cx="1311.7" cy="570.7" rx="3.8" ry="2.1" transform="rotate(7 1311.7 570.7)" fill="#c8c8c8"/>
<ellipse cx="1333.4" cy="589.2" rx="4.1" ry="2.7" transform="rotate(4 1333.4 589.2)" fill="#efefef"/>
<ellipse cx="1304.0" cy="587.7" rx="3.4" ry="1.7" transform="rotate(-13 1304.0 587.7)" fill="#c3c3c3"/>
<ellipse cx="1302.0" cy="573.9" rx="3.4" ry="1.3" transform="rotate(-6 1302.0 573.9)" fill="#bcbcbc"/>
<ellipse cx="1302.9" cy="548.1" rx="3.6" ry="1.7" transform="rotate(-13 1302.9 548.1)" fill="#d5d5d5"/>
<ellipse cx="1397.1" cy="443.5" rx="2.5" ry="1.4" transform="rotate(179 1397.1 443.5)" fill="#9e9e9e"/>
<ellipse cx="1357.1" cy="463.6" rx="5.7" ry="2.4" transform="rotate(128 1357.1 463.6)" fill="#a1a1a1"/>
<ellipse cx="1351.3" cy="429.0" rx="2.7" ry="2.1" transform="rotate(8 1351.3 429.0)" fill="#999999"/>
<ellipse cx="1407.1" cy="449.3" rx="3.9" ry="1.8" transform="rotate(30 1407.1 449.3)" fill="#a0a0a0"/>
<ellipse cx="1426.8" cy="440.7" rx="5.1" ry="1.8" transform="rotate(157 1426.8 440.7)" fill="#929292"/>
<ellipse cx="1393.0" cy="464.5" rx="2.5" ry="1.0" transform="rotate(165 1393.0 464.5)" fill="#9b9b9b"/>
<ellipse cx="1411.4" cy="454.7" rx="5.7" ry="2.0" transform="rotate(114 1411.4 454.7)" fill="#a9a9a9"/>
<ellipse cx="1350.0" cy="463.3" rx="3.3" ry="1.9" transform="rotate(51 1350.0 463.3)" fill="#989898"/>
<ellipse cx="1361.9" cy="421.5" rx="4.7" ry="1.8" transform="rotate(97 1361.9 421.5)" fill="#a2a2a2"/>
<ellipse cx="1395.7" cy="448.1" rx="2.5" ry="2.0" transform="rotate(139 1395.7 448.1)" fill="#9a9a9a"/>
<path d="M1443.1 400.3L1444.3 389.8" stroke="#9d9d9d" stroke-width="1.3" stroke-linecap="round"/>
<path d="M1455.9 407.9L1461.8 396.4" stroke="#979797" stroke-width="0.9" stroke-linecap="round"/>
<path d="M1413.3 367.1L1423.5 353.9" stroke="#a3a3a3" stroke-width="1.2" stroke-linecap="round"/>
<path d="M1453.1 355.6L1460.9 347.8" stroke="#9b9b9b" stroke-width="1.0" stroke-linecap="round"/>
<path d="M1433.5 404.4L1440.1 391.3" stroke="#999999" stroke-width="1.3" stroke-linecap="round"/>
<path d="M1435.1 369.8L1441.5 359.1" stroke="#989898" stroke-width="0.7" stroke-linecap="round"/>
</g>
<path d="M1312 378 Q1314 366 1326 364 Q1338 361 1345 368 Q1349 380 1346 394 Q1341 408 1329 409 Q1317 406 1313 394 Z" fill="#0a0a0a" filter="url(#b1)"/>
<path d="M1318 372 Q1326 366 1336 368 L1330 378 Q1322 376 1318 384 Z" fill="#2e2e2e" filter="url(#b1)"/>
<path d="M1556.1 346.0C1555.6 353.1 1554.7 360.2 1553.6 367.1C1552.5 374.1 1551.1 381.0 1549.5 387.9C1547.9 394.7 1546.1 401.5 1544.2 408.2C1542.2 414.9 1540.1 421.6 1538.0 428.3C1535.9 434.9 1533.7 441.6 1531.4 448.3C1529.1 455.0 1527.0 461.9 1524.5 468.7C1522.0 475.5 1519.5 482.5 1516.5 489.2C1513.4 495.9 1510.2 502.7 1506.2 508.9C1502.2 515.2 1497.7 521.2 1492.6 526.6C1487.6 532.0 1481.8 536.8 1475.9 541.3C1469.9 545.7 1463.5 549.5 1457.1 553.2C1450.7 556.9 1444.1 560.1 1437.5 563.4C1431.0 566.7 1424.4 569.9 1417.8 573.0C1411.2 576.1 1404.7 579.2 1397.9 582.1C1391.2 585.0 1384.4 587.9 1377.5 590.4C1370.6 593.0 1363.5 595.4 1356.3 597.4C1349.2 599.4 1341.8 601.2 1334.4 602.6C1327.1 604.0 1319.5 605.0 1312.0 605.7C1304.5 606.3 1296.8 606.6 1289.2 606.5C1281.6 606.3 1273.9 605.8 1266.4 604.8C1258.8 603.9 1251.2 602.5 1243.8 600.7C1236.3 598.9 1228.9 596.7 1221.7 594.2C1214.4 591.6 1207.3 588.6 1200.4 585.3C1193.5 582.0 1186.8 578.2 1180.3 574.2C1173.7 570.2 1167.4 565.8 1161.4 561.1C1155.4 556.4 1149.6 551.4 1144.0 546.2C1138.5 540.9 1133.2 535.4 1128.3 529.7C1123.3 524.0 1118.6 518.1 1114.2 512.0C1109.8 505.9 1105.7 499.5 1101.9 493.1C1098.0 486.7 1094.5 480.1 1091.2 473.5C1088.0 466.8 1085.0 460.0 1082.3 453.1C1079.5 446.3 1077.1 439.3 1074.9 432.3C1072.7 425.3 1070.8 418.2 1069.1 411.1C1067.4 404.0 1066.0 396.8 1064.8 389.6C1063.6 382.4 1062.7 375.1 1062.0 367.9C1061.3 360.6 1060.9 353.3 1060.7 346.0C1060.5 338.7 1060.6 331.4 1061.0 324.0C1061.3 316.7 1061.9 309.4 1062.8 302.1C1063.6 294.7 1064.8 287.4 1066.2 280.1C1067.7 272.9 1069.4 265.6 1071.4 258.4C1073.4 251.3 1075.8 244.1 1078.4 237.1C1081.0 230.0 1084.0 223.1 1087.2 216.2C1090.5 209.4 1094.1 202.7 1098.0 196.1C1101.9 189.6 1106.1 183.2 1110.6 177.0C1115.1 170.8 1119.9 164.8 1125.0 159.0C1130.2 153.3 1135.6 147.7 1141.3 142.5C1146.9 137.3 1152.9 132.3 1159.1 127.6C1165.3 123.0 1171.7 118.6 1178.4 114.5C1185.0 110.5 1191.9 106.8 1198.9 103.4C1205.9 100.1 1213.1 97.1 1220.4 94.4C1227.7 91.8 1235.2 89.5 1242.8 87.6C1250.3 85.7 1257.9 84.1 1265.6 82.9C1273.3 81.8 1281.0 81.0 1288.8 80.5C1296.5 80.1 1304.3 80.0 1312.0 80.3C1319.7 80.5 1327.4 81.2 1335.1 82.1C1342.7 83.1 1350.3 84.4 1357.8 86.1C1365.3 87.7 1372.8 89.7 1380.1 92.0C1387.4 94.3 1394.6 96.9 1401.6 99.8C1408.6 102.7 1415.6 105.9 1422.3 109.4C1429.1 112.9 1435.6 116.7 1442.0 120.8C1448.4 124.8 1454.6 129.2 1460.6 133.8C1466.6 138.3 1472.4 143.2 1477.9 148.3C1483.4 153.3 1488.8 158.7 1493.8 164.2C1498.8 169.7 1503.6 175.5 1508.1 181.4C1512.6 187.4 1516.9 193.5 1520.8 199.8C1524.7 206.1 1528.3 212.6 1531.6 219.2C1534.9 225.8 1537.9 232.6 1540.6 239.4C1543.3 246.2 1545.6 253.2 1547.6 260.2C1549.6 267.3 1551.3 274.4 1552.7 281.5C1554.0 288.6 1555.0 295.8 1555.7 303.0C1556.4 310.2 1556.8 317.4 1556.9 324.6C1556.9 331.7 1556.7 338.9 1556.1 346.0Z" fill="url(#lg)"/>
<path d="M1580.0 240.0C1591.2 255.0 1591.2 318.3 1592.0 345.0C1592.8 371.7 1589.5 380.8 1585.0 400.0C1580.5 419.2 1574.2 440.0 1565.0 460.0C1555.8 480.0 1543.3 501.7 1530.0 520.0C1516.7 538.3 1503.3 555.0 1485.0 570.0C1466.7 585.0 1442.5 600.8 1420.0 610.0C1397.5 619.2 1360.8 627.1 1350.0 625.0C1339.2 622.9 1346.7 605.1 1355.0 597.5C1363.3 589.9 1385.0 587.0 1400.0 579.5C1415.0 572.0 1433.8 562.0 1445.0 552.5C1456.2 543.0 1461.8 533.8 1467.5 522.5C1473.2 511.2 1476.2 498.8 1479.5 485.0C1482.8 471.2 1485.2 455.0 1487.0 440.0C1488.8 425.0 1488.8 410.0 1490.5 395.0C1492.2 380.0 1494.1 365.8 1497.0 350.0C1499.9 334.2 1503.3 315.8 1508.0 300.0C1512.7 284.2 1513.0 265.0 1525.0 255.0C1537.0 245.0 1568.8 225.0 1580.0 240.0Z" fill="url(#cg)" filter="url(#b3)"/>
<g stroke="#6a6a6a" stroke-width="1.5" stroke-linecap="round" filter="url(#b1)" opacity="0.9"><path d="M1483 480l7-13M1490 479l6-11M1497 476l5-9M1504 473l5-8M1512 470l6-7M1522 466l7-6M1481 527l9-8M1551 396l2-12M1546 420l3-10"/></g>
</g>
</g>
<ellipse cx="1016.5" cy="474" rx="2.6" ry="2" fill="#ddd" filter="url(#b1)"/>
<ellipse cx="1008" cy="483" rx="5" ry="3.2" transform="rotate(60 1008 483)" fill="#8c8c8c" filter="url(#b1)"/>
<circle cx="1026.5" cy="621.5" r="1.4" fill="#aaa"/>
<circle cx="1148" cy="587.5" r="1.3" fill="#bbb"/>
<ellipse cx="1278.6" cy="286.2" rx="65.9" ry="59.9" fill="none" stroke="#e4e463" stroke-width="1.05" stroke-opacity="0.9"/>
<text x="1216.9" y="217.1" font-size="14.5" fill="#1fc01f" textLength="133" lengthAdjust="spacingAndGlyphs">Set18-45_body_bulk</text>
<g font-size="14.4" font-weight="bold" fill="#fff">
<text x="958.1" y="640.8" textLength="23.2" lengthAdjust="spacingAndGlyphs">139</text>
<text x="953.4" y="659.9" textLength="30.5" lengthAdjust="spacingAndGlyphs">Ch 1</text>
<text x="1002.5" y="659.9" textLength="77.4" lengthAdjust="spacingAndGlyphs">MAG: 850x</text>
<text x="1097.5" y="659.9" textLength="67.1" lengthAdjust="spacingAndGlyphs">HV: 15 kV</text>
<text x="1183.4" y="659.9" textLength="91.4" lengthAdjust="spacingAndGlyphs">WD: 13,4 mm</text>
<text x="1292.4" y="659.9" textLength="81.3" lengthAdjust="spacingAndGlyphs">Px: 0,19 µm</text>
<text x="1615.5" y="642" textLength="41.1" lengthAdjust="spacingAndGlyphs">30 µm</text>
</g>
<path d="M1557.8 649.7H1716.8M1557.8 640.7V658.6M1716.8 640.7V658.6" stroke="#fff" stroke-width="2" fill="none"/>
</g>
<!-- table -->
<rect x="91.3" y="1467.6" width="1618.9" height="30.6" fill="#d9d9d9"/>
<path d="M91.3 1467.6H1710.2V1529.4H91.3ZM91.3 1498.2H1710.2" stroke="#111" stroke-width="1.3" fill="none"/>
<g font-size="20.2" fill="#111">
<text x="131.7" y="1490.6" textLength="39.7" lengthAdjust="spacingAndGlyphs">MM</text>
<text x="216.4" y="1490.6" textLength="153.9" lengthAdjust="spacingAndGlyphs">Spectrum name</text>
<text x="602.9" y="1490.6" textLength="66.7" lengthAdjust="spacingAndGlyphs">setting</text>
<text x="677.2" y="1490.6" textLength="12.1" lengthAdjust="spacingAndGlyphs">C</text>
<text x="701.4" y="1490.6" textLength="13.7" lengthAdjust="spacingAndGlyphs">O</text>
<text x="725.7" y="1490.6" textLength="54.0" lengthAdjust="spacingAndGlyphs">Na2O</text>
<text x="794.8" y="1490.6" textLength="45.5" lengthAdjust="spacingAndGlyphs">MgO</text>
<text x="852.9" y="1490.6" textLength="59.6" lengthAdjust="spacingAndGlyphs">Al2O3</text>
<text x="926.4" y="1490.6" textLength="43.7" lengthAdjust="spacingAndGlyphs">SiO2</text>
<text x="987.3" y="1490.6" textLength="51.1" lengthAdjust="spacingAndGlyphs">P2O5</text>
<text x="1059.7" y="1490.6" textLength="37.9" lengthAdjust="spacingAndGlyphs">SO3</text>
<text x="1113.3" y="1490.6" textLength="38.5" lengthAdjust="spacingAndGlyphs">K2O</text>
<text x="1167.4" y="1490.6" textLength="39.0" lengthAdjust="spacingAndGlyphs">CaO</text>
<text x="1224.1" y="1490.6" textLength="44.6" lengthAdjust="spacingAndGlyphs">TiO2</text>
<text x="1277.3" y="1490.6" textLength="59.7" lengthAdjust="spacingAndGlyphs">Cr2O3</text>
<text x="1347.6" y="1490.6" textLength="48.6" lengthAdjust="spacingAndGlyphs">MnO</text>
<text x="1418.0" y="1490.6" textLength="37.9" lengthAdjust="spacingAndGlyphs">FeO</text>
<text x="1470.6" y="1490.6" textLength="23.8" lengthAdjust="spacingAndGlyphs">Co</text>
<text x="1518.7" y="1490.6" textLength="19.7" lengthAdjust="spacingAndGlyphs">Ni</text>
<text x="1570.3" y="1490.6" textLength="23.8" lengthAdjust="spacingAndGlyphs">Cu</text>
<text x="1613.3" y="1490.6" textLength="21.8" lengthAdjust="spacingAndGlyphs">Zn</text>
<text x="1657.3" y="1490.6" textLength="41.0" lengthAdjust="spacingAndGlyphs">Sum</text>
<text x="94.3" y="1521.6" textLength="104.6" lengthAdjust="spacingAndGlyphs">THMM605</text>
<text x="216.6" y="1521.6" textLength="202.0" lengthAdjust="spacingAndGlyphs">Set18-45_body_bulk</text>
<text x="630.7" y="1521.6" textLength="10.1" lengthAdjust="spacingAndGlyphs">1</text>
<text x="677.2" y="1521.6" textLength="11.6" lengthAdjust="spacingAndGlyphs">0</text>
<text x="702.4" y="1521.6" textLength="11.1" lengthAdjust="spacingAndGlyphs">0</text>
<text x="797.4" y="1521.6" textLength="40.4" lengthAdjust="spacingAndGlyphs">16,6</text>
<text x="869.1" y="1521.6" textLength="28.3" lengthAdjust="spacingAndGlyphs">3,6</text>
<text x="927.1" y="1521.6" textLength="41.5" lengthAdjust="spacingAndGlyphs">39,7</text>
<text x="1172.5" y="1521.6" textLength="28.4" lengthAdjust="spacingAndGlyphs">5,3</text>
<text x="1292.4" y="1521.6" textLength="28.9" lengthAdjust="spacingAndGlyphs">0,0</text>
<text x="1416.4" y="1521.6" textLength="40.5" lengthAdjust="spacingAndGlyphs">34,4</text>
<text x="1514.1" y="1521.6" textLength="28.9" lengthAdjust="spacingAndGlyphs">0,4</text>
<text x="1651.8" y="1521.6" textLength="53.1" lengthAdjust="spacingAndGlyphs">100,0</text>
</g>
<text x="95.7" y="1553" font-size="17.6" fill="#111" textLength="1435.7" lengthAdjust="spacingAndGlyphs">setting 1: preset elements: C(not unfolding),O,Mg,Al,Si,Ca,Cr,Fe,Ni; optional elements: Na,P,S,K,Ti,Mn,Co,Cu,Zn (values normalized to 100%; measurement poorly calibrated)</text>
</svg>
</body></html>
